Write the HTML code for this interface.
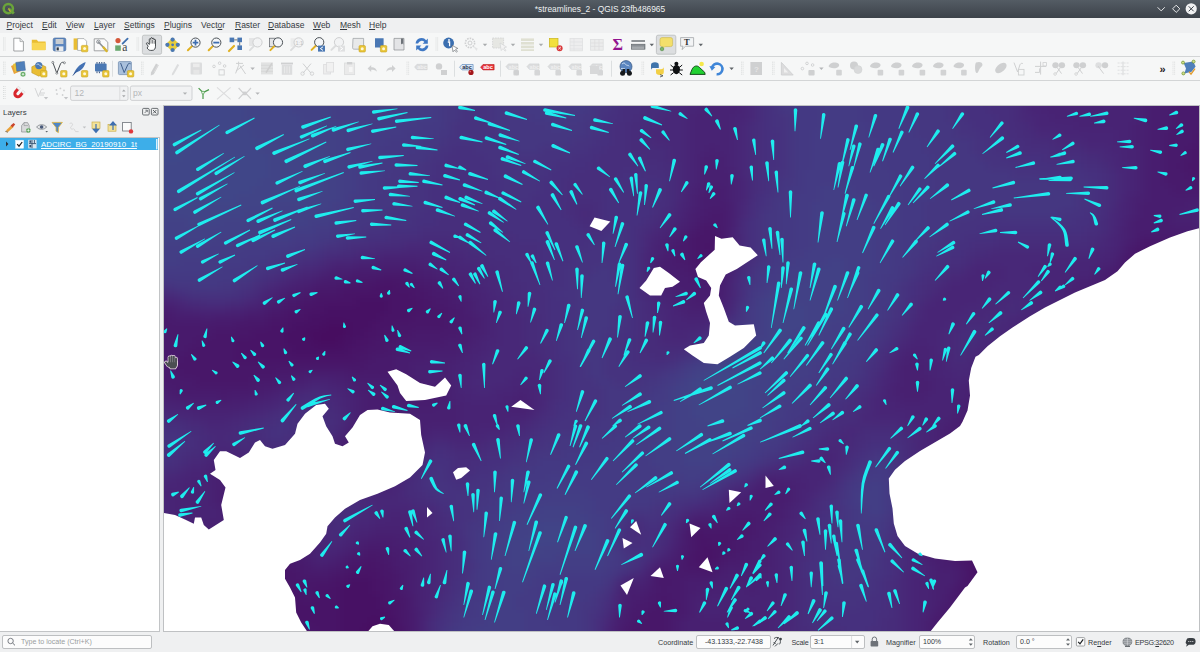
<!DOCTYPE html>
<html><head><meta charset="utf-8"><title>streamlines_2 - QGIS</title>
<style>
*{box-sizing:border-box;margin:0;padding:0}
html,body{width:1200px;height:652px;overflow:hidden;background:#eff0f1}
body{position:relative;font-family:"Liberation Sans","DejaVu Sans",sans-serif;font-size:8.6px;color:#353a3f}
.abs{position:absolute}
#title{left:0;top:0;width:1200px;height:18px;background:linear-gradient(#545c64,#3c4249)}
#title .t{left:0;width:1200px;top:4.4px;text-align:center;color:#eef0f1;font-size:8.4px}
#menubar{left:0;top:18px;width:1200px;height:15px;background:#eff0f1}
#menubar span{position:absolute;top:2.4px;font-size:8.5px;white-space:nowrap}
#menubar u{text-decoration-thickness:.6px;text-underline-offset:1px}
.tb{left:0;width:1200px;height:24px;background:#f6f7f7;border-bottom:1px solid #d3d5d6}
#layers{left:0;top:105px;width:161px;height:527px;background:#eff0f1}
#ltree{left:0;top:137px;width:160px;height:495px;background:#fff;border:1px solid #c2c4c6;border-left:none}
#lsel{left:0;top:138px;width:158px;height:12px;background:#3daee9}
#mapframe{left:163px;top:105px;width:1037px;height:527px;background:#fff;border:1px solid #bfc1c3}
#map{left:164px;top:106px;width:1035px;height:525px;overflow:hidden;background:#440154}
#status{left:0;top:632px;width:1200px;height:20px;background:#eff0f1}
.inp{background:#fcfcfc;border:1px solid #bdbfc1;border-radius:2px;height:14px;top:635px;font-size:7.1px;line-height:13px;padding-left:4px;white-space:nowrap;overflow:hidden}
.lbl{top:638.2px;font-size:7.2px;white-space:nowrap}
</style></head><body>
<div id="title" class="abs"><div class="t abs">*streamlines_2 - QGIS 23fb486965</div>
<svg class="abs" style="left:0;top:0" width="1200" height="18" viewBox="0 0 1200 18">
<circle cx="8.3" cy="8.6" r="4.6" fill="none" stroke="#6aa43a" stroke-width="2.6"/><path d="M8.5 8.5L13.8 13.6" stroke="#6aa43a" stroke-width="2.8"/><path d="M7.6 7.2l3.6 4.4-1.6-.2z" fill="#f0a13a"/>
<path d="M1157.6 7.3l3.6 3.6 3.6-3.6" fill="none" stroke="#e8eaeb" stroke-width="1"/>
<path d="M1176.2 5.2l3.6 3.6-3.6 3.6-3.6-3.6z" fill="none" stroke="#e8eaeb" stroke-width="1"/>
<circle cx="1191.2" cy="8.8" r="5.6" fill="#f1f2f3"/><path d="M1188.7 6.3l5 5m0-5l-5 5" stroke="#3c4249" stroke-width="1"/>
</svg></div>
<div id="menubar" class="abs">
<span style="left:6.5px"><u>P</u>roject</span><span style="left:42px"><u>E</u>dit</span><span style="left:66px"><u>V</u>iew</span><span style="left:94px"><u>L</u>ayer</span><span style="left:124px"><u>S</u>ettings</span><span style="left:164px"><u>P</u>lugins</span><span style="left:201px">Vect<u>o</u>r</span><span style="left:235px"><u>R</u>aster</span><span style="left:268px"><u>D</u>atabase</span><span style="left:313px"><u>W</u>eb</span><span style="left:340px"><u>M</u>esh</span><span style="left:369px"><u>H</u>elp</span>
</div>
<div class="tb abs" style="top:33px"></div>
<div class="tb abs" style="top:57px"></div>
<div class="tb abs" style="top:81px;border-bottom:none"></div>
<svg class="abs" style="left:0;top:0;pointer-events:none" width="1200" height="106" viewBox="0 0 1200 106"><path d="M3.5 37.5v14M5.1 37.5v14" stroke="#d0d2d3" stroke-width=".7" stroke-dasharray="1 1"/><path d="M13.8 38.2h6.2l3.4 3.4v9.4h-9.6z" fill="#fff" stroke="#8b8e91" stroke-width=".8"/><path d="M20 38.2v3.4h3.4" fill="#e6e7e8" stroke="#8b8e91" stroke-width=".6"/><path d="M31.8 39.8h5l1.4 1.6h7.4v8.6h-13.8z" fill="#e9bd33"/><path d="M31.8 42.8h14l-.6 7.4h-13z" fill="#f8d653"/><rect x="53.2" y="38" width="12.6" height="13" rx="1.6" fill="#5c86bf" stroke="#44699c" stroke-width=".6"/><rect x="55.6" y="39" width="7.8" height="5" fill="#c9cdd2"/><rect x="55.6" y="46.4" width="7.8" height="4.6" fill="#e9ebee"/><rect x="56.6" y="47.4" width="2.2" height="3" fill="#2f3a48"/><path d="M73.6 38.4h5v11.4h-5z" fill="#e9bd33"/><path d="M77.6 38.6h6.4l2.6 2.6v9.2h-9z" fill="#fff" stroke="#9a9da0" stroke-width=".7"/><rect x="81.4" y="45.4" width="6.4" height="6.4" rx="1" fill="#e9c63a" stroke="#c9a21c" stroke-width=".6"/><circle cx="84.6" cy="48.6" r="1.5" fill="#fff8d8"/><path d="M94.2 38.8h10l3.6 3.4v8.6h-13.6z" fill="#fafafa" stroke="#8b8e91" stroke-width=".8"/><path d="M98 41.5l7 7.5" stroke="#8b9096" stroke-width="1.6"/><path d="M103.6 47.4l3 3.6" stroke="#d9b62c" stroke-width="2.4" stroke-linecap="round"/><circle cx="98.4" cy="41.8" r="1.7" fill="none" stroke="#8b9096" stroke-width="1"/><circle cx="118" cy="40.6" r="2.6" fill="#d4573a"/><rect x="115.2" y="45.4" width="5.6" height="5.4" fill="#6aa870"/><path d="M122.6 43.6l5-5" stroke="#3e6fae" stroke-width="1.8" stroke-linecap="round"/><text x="122.2" y="51" font-family="Liberation Serif,serif" font-size="11.5" fill="#3a3e42">a</text><path d="M137.0 37.5v14M138.6 37.5v14" stroke="#d0d2d3" stroke-width=".7" stroke-dasharray="1 1"/><rect x="142.4" y="35.2" width="19.2" height="19" rx="1.6" fill="#dcdee0" stroke="#b9bbbd" stroke-width=".8"/><path d="M148.2 46.2l-1.6-2.2c-.6-.9.5-1.8 1.3-1l1.4 1.5v-5.1c0-1 1.5-1 1.5 0v-1c0-1 1.6-1 1.6 0v.6c0-1 1.6-1 1.6 0v1c0-.9 1.5-.9 1.5 0v6.200c0 2.6-1.2 4.2-3.4 4.200h-1.500c-1.5 0-2.5-1-3.5-2.400z" fill="#fff" stroke="#2b2f33" stroke-width=".85" stroke-linejoin="round"/><path d="M151 39.800v3.800M152.6 39.600v4M154.2 40.400v3.4" stroke="#2b2f33" stroke-width=".6"/><path d="M172.6 37.600l7.2 7.2-7.2 7.2-7.2-7.200z" fill="#e8cd3a"/><g fill="#4a78b4"><circle cx="172.6" cy="39.6" r="2.1"/><circle cx="172.6" cy="50" r="2.1"/><circle cx="167.4" cy="44.8" r="2.1"/><circle cx="177.8" cy="44.8" r="2.1"/><circle cx="172.6" cy="44.8" r="1.4"/></g><path d="M192.1 46.1l-4.2 4.2" stroke="#e0b020" stroke-width="2" stroke-linecap="round"/><circle cx="195.5" cy="42.6" r="4.6" fill="#f4f6f8" stroke="#4d5358" stroke-width="1"/><path d="M192.7 42.600h5.600M195.5 39.800v5.6" stroke="#3d6db0" stroke-width="1.7"/><path d="M212.9 46.1l-4.2 4.2" stroke="#e0b020" stroke-width="2" stroke-linecap="round"/><circle cx="216.3" cy="42.6" r="4.6" fill="#f4f6f8" stroke="#4d5358" stroke-width="1"/><path d="M213.3 42.600h6" stroke="#3d6db0" stroke-width="1.8"/><g fill="#4a78b4"><rect x="229.6" y="37.6" width="4.6" height="4.6"/><rect x="237.4" y="37.6" width="4.6" height="4.6"/><rect x="237.4" y="45.4" width="4.6" height="4.6"/></g><path d="M234 46l-5 5" stroke="#e0b020" stroke-width="2.2" stroke-linecap="round"/><path d="M234.2 39.900h3.200M239.7 42.200v3.2" stroke="#4d5358" stroke-width=".8"/><rect x="249" y="38" width="6" height="8" fill="#e4e5e6"/><path d="M254.1 45.9l-4.2 4.2" stroke="#dcddde" stroke-width="2" stroke-linecap="round"/><circle cx="257.5" cy="42.4" r="4.6" fill="#f2f3f4" stroke="#cfd0d1" stroke-width="1"/><rect x="269.6" y="38.2" width="6" height="8.6" fill="#e3e4e6" stroke="#5a5f64" stroke-width=".7"/><path d="M274.6 45.9l-4.2 4.2" stroke="#e0b020" stroke-width="2" stroke-linecap="round"/><circle cx="278.0" cy="42.4" r="4.6" fill="#f4f6f8" stroke="#4d5358" stroke-width="1"/><rect x="290.6" y="38.2" width="6" height="8.6" fill="#ebecec"/><path d="M295.2 45.9l-4.2 4.2" stroke="#dcddde" stroke-width="2" stroke-linecap="round"/><circle cx="298.6" cy="42.4" r="4.6" fill="#f2f3f4" stroke="#cfd0d1" stroke-width="1"/><text x="295.4" y="44.6" font-size="5.5" fill="#bfc0c1" font-family="Liberation Sans,sans-serif">1:1</text><path d="M315.8 45.7l-4.2 4.2" stroke="#e0b020" stroke-width="2" stroke-linecap="round"/><circle cx="319.2" cy="42.2" r="4.6" fill="#f4f6f8" stroke="#4d5358" stroke-width="1"/><rect x="318" y="45.6" width="7" height="6" fill="#4a78b4"/><path d="M323 46.800l-2.6 1.8 2.6 1.8" fill="none" stroke="#fff" stroke-width="1"/><path d="M335.6 45.7l-4.2 4.2" stroke="#dcddde" stroke-width="2" stroke-linecap="round"/><circle cx="339.0" cy="42.2" r="4.6" fill="#f2f3f4" stroke="#cfd0d1" stroke-width="1"/><rect x="338" y="45.6" width="7" height="6" fill="#dfe0e1"/><path d="M340.2 46.800l2.6 1.8-2.6 1.8" fill="none" stroke="#fff" stroke-width="1"/><path d="M353 38.400h10.600v10.800h-9.400c-1.2 0-1.6-.6-1.6-1.600z" fill="#e8e9ea" stroke="#9a9da0" stroke-width=".7"/><rect x="359.0" y="45.6" width="6.4" height="6.4" rx="1" fill="#e9c63a" stroke="#c9a21c" stroke-width=".6"/><circle cx="362.2" cy="48.8" r="1.5" fill="#fff8d8"/><path d="M375 38.200h8.600v11.600l-4-2.400h-4.600z" fill="#4a78b4"/><rect x="380.4" y="45.6" width="6.4" height="6.4" rx="1" fill="#e9c63a" stroke="#c9a21c" stroke-width=".6"/><circle cx="383.6" cy="48.8" r="1.5" fill="#fff8d8"/><path d="M394 38.400h10v11.600h-10z" fill="#e3e4e6" stroke="#8b8e91" stroke-width=".7"/><path d="M401 38.400v6l1.2-1 1.2 1v-6z" fill="#6d7278"/><path d="M415.6 43.600a6 6 0 0 1 10.6-3.400l1.6-1.600v5.200h-5.200l1.8-1.800a3.7 3.7 0 0 0-6.3 1.600z" fill="#3f78c4"/><path d="M428.4 45.600a6 6 0 0 1-10.6 3.400l-1.6 1.600v-5.200h5.200l-1.8 1.800a3.7 3.7 0 0 0 6.3-1.600z" fill="#3f78c4"/><path d="M436.0 37.5v14M437.6 37.5v14" stroke="#d0d2d3" stroke-width=".7" stroke-dasharray="1 1"/><circle cx="448.6" cy="43" r="5.4" fill="#3b6fb0"/><circle cx="449" cy="40" r=".9" fill="#fff"/><path d="M447.8 42h1.800v4.2" stroke="#fff" stroke-width="1.3" fill="none"/><path d="M452 45.400l1 6.4 1.6-1.8 1.8 2.2 1-.8-1.8-2.2 2.2-.8z" fill="#fff" stroke="#5a5f64" stroke-width=".6"/><circle cx="470" cy="43" r="4.6" fill="none" stroke="#cfd0d1" stroke-width="1.6" stroke-dasharray="1.6 1"/><circle cx="470" cy="43" r="2" fill="none" stroke="#cfd0d1" stroke-width="1"/><path d="M473 46l3.5 5 1.2-2.500z" fill="#e3e4e5"/><path d="M482.8 43.8h4.4l-2.2 2.4z" fill="#a9abad"/><rect x="492.6" y="38" width="11" height="10" fill="#e6e7e3" stroke="#cfd0d1" stroke-width=".8" stroke-dasharray="1.5 1"/><path d="M500 43l1.2 7.6 1.8-2 2 2.6 1-.8-2-2.6 2.6-.8z" fill="#f3f3f3" stroke="#cfd0d1" stroke-width=".6"/><path d="M510.8 43.8h4.4l-2.2 2.4z" fill="#a9abad"/><g fill="#dfe0d2"><rect x="521" y="38.4" width="13" height="2.6"/><rect x="521" y="42" width="13" height="2.6"/><rect x="521" y="45.6" width="13" height="2.6"/><rect x="521" y="49.2" width="13" height="1.8"/></g><path d="M538.8 43.8h4.4l-2.2 2.4z" fill="#a9abad"/><rect x="549.4" y="38.4" width="8.6" height="8.6" fill="#f2e03c" stroke="#c9b51e" stroke-width=".7"/><circle cx="559.6" cy="48.2" r="3" fill="#d9383a"/><path d="M558.2 49.400l2.8-2.600M558.4 47l2.4 2.4" stroke="#fff" stroke-width=".8"/><rect x="570" y="38.4" width="12.6" height="12.4" fill="#ededee" stroke="#e0e1e2" stroke-width=".8"/><path d="M574 38.400v12.400M570 42h12.600M570 45.500h12.600M570 49h12.6" stroke="#e0e1e2" stroke-width=".7"/><rect x="590.6" y="39.4" width="12.6" height="10.8" fill="#ebecec" stroke="#dedfe0" stroke-width=".8"/><path d="M590.6 43h12.600M590.6 46.400h12.600M594.8 39.400v10.800M599 39.400v10.8" stroke="#dcddde" stroke-width=".7"/><text x="612.4" y="50.4" font-size="16" font-weight="bold" fill="#93148f" font-family="Liberation Serif,serif">Σ</text><rect x="631.4" y="44.2" width="13.6" height="5" fill="#8b9095" stroke="#5f6468" stroke-width=".6"/><path d="M633 46.500v2.500M635 46.500v2.500M637 46.500v2.500M639 46.500v2.500M641 46.500v2.500M643 46.500v2.5" stroke="#e8e9ea" stroke-width=".6"/><path d="M631.4 41h13.6" stroke="#4a4f54" stroke-width="1.2"/><path d="M649.6 43.8h4.4l-2.2 2.4z" fill="#5f6468"/><rect x="656.4" y="35.2" width="19.4" height="19" rx="1.6" fill="#dcdee0" stroke="#b9bbbd" stroke-width=".8"/><rect x="660" y="37.6" width="12.6" height="9" rx="2" fill="#f3df6b" stroke="#c9b64a" stroke-width=".6"/><path d="M663.2 46.600l-1 2.8 3.4-2.800z" fill="#f3df6b"/><circle cx="662" cy="49" r="1.8" fill="#7cb56a" stroke="#4f8a45" stroke-width=".6"/><path d="M680.6 37.600h13v8.600h-8l-3.6 3.4 1-3.400h-2.400z" fill="#f3f4f5" stroke="#9a9da0" stroke-width=".7"/><text x="684" y="45.2" font-size="8.5" font-weight="bold" fill="#2b2f33" font-family="Liberation Serif,serif">T</text><path d="M698.6 43.8h4.4l-2.2 2.4z" fill="#5f6468"/><path d="M3.5 61.7v14M5.1 61.7v14" stroke="#d0d2d3" stroke-width=".7" stroke-dasharray="1 1"/><path d="M11 66l7-3 3 8-7 3z" fill="#e9a13a"/><path d="M13 64l8-2.6 2 8-8 2.600z" fill="#e9c63a"/><path d="M15.8 62.400l8.6-1 1 8.8-8.6 1z" fill="#4f7fba" stroke="#3c659a" stroke-width=".5"/><circle cx="23" cy="74.2" r="2.8" fill="#5aa55a" stroke="#fff" stroke-width=".6"/><path d="M21.6 74.200h2.800M23 72.800v2.8" stroke="#fff" stroke-width=".8"/><path d="M31.8 66.800l7-3.4 7 3.400v6l-7 3.4-7-3.400z" fill="#e9bd33" stroke="#b58f1c" stroke-width=".5"/><circle cx="38.8" cy="65.6" r="3.6" fill="#4a78b4"/><path d="M36.6 64.600c1-.8 2.4-.6 3 .6s1.8.6 2.4 1.8" stroke="#cfe0f2" stroke-width=".9" fill="none"/><rect x="40.6" y="70.6" width="6.4" height="6.4" rx="1" fill="#e9c63a" stroke="#c9a21c" stroke-width=".6"/><circle cx="43.8" cy="73.8" r="1.5" fill="#fff8d8"/><path d="M52.8 62.400l4 10.8 3.8-9.600c1-1.6 2.6-1.6 3.8-.8" fill="none" stroke="#4a4f54" stroke-width="1"/><circle cx="52.8" cy="62.4" r="1" fill="#fff" stroke="#4a4f54" stroke-width=".6"/><circle cx="56.8" cy="73.2" r="1" fill="#fff" stroke="#4a4f54" stroke-width=".6"/><circle cx="64.4" cy="62.8" r="1" fill="#fff" stroke="#4a4f54" stroke-width=".6"/><rect x="60.6" y="70.6" width="6.4" height="6.4" rx="1" fill="#e9c63a" stroke="#c9a21c" stroke-width=".6"/><circle cx="63.8" cy="73.8" r="1.5" fill="#fff8d8"/><path d="M73.2 75c2-5.6 6-10.8 12.4-13-0.6 4.6-4.6 9-9.4 10.600z" fill="#4472b4"/><path d="M72.8 75.600l5-6" stroke="#2f4f86" stroke-width=".8"/><rect x="81.4" y="70.6" width="6.4" height="6.4" rx="1" fill="#e9c63a" stroke="#c9a21c" stroke-width=".6"/><circle cx="84.6" cy="73.8" r="1.5" fill="#fff8d8"/><rect x="95" y="63.6" width="11.6" height="8" rx="1" fill="#4a78b4"/><path d="M97 62v1.600M99.4 62v1.600M101.8 62v1.600M104.2 62v1.600M97 71.600v1.600M99.4 71.600v1.6" stroke="#34507c" stroke-width="1"/><rect x="102.6" y="70.6" width="6.4" height="6.4" rx="1" fill="#e9c63a" stroke="#c9a21c" stroke-width=".6"/><circle cx="105.8" cy="73.8" r="1.5" fill="#fff8d8"/><path d="M112.5 60.7v16" stroke="#d6d8d9" stroke-width=".8"/><rect x="118.4" y="61.6" width="13" height="13" rx="1" fill="#a9c0dc" stroke="#6b86aa" stroke-width=".7"/><path d="M120.6 63l3.6 9.6 3.8-8.400c.8-1 1.8-1 2.6-.4" fill="none" stroke="#3f5f8c" stroke-width="1"/><rect x="127.4" y="70.6" width="6.4" height="6.4" rx="1" fill="#e9c63a" stroke="#c9a21c" stroke-width=".6"/><circle cx="130.6" cy="73.8" r="1.5" fill="#fff8d8"/><path d="M141.5 61.7v14M143.1 61.7v14" stroke="#d0d2d3" stroke-width=".7" stroke-dasharray="1 1"/><path d="M151 72.600l5-9 2.8 1.6-5 9-3 1.400z" fill="#cfd0d1"/><path d="M154 72.400l4-7.4" stroke="#e0e0e0" stroke-width=".8"/><path d="M172 73.600l5.4-9.6 1.8 1-5.4 9.6-2 1z" fill="#dcddde"/><rect x="190.6" y="62.6" width="11.4" height="11.8" rx="1" fill="#dcddde"/><rect x="193" y="63.6" width="6.6" height="3.6" fill="#ececec"/><rect x="193.4" y="69.8" width="6" height="4" fill="#e6e6e6"/><g fill="none" stroke="#cfd0d1" stroke-width=".9"><circle cx="214" cy="66.4" r="1.3"/><circle cx="219.6" cy="63.2" r="1.3"/><circle cx="224.6" cy="66" r="1.3"/><rect x="219" y="69.8" width="5.2" height="5.2"/></g><path d="M236 63.400h7M238.6 61.600v3.800l-3 8M240 65.600l5.6 8.400M236 71l8-6" stroke="#cfd0d1" stroke-width="1" fill="none"/><path d="M250.4 67.6h4.4l-2.2 2.4z" fill="#b3b5b7"/><rect x="261" y="62.4" width="12" height="12" fill="#e1e2e2"/><path d="M261 65.400h12M261 68.400h12M261 71.400h12" stroke="#d2d3d3" stroke-width=".6"/><path d="M266 72.600l6-9.4" stroke="#cfcfcf" stroke-width="1.6"/><rect x="281.8" y="64.8" width="10.4" height="10" fill="#dcddde"/><rect x="281" y="62.6" width="12" height="1.8" fill="#cfd0d1"/><path d="M284.6 66.400v7M287 66.400v7M289.4 66.400v7" stroke="#ececec" stroke-width=".8"/><path d="M303 63.600l8 9.600M311 63.600l-8 9.6" stroke="#cfd0d1" stroke-width="1"/><circle cx="312" cy="73.6" r="1.7" fill="none" stroke="#cfd0d1" stroke-width=".9"/><circle cx="302.6" cy="73.6" r="1.7" fill="none" stroke="#cfd0d1" stroke-width=".9"/><rect x="323.6" y="64.4" width="7" height="9.6" fill="#ededed" stroke="#dcddde" stroke-width=".8"/><rect x="326.6" y="62.4" width="7" height="9.6" fill="#f1f1f1" stroke="#dcddde" stroke-width=".8"/><rect x="344.6" y="63" width="10" height="11.6" fill="#eaeaea" stroke="#dcddde" stroke-width=".9"/><rect x="347" y="62" width="5.2" height="2.4" fill="#cfd0d1"/><rect x="349" y="67" width="3.6" height="5" fill="#f6f6f6"/><path d="M367.6 68.400l3.6-3.400v2.200c3.6 0 5.6 1.8 5.6 4.6-1-1.4-2.6-2-5.6-2v2.200z" fill="#cfd0d1"/><path d="M395.6 68.400l-3.6-3.400v2.200c-3.6 0-5.6 1.8-5.6 4.6 1-1.4 2.6-2 5.6-2v2.200z" fill="#cfd0d1"/><path d="M407.0 61.7v14M408.6 61.7v14" stroke="#d0d2d3" stroke-width=".7" stroke-dasharray="1 1"/><path d="M414.6 67.0l2.4-2.700h10.1v5.400h-10.1z" fill="#dcddde" stroke="#cfd0d1" stroke-width=".6"/><text x="417.2" y="69.0" font-size="5.6" font-weight="bold" fill="#f0f0f0" font-family="Liberation Sans,sans-serif">abc</text><circle cx="439" cy="66.4" r="3.2" fill="#cfd0d1"/><rect x="441" y="70" width="6" height="5" fill="#cfd0d1"/><path d="M454.5 60.7v16" stroke="#d6d8d9" stroke-width=".8"/><path d="M459.6 67.2l2.4-2.700h11.1v5.400h-11.1z" fill="#dce9f7" stroke="#4a78b4" stroke-width=".6"/><text x="462.2" y="69.2" font-size="5.6" font-weight="bold" fill="#1f2f4a" font-family="Liberation Sans,sans-serif">abc</text><circle cx="471" cy="72.4" r="2.6" fill="#a3161a"/><circle cx="470.3" cy="71.6" r=".8" fill="#e36a6a"/><path d="M480.6 67.2l2.4-2.700h11.1v5.400h-11.1z" fill="#e8353a" stroke="#b71c20" stroke-width=".6"/><text x="483.2" y="69.2" font-size="5.6" font-weight="bold" fill="#fff" font-family="Liberation Sans,sans-serif">abc</text><path d="M500.5 60.7v16" stroke="#d6d8d9" stroke-width=".8"/><path d="M506.0 66.6l2.4-2.700h9.6v5.400h-9.6z" fill="#dcddde" stroke="#cfd0d1" stroke-width=".6"/><text x="508.6" y="68.6" font-size="5.6" font-weight="bold" fill="#efefef" font-family="Liberation Sans,sans-serif">abc</text><rect x="513.4" y="70" width="5.6" height="5.6" rx="1" fill="#d5d6d7"/><path d="M527.0 66.6l2.4-2.700h9.6v5.400h-9.6z" fill="#dcddde" stroke="#cfd0d1" stroke-width=".6"/><text x="529.6" y="68.6" font-size="5.6" font-weight="bold" fill="#efefef" font-family="Liberation Sans,sans-serif">abc</text><rect x="534.4" y="70" width="5.6" height="5.6" rx="1" fill="#d5d6d7"/><path d="M548.0 66.6l2.4-2.700h9.6v5.400h-9.6z" fill="#dcddde" stroke="#cfd0d1" stroke-width=".6"/><text x="550.6" y="68.6" font-size="5.6" font-weight="bold" fill="#efefef" font-family="Liberation Sans,sans-serif">abc</text><rect x="555.4" y="70" width="5.6" height="5.6" rx="1" fill="#d5d6d7"/><path d="M569.0 66.6l2.4-2.700h9.6v5.400h-9.6z" fill="#dcddde" stroke="#cfd0d1" stroke-width=".6"/><text x="571.6" y="68.6" font-size="5.6" font-weight="bold" fill="#efefef" font-family="Liberation Sans,sans-serif">abc</text><rect x="576.4" y="70" width="5.6" height="5.6" rx="1" fill="#d5d6d7"/><path d="M590.0 66.6l2.4-2.700h9.6v5.400h-9.6z" fill="#dcddde" stroke="#cfd0d1" stroke-width=".6"/><text x="592.6" y="68.6" font-size="5.6" font-weight="bold" fill="#efefef" font-family="Liberation Sans,sans-serif">abc</text><rect x="597.4" y="70" width="5.6" height="5.6" rx="1" fill="#d5d6d7"/><circle cx="516.4" cy="72.6" r="2.6" fill="#d0d1d2"/><rect x="590" y="66" width="9" height="8" fill="#d7d8d9"/><path d="M611.5 60.7v16" stroke="#d6d8d9" stroke-width=".8"/><circle cx="626" cy="66.6" r="6" fill="#5b86c0" stroke="#33517c" stroke-width=".7"/><path d="M622 64c1.6-1.6 3-1 3.6.4s2.6.4 3.6 1.800M621 68.600c1.6-.6 2.6.4 4 .2" stroke="#cfe0f2" stroke-width=".9" fill="none"/><circle cx="622.6" cy="73.2" r="2.5" fill="#15181b"/><circle cx="629.4" cy="73.2" r="2.5" fill="#15181b"/><rect x="622.6" y="69" width="2.6" height="4" fill="#15181b"/><rect x="626.8" y="69" width="2.6" height="4" fill="#15181b"/><path d="M642.0 61.7v14M643.6 61.7v14" stroke="#d0d2d3" stroke-width=".7" stroke-dasharray="1 1"/><path d="M651 68.800v-3.600c0-2.2 1.4-3 4-3s3.8.8 3.8 3v2.800h-5c-1.6 0-2.8.6-2.8 2.600z" fill="#3f74ab"/><path d="M663.8 68.400v3.600c0 2.2-1.4 3-4 3s-3.8-.8-3.8-3v-2.800h5c1.6 0 2.8-.6 2.8-2.600z" fill="#f2cf45"/><path d="M660 74.600l3 1.2-3 1.2" fill="none" stroke="#2b2f33" stroke-width=".7"/><ellipse cx="676.4" cy="69.6" rx="3.6" ry="4.6" fill="#0d0f11"/><circle cx="676.4" cy="63.8" r="2" fill="#0d0f11"/><path d="M670.6 65l3 2.600M682.2 65l-3 2.600M670 70h3M682.8 70h-3M670.6 75l3-2.400M682.2 75l-3-2.4" stroke="#0d0f11" stroke-width="1"/><circle cx="701.6" cy="64" r="2.3" fill="#f6e84a"/><path d="M690 74.400l2-5c1.6-3.6 5-4.4 7.2-2.200l5.4 5 .6 2.200z" fill="#22d132" stroke="#0d3b12" stroke-width=".9" stroke-linejoin="round"/><path d="M716.6 74.200a5.3 5.3 0 1 0-4.6-6.6" fill="none" stroke="#3f86d8" stroke-width="2.6"/><path d="M709.4 66l2.4 4.8 3.6-3.800z" fill="#3f86d8"/><path d="M729.4 67.6h4.4l-2.2 2.4z" fill="#5f6468"/><path d="M741.5 61.7v14M743.1 61.7v14" stroke="#d0d2d3" stroke-width=".7" stroke-dasharray="1 1"/><rect x="750.4" y="62" width="11.6" height="13" fill="#cfd0d1"/><text x="754" y="71.6" font-size="8" font-weight="bold" fill="#e4e4e4" font-family="Liberation Sans,sans-serif">?</text><path d="M772.5 61.7v14M774.1 61.7v14" stroke="#d0d2d3" stroke-width=".7" stroke-dasharray="1 1"/><path d="M781.4 75v-12.600l11.8 12.600z" fill="#dcdcdd" stroke="#cfd0d1" stroke-width=".9"/><path d="M784 72.400v-4.400l4.2 4.400z" fill="#f0f0f0"/><g fill="none" stroke="#cfd0d1" stroke-width=".9"><circle cx="802.4" cy="68.6" r="1.3"/><circle cx="807" cy="63.4" r="1.3"/><circle cx="812.6" cy="65" r="1.3"/></g><rect x="808.4" y="70" width="6.2" height="5.4" rx="1" fill="#cfd0d1"/><path d="M819.2 67.6h4.4l-2.2 2.4z" fill="#b3b5b7"/><path d="M829.6 64.4c2-2 4.6-2.2 7-1.600s3.6 2.4 1.6 4.2-6 1.4-8 .6-2-2-.6-3.200z" fill="#cfd0d1"/><rect x="836.2" y="69.8" width="5.6" height="5.6" rx="1" fill="#d2d3d4"/><circle cx="854" cy="65.6" r="4" fill="#cfd0d1"/><circle cx="858" cy="69.6" r="4" fill="#d9dadb" stroke="#cfd0d1" stroke-width=".5"/><path d="M871.0 64.4c2-2 4.6-2.2 7-1.600s3.6 2.4 1.6 4.2-6 1.4-8 .6-2-2-.6-3.200z" fill="#cfd0d1"/><rect x="877.6" y="69.8" width="5.6" height="5.6" rx="1" fill="#d2d3d4"/><path d="M892.0 64.4c2-2 4.6-2.2 7-1.600s3.6 2.4 1.6 4.2-6 1.4-8 .6-2-2-.6-3.200z" fill="#cfd0d1"/><rect x="898.6" y="69.8" width="5.6" height="5.6" rx="1" fill="#d2d3d4"/><path d="M913.0 64.4c2-2 4.6-2.2 7-1.600s3.6 2.4 1.6 4.2-6 1.4-8 .6-2-2-.6-3.200z" fill="#cfd0d1"/><rect x="919.6" y="69.8" width="5.6" height="5.6" rx="1" fill="#d2d3d4"/><path d="M934.0 64.4c2-2 4.6-2.2 7-1.600s3.6 2.4 1.6 4.2-6 1.4-8 .6-2-2-.6-3.200z" fill="#cfd0d1"/><rect x="940.6" y="69.8" width="5.6" height="5.6" rx="1" fill="#d2d3d4"/><path d="M954.5 64.4c2-2 4.6-2.2 7-1.600s3.6 2.4 1.6 4.2-6 1.4-8 .6-2-2-.6-3.200z" fill="#cfd0d1"/><rect x="961.1" y="69.8" width="5.6" height="5.6" rx="1" fill="#d2d3d4"/><path d="M976 62.600c3-1 6-.6 6.4 1.600s-2 3-3 5-1.4 4.4-3 3.8-1.8-8.6-.4-10.400z" fill="#cfd0d1"/><path d="M996 72.400c-1.6-1.6-1-4 1.6-6.600s6.6-4 8.2-2.4.6 4.6-2 7-6.2 3.6-7.8 2z" fill="#cfd0d1"/><path d="M1014 62.600l3.6 9.4 2.4-7.400c.8-1.2 1.8-1.6 2.8-1" fill="none" stroke="#cfd0d1" stroke-width="1"/><rect x="1018.4" y="69.4" width="5.6" height="5.6" fill="none" stroke="#cfd0d1" stroke-width=".9"/><path d="M1040.6 61.600v13M1035 66.400h11M1035 72.400h4.600v-4" fill="none" stroke="#cfd0d1" stroke-width="1"/><rect x="1043" y="62.6" width="3.4" height="3.4" fill="none" stroke="#cfd0d1" stroke-width=".8"/><ellipse cx="1055.5" cy="65.2" rx="3.2" ry="3" fill="#cfd0d1"/><ellipse cx="1061.9" cy="65.2" rx="3.2" ry="3" fill="#cfd0d1"/><path d="M1060.1 68l-4 5.600M1057.5 68l4 5.6" stroke="#cfd0d1" stroke-width="1"/><circle cx="1055.1" cy="74" r="1.3" fill="none" stroke="#cfd0d1" stroke-width=".8"/><ellipse cx="1076.5" cy="65.2" rx="3.2" ry="3" fill="#cfd0d1"/><ellipse cx="1082.9" cy="65.2" rx="3.2" ry="3" fill="#cfd0d1"/><path d="M1081.1 68l-4 5.600M1078.5 68l4 5.6" stroke="#cfd0d1" stroke-width="1"/><circle cx="1076.1" cy="74" r="1.3" fill="none" stroke="#cfd0d1" stroke-width=".8"/><ellipse cx="1098.6" cy="65.2" rx="3.2" ry="3" fill="#dedfe0"/><ellipse cx="1105" cy="65.2" rx="3.2" ry="3" fill="#cfd0d1"/><path d="M1098 66l5.6 7.6" stroke="#cfd0d1" stroke-width="1"/><path d="M1117.6 63h11M1117.6 66.600h11M1117.6 70.200h11M1117.6 73.800h11" stroke="#dfe0e1" stroke-width="1" stroke-dasharray="2 1"/><path d="M1123 61.600v13.6" stroke="#d4d5d6" stroke-width=".9"/><text x="1159.5" y="72.8" font-size="11" font-weight="bold" fill="#1d2023" font-family="Liberation Sans,sans-serif">»</text><path d="M1173.0 61.7v14M1174.6 61.7v14" stroke="#d0d2d3" stroke-width=".7" stroke-dasharray="1 1"/><path d="M1183.6 63l9.6-1.4 2.4 5-4 5.2-7.2 1.6 1.6-5z" fill="#4f7fba"/><g fill="#cfe08a" stroke="#6d8f2a" stroke-width=".7"><circle cx="1183" cy="62.6" r="1.5"/><circle cx="1193.6" cy="61.6" r="1.5"/><circle cx="1183.4" cy="73.4" r="1.5"/></g><path d="M1189 71.600l2 2.6 4-5.6" fill="none" stroke="#e09a2a" stroke-width="1.3"/><path d="M3.5 86.0v14M5.1 86.0v14" stroke="#d0d2d3" stroke-width=".7" stroke-dasharray="1 1"/><g transform="rotate(40 18.5 93)"><path d="M14 90v4a4.5 4.5 0 0 0 9 0v-4h-3v4a1.5 1.5 0 0 1-3 0v-4z" fill="#d8262c"/><rect x="14" y="88" width="3" height="2.4" fill="#f2f2f2" stroke="#c9c9c9" stroke-width=".3"/><rect x="20" y="88" width="3" height="2.4" fill="#f2f2f2" stroke="#c9c9c9" stroke-width=".3"/></g><path d="M35 88l3.4 8.6 2.6-6.400c.6-1 1.6-1.4 2.6-.8M40 93h5M40 95h4" fill="none" stroke="#cfd0d1" stroke-width=".9"/><path d="M43.8 97.0h4.4l-2.2 2.4z" fill="#c3c5c7"/><g fill="#cfd0d1"><circle cx="56.4" cy="90" r=".9"/><circle cx="60.4" cy="88.4" r=".9"/><circle cx="64" cy="90.4" r=".9"/><circle cx="57" cy="94" r=".9"/><circle cx="62.6" cy="95" r=".9"/></g><path d="M63.8 97.0h4.4l-2.2 2.4z" fill="#c3c5c7"/><rect x="70.6" y="86" width="57.4" height="14.4" rx="1.6" fill="#f1f2f3" stroke="#c6c8ca" stroke-width=".8"/><text x="74.4" y="96.4" font-size="8.6" fill="#b4b6b8" font-family="Liberation Sans,sans-serif">12</text><path d="M119.8 86.400v13.6" stroke="#d2d4d6" stroke-width=".7"/><path d="M122 91.400l1.8-2 1.8 2zM122 95.200l1.8 2 1.8-2z" fill="#a6a8aa"/><rect x="130.4" y="86" width="61.6" height="14.4" rx="1.6" fill="#f1f2f3" stroke="#c6c8ca" stroke-width=".8"/><text x="133" y="96.4" font-size="8.6" fill="#b4b6b8" font-family="Liberation Sans,sans-serif">px</text><path d="M182.8 92.4h4.4l-2.2 2.4z" fill="#b0b2b4"/><path d="M203 99v-6.400l-4.4-4.400M203 92.600l6-3" fill="none" stroke="#4a9a4a" stroke-width="1.2"/><circle cx="203" cy="92.6" r="1.4" fill="#dff0df" stroke="#4a9a4a" stroke-width=".6"/><path d="M217 87.400l13.6 12M230.6 87.400l-13.6 12" stroke="#dcddde" stroke-width="1.2"/><path d="M238.6 88l5 5.4-5 5.400M251 88l-5 5.4 5 5.4" fill="none" stroke="#cfd0d1" stroke-width="1.2"/><rect x="243" y="91.6" width="3.6" height="3.6" fill="#cfd0d1"/><path d="M255.4 92.4h4.4l-2.2 2.4z" fill="#b3b5b7"/></svg>
<div id="layers" class="abs"></div>
<div class="abs" style="left:3px;top:107.6px;font-size:7.9px">Layers</div>
<div id="ltree" class="abs"></div>
<div id="lsel" class="abs"></div>
<div class="abs" style="left:41px;top:139.6px;font-size:7.85px;color:#fff;text-decoration:underline;text-decoration-thickness:.6px;white-space:nowrap">ADCIRC_BG_20190910_1t</div>
<svg class="abs" style="left:0;top:0;pointer-events:none" width="180" height="380" viewBox="0 0 180 380"><rect x="142.6" y="108.4" width="6.6" height="6.6" rx="1" fill="none" stroke="#4a4f54" stroke-width=".8"/><path d="M144.6 113l2.6-2.600M145.4 110.200h1.900v1.9" fill="none" stroke="#4a4f54" stroke-width=".7"/><rect x="151.4" y="108.4" width="6.6" height="6.6" rx="1" fill="none" stroke="#4a4f54" stroke-width=".8"/><path d="M153 110l3.4 3.400M156.4 110l-3.4 3.4" stroke="#4a4f54" stroke-width=".9"/><path d="M6 130.600l5.6-5.6 2 2-5.6 5z" fill="#e9a13a"/><path d="M10.6 125.400l3-2.4 1.6 1.6-2.6 2.800z" fill="#c9452c"/><path d="M5.4 131.400l2.6.8" stroke="#7a5a2a" stroke-width=".9"/><path d="M21.6 132v-6.400l2.4-3h3.600l1.6 3v6.400z" fill="#d9dadb" stroke="#8b8e91" stroke-width=".7"/><path d="M24 122.600v3h4" fill="none" stroke="#8b8e91" stroke-width=".6"/><rect x="26.4" y="128.4" width="4" height="4" rx=".8" fill="#5aa55a"/><path d="M27.2 130.400h2.400M28.4 129.200v2.4" stroke="#fff" stroke-width=".7"/><path d="M36.6 127c2-3 8-3 10 0-2 3-8 3-10 0z" fill="#e4e6e8" stroke="#6d7278" stroke-width=".7"/><circle cx="41.6" cy="127" r="1.8" fill="#4a5a7a"/><path d="M45.4 131l1.3 1.4 1.3-1.400z" fill="#5f6468"/><path d="M52 122.400h10.400l-4 5v5.200l-2.4-1.400v-3.800z" fill="#4f86c6" stroke="#e2b53a" stroke-width=".8"/><path d="M69.6 123.600c1.6-1 3-.4 3 1s-2 1.6-2 3 1.6 2 3 1M74 129l1.6 2.600h3" fill="none" stroke="#d2d3d4" stroke-width=".9"/><path d="M82.6 126.600h3.600l-1.8 2z" fill="#c0c2c4"/><rect x="92" y="122" width="8" height="6.6" fill="#f3e29a" stroke="#c7a83a" stroke-width=".6"/><path d="M96 124v8M93.4 129.400l2.6 3 2.6-3z" fill="#3f6fb0" stroke="#3f6fb0" stroke-width="1.2"/><rect x="108" y="124.6" width="8" height="6.6" fill="#f3e29a" stroke="#c7a83a" stroke-width=".6"/><path d="M113 130v-7M110.4 125l2.6-3 2.6 3z" fill="#3f6fb0" stroke="#3f6fb0" stroke-width="1.2"/><rect x="122.6" y="122.4" width="8.6" height="8.6" fill="#fbfbfb" stroke="#6d7278" stroke-width=".8"/><circle cx="131" cy="131.4" r="2.2" fill="#e0383c"/><path d="M6 141.600l2.4 2.4-2.4 2.400z" fill="#2b3035"/><rect x="15.6" y="140.2" width="8" height="8" fill="#fff" stroke="#e6f3fb" stroke-width=".5"/><path d="M17.2 144.200l1.8 2 3.2-4.2" fill="none" stroke="#1d2023" stroke-width="1.2"/><rect x="28.2" y="139.8" width="8.4" height="8.6" fill="#d8e6f0"/><path d="M29 143.600h7M32 140v8.200M34.4 140v3.4" stroke="#36506e" stroke-width=".9"/><rect x="29.4" y="140.4" width="1.8" height="2.4" fill="#36506e"/><rect x="29.4" y="145" width="1.8" height="2.4" fill="#36506e"/><rect x="156.2" y="139" width="1.2" height="10.4" fill="#fff"/></svg>
<div id="mapframe" class="abs"></div>
<div id="map" class="abs"><svg width="1035" height="525" viewBox="164 106 1035 525" style="display:block"><defs><filter id="bl" x="-5%" y="-5%" width="110%" height="110%" color-interpolation-filters="sRGB"><feGaussianBlur stdDeviation="5"/></filter></defs><rect x="144" y="86" width="1075" height="565" fill="#440154"/><g filter="url(#bl)"><path fill="#470d60" d="M324 322h24v8h-24zM308 330h40v8h-40zM316 338h24v8h-24zM372 618h8v8h-8zM364 626h16v8h-16z"/><path fill="#471164" d="M356 298h32v8h-32zM324 306h64v8h-64zM308 314h72v8h-72zM292 322h32v8h-32zM348 322h24v8h-24zM284 330h24v8h-24zM348 330h16v8h-16zM284 338h32v8h-32zM340 338h16v8h-16zM292 346h56v8h-56zM972 562h8v8h-8zM972 570h8v8h-8zM348 578h24v8h-24zM340 586h32v8h-32zM340 594h40v8h-40zM340 602h40v8h-40zM340 610h48v8h-48zM340 618h32v8h-32zM380 618h16v8h-16zM340 626h24v8h-24zM380 626h16v8h-16zM340 634h48v8h-48zM348 642h40v8h-40z"/><path fill="#481467" d="M708 242h8v8h-8zM372 282h24v8h-24zM340 290h72v8h-72zM316 298h40v8h-40zM388 298h32v8h-32zM300 306h24v8h-24zM388 306h32v8h-32zM284 314h24v8h-24zM380 314h32v8h-32zM268 322h24v8h-24zM372 322h24v8h-24zM252 330h32v8h-32zM364 330h16v8h-16zM236 338h48v8h-48zM356 338h16v8h-16zM236 346h56v8h-56zM348 346h16v8h-16zM236 354h120v8h-120zM692 530h8v8h-8zM700 538h8v8h-8zM700 546h16v8h-16zM692 554h24v8h-24zM964 554h16v8h-16zM364 562h8v8h-8zM700 562h8v8h-8zM980 562h8v8h-8zM348 570h32v8h-32zM980 570h8v8h-8zM332 578h16v8h-16zM372 578h16v8h-16zM972 578h8v8h-8zM316 586h24v8h-24zM372 586h16v8h-16zM292 594h8v8h-8zM316 594h24v8h-24zM380 594h8v8h-8zM292 602h48v8h-48zM380 602h16v8h-16zM292 610h48v8h-48zM388 610h8v8h-8zM292 618h48v8h-48zM316 626h24v8h-24zM396 626h8v8h-8zM316 634h24v8h-24zM388 634h16v8h-16zM324 642h24v8h-24zM388 642h16v8h-16z"/><path fill="#481769" d="M1212 114h8v8h-8zM1204 122h16v8h-16zM1196 130h24v8h-24zM1196 138h24v8h-24zM1188 146h32v8h-32zM1188 154h32v8h-32zM1180 162h40v8h-40zM1188 170h32v8h-32zM1204 178h16v8h-16zM700 226h16v8h-16zM692 234h32v8h-32zM692 242h16v8h-16zM716 242h8v8h-8zM1140 242h24v8h-24zM692 250h24v8h-24zM1132 250h24v8h-24zM692 258h16v8h-16zM1124 258h16v8h-16zM380 274h24v8h-24zM340 282h32v8h-32zM396 282h24v8h-24zM316 290h24v8h-24zM412 290h16v8h-16zM300 298h16v8h-16zM420 298h16v8h-16zM284 306h16v8h-16zM420 306h24v8h-24zM268 314h16v8h-16zM412 314h32v8h-32zM148 322h8v8h-8zM236 322h32v8h-32zM396 322h48v8h-48zM212 330h40v8h-40zM380 330h32v8h-32zM196 338h40v8h-40zM372 338h24v8h-24zM188 346h48v8h-48zM364 346h24v8h-24zM180 354h56v8h-56zM356 354h16v8h-16zM172 362h192v8h-192zM180 370h96v8h-96zM196 378h56v8h-56zM692 522h8v8h-8zM700 530h40v8h-40zM692 538h8v8h-8zM708 538h24v8h-24zM692 546h8v8h-8zM716 546h16v8h-16zM364 554h16v8h-16zM684 554h8v8h-8zM716 554h8v8h-8zM956 554h8v8h-8zM980 554h8v8h-8zM276 562h16v8h-16zM348 562h16v8h-16zM372 562h16v8h-16zM684 562h16v8h-16zM708 562h8v8h-8zM964 562h8v8h-8zM268 570h32v8h-32zM332 570h16v8h-16zM380 570h16v8h-16zM964 570h8v8h-8zM268 578h64v8h-64zM388 578h8v8h-8zM660 578h8v8h-8zM964 578h8v8h-8zM252 586h64v8h-64zM388 586h8v8h-8zM956 586h16v8h-16zM252 594h40v8h-40zM300 594h16v8h-16zM388 594h16v8h-16zM660 594h8v8h-8zM956 594h8v8h-8zM244 602h48v8h-48zM396 602h8v8h-8zM652 602h24v8h-24zM244 610h48v8h-48zM396 610h8v8h-8zM644 610h24v8h-24zM252 618h40v8h-40zM396 618h8v8h-8zM636 618h32v8h-32zM252 626h64v8h-64zM628 626h40v8h-40zM260 634h56v8h-56zM404 634h8v8h-8zM628 634h32v8h-32zM268 642h56v8h-56zM404 642h8v8h-8zM628 642h40v8h-40z"/><path fill="#481a6c" d="M1172 90h48v8h-48zM1172 98h48v8h-48zM1172 106h48v8h-48zM1172 114h40v8h-40zM1172 122h32v8h-32zM1164 130h32v8h-32zM1164 138h32v8h-32zM1164 146h24v8h-24zM1164 154h24v8h-24zM1164 162h16v8h-16zM1164 170h24v8h-24zM1164 178h40v8h-40zM1172 186h48v8h-48zM708 210h16v8h-16zM700 218h24v8h-24zM692 226h8v8h-8zM716 226h8v8h-8zM684 234h8v8h-8zM1140 234h40v8h-40zM676 242h16v8h-16zM1132 242h8v8h-8zM1164 242h8v8h-8zM676 250h16v8h-16zM716 250h8v8h-8zM1124 250h8v8h-8zM1156 250h8v8h-8zM676 258h16v8h-16zM708 258h8v8h-8zM1140 258h16v8h-16zM684 266h24v8h-24zM1116 266h24v8h-24zM1148 266h8v8h-8zM348 274h32v8h-32zM404 274h16v8h-16zM692 274h16v8h-16zM1108 274h16v8h-16zM1148 274h8v8h-8zM316 282h24v8h-24zM420 282h16v8h-16zM300 290h16v8h-16zM428 290h16v8h-16zM284 298h16v8h-16zM436 298h16v8h-16zM148 306h8v8h-8zM268 306h16v8h-16zM444 306h16v8h-16zM148 314h24v8h-24zM244 314h24v8h-24zM444 314h16v8h-16zM156 322h80v8h-80zM444 322h16v8h-16zM148 330h64v8h-64zM412 330h48v8h-48zM148 338h48v8h-48zM396 338h48v8h-48zM148 346h40v8h-40zM388 346h16v8h-16zM148 354h32v8h-32zM372 354h24v8h-24zM148 362h24v8h-24zM364 362h32v8h-32zM148 370h32v8h-32zM276 370h24v8h-24zM348 370h48v8h-48zM148 378h48v8h-48zM252 378h24v8h-24zM172 386h88v8h-88zM220 394h8v8h-8zM732 514h24v8h-24zM700 522h56v8h-56zM684 530h8v8h-8zM740 530h16v8h-16zM684 538h8v8h-8zM732 538h16v8h-16zM364 546h24v8h-24zM684 546h8v8h-8zM732 546h16v8h-16zM964 546h16v8h-16zM260 554h40v8h-40zM348 554h16v8h-16zM380 554h16v8h-16zM724 554h16v8h-16zM948 554h8v8h-8zM244 562h32v8h-32zM292 562h16v8h-16zM340 562h8v8h-8zM388 562h8v8h-8zM676 562h8v8h-8zM716 562h8v8h-8zM956 562h8v8h-8zM244 570h24v8h-24zM300 570h32v8h-32zM396 570h8v8h-8zM652 570h64v8h-64zM236 578h32v8h-32zM396 578h8v8h-8zM652 578h8v8h-8zM668 578h16v8h-16zM956 578h8v8h-8zM980 578h8v8h-8zM228 586h24v8h-24zM396 586h8v8h-8zM652 586h32v8h-32zM972 586h8v8h-8zM228 594h24v8h-24zM404 594h8v8h-8zM644 594h16v8h-16zM668 594h16v8h-16zM948 594h8v8h-8zM964 594h8v8h-8zM228 602h16v8h-16zM404 602h8v8h-8zM636 602h16v8h-16zM676 602h8v8h-8zM948 602h16v8h-16zM228 610h16v8h-16zM404 610h8v8h-8zM628 610h16v8h-16zM668 610h16v8h-16zM940 610h16v8h-16zM220 618h32v8h-32zM404 618h8v8h-8zM628 618h8v8h-8zM668 618h8v8h-8zM932 618h16v8h-16zM220 626h32v8h-32zM404 626h8v8h-8zM620 626h8v8h-8zM668 626h8v8h-8zM932 626h8v8h-8zM220 634h40v8h-40zM620 634h8v8h-8zM660 634h16v8h-16zM220 642h48v8h-48zM620 642h8v8h-8zM668 642h8v8h-8z"/><path fill="#481d6f" d="M1156 90h16v8h-16zM1156 98h16v8h-16zM1148 106h24v8h-24zM1148 114h24v8h-24zM1148 122h24v8h-24zM1148 130h16v8h-16zM1148 138h16v8h-16zM1148 146h16v8h-16zM1148 154h16v8h-16zM1148 162h16v8h-16zM1148 170h16v8h-16zM1148 178h16v8h-16zM708 186h16v8h-16zM1148 186h24v8h-24zM700 194h24v8h-24zM1148 194h72v8h-72zM700 202h32v8h-32zM1140 202h48v8h-48zM692 210h16v8h-16zM724 210h8v8h-8zM1140 210h32v8h-32zM692 218h8v8h-8zM724 218h8v8h-8zM1132 218h40v8h-40zM684 226h8v8h-8zM724 226h8v8h-8zM1132 226h64v8h-64zM676 234h8v8h-8zM724 234h8v8h-8zM1132 234h8v8h-8zM1180 234h8v8h-8zM668 242h8v8h-8zM1124 242h8v8h-8zM1172 242h8v8h-8zM668 250h8v8h-8zM1164 250h16v8h-16zM660 258h16v8h-16zM716 258h8v8h-8zM1116 258h8v8h-8zM1156 258h24v8h-24zM356 266h64v8h-64zM660 266h24v8h-24zM708 266h16v8h-16zM1108 266h8v8h-8zM1140 266h8v8h-8zM1156 266h24v8h-24zM324 274h24v8h-24zM420 274h16v8h-16zM668 274h24v8h-24zM708 274h16v8h-16zM1100 274h8v8h-8zM1124 274h24v8h-24zM1156 274h24v8h-24zM308 282h8v8h-8zM436 282h16v8h-16zM676 282h48v8h-48zM1092 282h88v8h-88zM284 290h16v8h-16zM444 290h16v8h-16zM684 290h40v8h-40zM1124 290h56v8h-56zM276 298h8v8h-8zM452 298h16v8h-16zM692 298h16v8h-16zM1124 298h40v8h-40zM156 306h16v8h-16zM260 306h8v8h-8zM460 306h8v8h-8zM1116 306h32v8h-32zM172 314h32v8h-32zM212 314h32v8h-32zM460 314h16v8h-16zM1124 314h16v8h-16zM460 322h16v8h-16zM460 330h8v8h-8zM444 338h24v8h-24zM404 346h56v8h-56zM396 354h32v8h-32zM396 362h16v8h-16zM300 370h48v8h-48zM396 370h16v8h-16zM276 378h16v8h-16zM348 378h72v8h-72zM148 386h24v8h-24zM260 386h16v8h-16zM356 386h48v8h-48zM428 386h16v8h-16zM172 394h48v8h-48zM228 394h24v8h-24zM364 394h24v8h-24zM396 394h48v8h-48zM364 402h24v8h-24zM404 402h32v8h-32zM964 402h8v8h-8zM364 410h40v8h-40zM964 410h8v8h-8zM956 418h16v8h-16zM948 426h24v8h-24zM340 442h8v8h-8zM764 482h16v8h-16zM220 490h8v8h-8zM756 490h32v8h-32zM220 498h8v8h-8zM748 498h40v8h-40zM732 506h48v8h-48zM716 514h16v8h-16zM756 514h24v8h-24zM956 514h16v8h-16zM684 522h8v8h-8zM756 522h16v8h-16zM948 522h32v8h-32zM756 530h8v8h-8zM948 530h40v8h-40zM364 538h32v8h-32zM748 538h16v8h-16zM956 538h32v8h-32zM252 546h32v8h-32zM356 546h8v8h-8zM388 546h16v8h-16zM676 546h8v8h-8zM748 546h16v8h-16zM940 546h24v8h-24zM980 546h8v8h-8zM244 554h16v8h-16zM300 554h8v8h-8zM340 554h8v8h-8zM396 554h8v8h-8zM676 554h8v8h-8zM740 554h16v8h-16zM932 554h16v8h-16zM988 554h8v8h-8zM308 562h8v8h-8zM324 562h16v8h-16zM396 562h16v8h-16zM660 562h16v8h-16zM724 562h24v8h-24zM940 562h16v8h-16zM988 562h8v8h-8zM236 570h8v8h-8zM404 570h8v8h-8zM716 570h8v8h-8zM956 570h8v8h-8zM988 570h8v8h-8zM228 578h8v8h-8zM404 578h8v8h-8zM684 578h32v8h-32zM988 578h8v8h-8zM404 586h8v8h-8zM628 586h8v8h-8zM644 586h8v8h-8zM684 586h16v8h-16zM948 586h8v8h-8zM980 586h8v8h-8zM220 594h8v8h-8zM628 594h16v8h-16zM684 594h8v8h-8zM972 594h16v8h-16zM212 602h16v8h-16zM628 602h8v8h-8zM684 602h8v8h-8zM940 602h8v8h-8zM964 602h16v8h-16zM212 610h16v8h-16zM412 610h8v8h-8zM620 610h8v8h-8zM684 610h8v8h-8zM932 610h8v8h-8zM956 610h8v8h-8zM204 618h16v8h-16zM412 618h8v8h-8zM620 618h8v8h-8zM676 618h8v8h-8zM948 618h8v8h-8zM196 626h24v8h-24zM412 626h8v8h-8zM676 626h8v8h-8zM940 626h8v8h-8zM188 634h32v8h-32zM412 634h8v8h-8zM612 634h8v8h-8zM676 634h8v8h-8zM180 642h40v8h-40zM412 642h8v8h-8zM612 642h8v8h-8zM676 642h8v8h-8z"/><path fill="#482071" d="M716 90h8v8h-8zM1140 90h16v8h-16zM1140 98h16v8h-16zM1140 106h8v8h-8zM1140 114h8v8h-8zM1132 122h16v8h-16zM1132 130h16v8h-16zM1132 138h16v8h-16zM708 146h8v8h-8zM1140 146h8v8h-8zM700 154h24v8h-24zM1140 154h8v8h-8zM700 162h24v8h-24zM1140 162h8v8h-8zM700 170h32v8h-32zM1140 170h8v8h-8zM700 178h32v8h-32zM1140 178h8v8h-8zM692 186h16v8h-16zM724 186h8v8h-8zM1140 186h8v8h-8zM692 194h8v8h-8zM724 194h8v8h-8zM1132 194h16v8h-16zM692 202h8v8h-8zM1132 202h8v8h-8zM1188 202h32v8h-32zM684 210h8v8h-8zM1132 210h8v8h-8zM1172 210h24v8h-24zM684 218h8v8h-8zM1124 218h8v8h-8zM1172 218h24v8h-24zM676 226h8v8h-8zM1124 226h8v8h-8zM1196 226h8v8h-8zM668 234h8v8h-8zM1124 234h8v8h-8zM1188 234h8v8h-8zM660 242h8v8h-8zM724 242h8v8h-8zM1180 242h8v8h-8zM660 250h8v8h-8zM1116 250h8v8h-8zM1180 250h8v8h-8zM380 258h40v8h-40zM652 258h8v8h-8zM1180 258h8v8h-8zM332 266h24v8h-24zM420 266h16v8h-16zM652 266h8v8h-8zM724 266h8v8h-8zM1100 266h8v8h-8zM1180 266h16v8h-16zM316 274h8v8h-8zM436 274h16v8h-16zM660 274h8v8h-8zM724 274h8v8h-8zM1092 274h8v8h-8zM1180 274h16v8h-16zM292 282h16v8h-16zM452 282h8v8h-8zM660 282h16v8h-16zM1076 282h16v8h-16zM1180 282h16v8h-16zM276 290h8v8h-8zM460 290h8v8h-8zM676 290h8v8h-8zM1068 290h56v8h-56zM1180 290h16v8h-16zM148 298h16v8h-16zM268 298h8v8h-8zM468 298h8v8h-8zM676 298h16v8h-16zM708 298h16v8h-16zM1084 298h40v8h-40zM1164 298h24v8h-24zM172 306h8v8h-8zM244 306h16v8h-16zM468 306h8v8h-8zM684 306h24v8h-24zM1092 306h24v8h-24zM1148 306h24v8h-24zM204 314h8v8h-8zM476 314h8v8h-8zM1084 314h40v8h-40zM1140 314h16v8h-16zM476 322h8v8h-8zM1092 322h56v8h-56zM468 330h16v8h-16zM1092 330h40v8h-40zM468 338h8v8h-8zM1092 338h24v8h-24zM460 346h8v8h-8zM428 354h32v8h-32zM908 354h8v8h-8zM412 362h40v8h-40zM900 362h24v8h-24zM412 370h40v8h-40zM900 370h24v8h-24zM292 378h16v8h-16zM332 378h16v8h-16zM420 378h32v8h-32zM900 378h32v8h-32zM276 386h8v8h-8zM348 386h8v8h-8zM404 386h24v8h-24zM444 386h8v8h-8zM892 386h40v8h-40zM964 386h8v8h-8zM148 394h24v8h-24zM252 394h16v8h-16zM356 394h8v8h-8zM388 394h8v8h-8zM444 394h8v8h-8zM516 394h8v8h-8zM900 394h24v8h-24zM964 394h16v8h-16zM188 402h56v8h-56zM356 402h8v8h-8zM388 402h16v8h-16zM436 402h24v8h-24zM508 402h24v8h-24zM956 402h8v8h-8zM972 402h8v8h-8zM356 410h8v8h-8zM404 410h56v8h-56zM956 410h8v8h-8zM972 410h32v8h-32zM356 418h104v8h-104zM948 418h8v8h-8zM972 418h48v8h-48zM348 426h16v8h-16zM412 426h16v8h-16zM940 426h8v8h-8zM972 426h48v8h-48zM340 434h16v8h-16zM940 434h80v8h-80zM332 442h8v8h-8zM348 442h8v8h-8zM972 442h40v8h-40zM972 450h32v8h-32zM212 466h8v8h-8zM212 474h16v8h-16zM764 474h8v8h-8zM212 482h24v8h-24zM756 482h8v8h-8zM780 482h16v8h-16zM212 490h8v8h-8zM228 490h8v8h-8zM748 490h8v8h-8zM788 490h8v8h-8zM212 498h8v8h-8zM228 498h8v8h-8zM732 498h16v8h-16zM788 498h8v8h-8zM220 506h8v8h-8zM724 506h8v8h-8zM780 506h8v8h-8zM948 506h32v8h-32zM220 514h8v8h-8zM692 514h24v8h-24zM780 514h8v8h-8zM940 514h16v8h-16zM972 514h16v8h-16zM204 522h16v8h-16zM772 522h8v8h-8zM940 522h8v8h-8zM980 522h8v8h-8zM372 530h32v8h-32zM676 530h8v8h-8zM764 530h16v8h-16zM940 530h8v8h-8zM988 530h8v8h-8zM260 538h24v8h-24zM356 538h8v8h-8zM396 538h16v8h-16zM676 538h8v8h-8zM764 538h8v8h-8zM932 538h24v8h-24zM988 538h8v8h-8zM284 546h32v8h-32zM348 546h8v8h-8zM404 546h8v8h-8zM764 546h8v8h-8zM924 546h16v8h-16zM988 546h16v8h-16zM308 554h8v8h-8zM332 554h8v8h-8zM404 554h16v8h-16zM668 554h8v8h-8zM756 554h16v8h-16zM924 554h8v8h-8zM996 554h8v8h-8zM236 562h8v8h-8zM316 562h8v8h-8zM412 562h8v8h-8zM652 562h8v8h-8zM748 562h24v8h-24zM932 562h8v8h-8zM996 562h8v8h-8zM228 570h8v8h-8zM412 570h8v8h-8zM724 570h40v8h-40zM932 570h24v8h-24zM996 570h8v8h-8zM412 578h8v8h-8zM628 578h8v8h-8zM644 578h8v8h-8zM716 578h48v8h-48zM932 578h24v8h-24zM996 578h8v8h-8zM1204 578h16v8h-16zM220 586h8v8h-8zM412 586h8v8h-8zM620 586h8v8h-8zM636 586h8v8h-8zM700 586h24v8h-24zM748 586h8v8h-8zM932 586h16v8h-16zM988 586h16v8h-16zM1196 586h24v8h-24zM212 594h8v8h-8zM412 594h8v8h-8zM620 594h8v8h-8zM692 594h16v8h-16zM932 594h16v8h-16zM988 594h16v8h-16zM1188 594h32v8h-32zM196 602h16v8h-16zM412 602h8v8h-8zM620 602h8v8h-8zM692 602h8v8h-8zM932 602h8v8h-8zM980 602h24v8h-24zM1188 602h32v8h-32zM180 610h32v8h-32zM692 610h8v8h-8zM724 610h32v8h-32zM964 610h40v8h-40zM1180 610h40v8h-40zM172 618h32v8h-32zM612 618h8v8h-8zM684 618h72v8h-72zM924 618h8v8h-8zM956 618h40v8h-40zM1180 618h40v8h-40zM164 626h32v8h-32zM612 626h8v8h-8zM684 626h72v8h-72zM924 626h8v8h-8zM948 626h40v8h-40zM1172 626h48v8h-48zM156 634h32v8h-32zM684 634h72v8h-72zM932 634h48v8h-48zM1172 634h48v8h-48zM148 642h32v8h-32zM684 642h72v8h-72zM948 642h24v8h-24zM1172 642h48v8h-48z"/><path fill="#482374" d="M700 90h16v8h-16zM724 90h16v8h-16zM1036 90h64v8h-64zM1124 90h16v8h-16zM700 98h40v8h-40zM1036 98h64v8h-64zM1116 98h24v8h-24zM700 106h40v8h-40zM1044 106h96v8h-96zM692 114h40v8h-40zM1052 114h88v8h-88zM692 122h40v8h-40zM1076 122h56v8h-56zM692 130h40v8h-40zM1116 130h16v8h-16zM692 138h40v8h-40zM1116 138h16v8h-16zM692 146h16v8h-16zM716 146h16v8h-16zM1124 146h16v8h-16zM692 154h8v8h-8zM724 154h8v8h-8zM1124 154h16v8h-16zM692 162h8v8h-8zM724 162h8v8h-8zM1132 162h8v8h-8zM692 170h8v8h-8zM732 170h8v8h-8zM1132 170h8v8h-8zM692 178h8v8h-8zM732 178h8v8h-8zM1132 178h8v8h-8zM732 186h8v8h-8zM1132 186h8v8h-8zM684 194h8v8h-8zM732 194h8v8h-8zM1124 194h8v8h-8zM684 202h8v8h-8zM732 202h8v8h-8zM1124 202h8v8h-8zM732 210h8v8h-8zM1124 210h8v8h-8zM1196 210h24v8h-24zM676 218h8v8h-8zM732 218h8v8h-8zM1196 218h8v8h-8zM668 226h8v8h-8zM1116 226h8v8h-8zM660 234h8v8h-8zM732 234h8v8h-8zM1116 234h8v8h-8zM1196 234h8v8h-8zM652 242h8v8h-8zM1116 242h8v8h-8zM1188 242h8v8h-8zM652 250h8v8h-8zM724 250h8v8h-8zM1108 250h8v8h-8zM1188 250h8v8h-8zM356 258h24v8h-24zM420 258h16v8h-16zM724 258h8v8h-8zM1100 258h16v8h-16zM1188 258h16v8h-16zM324 266h8v8h-8zM436 266h16v8h-16zM1092 266h8v8h-8zM1196 266h8v8h-8zM300 274h16v8h-16zM452 274h16v8h-16zM652 274h8v8h-8zM1076 274h16v8h-16zM1196 274h8v8h-8zM284 282h8v8h-8zM460 282h16v8h-16zM724 282h8v8h-8zM1060 282h16v8h-16zM1196 282h16v8h-16zM268 290h8v8h-8zM468 290h16v8h-16zM660 290h16v8h-16zM724 290h8v8h-8zM1052 290h16v8h-16zM1196 290h24v8h-24zM164 298h8v8h-8zM260 298h8v8h-8zM476 298h8v8h-8zM668 298h8v8h-8zM724 298h8v8h-8zM1052 298h32v8h-32zM1188 298h32v8h-32zM180 306h16v8h-16zM228 306h16v8h-16zM476 306h16v8h-16zM676 306h8v8h-8zM708 306h16v8h-16zM1052 306h40v8h-40zM1172 306h48v8h-48zM484 314h8v8h-8zM684 314h24v8h-24zM1068 314h16v8h-16zM1156 314h64v8h-64zM484 322h8v8h-8zM1068 322h24v8h-24zM1148 322h16v8h-16zM1188 322h32v8h-32zM484 330h8v8h-8zM1068 330h24v8h-24zM1132 330h16v8h-16zM1188 330h32v8h-32zM476 338h8v8h-8zM916 338h8v8h-8zM1068 338h24v8h-24zM1116 338h24v8h-24zM1188 338h32v8h-32zM468 346h16v8h-16zM908 346h24v8h-24zM1076 346h48v8h-48zM1188 346h32v8h-32zM460 354h16v8h-16zM900 354h8v8h-8zM916 354h16v8h-16zM1084 354h16v8h-16zM1188 354h32v8h-32zM452 362h16v8h-16zM892 362h8v8h-8zM924 362h16v8h-16zM1188 362h32v8h-32zM452 370h8v8h-8zM892 370h8v8h-8zM924 370h16v8h-16zM1188 370h32v8h-32zM308 378h24v8h-24zM452 378h8v8h-8zM892 378h8v8h-8zM932 378h16v8h-16zM964 378h8v8h-8zM1188 378h32v8h-32zM284 386h8v8h-8zM340 386h8v8h-8zM452 386h8v8h-8zM516 386h16v8h-16zM884 386h8v8h-8zM932 386h32v8h-32zM972 386h8v8h-8zM1188 386h32v8h-32zM268 394h8v8h-8zM348 394h8v8h-8zM452 394h16v8h-16zM500 394h16v8h-16zM524 394h8v8h-8zM884 394h16v8h-16zM924 394h40v8h-40zM980 394h8v8h-8zM1188 394h32v8h-32zM148 402h40v8h-40zM244 402h16v8h-16zM348 402h8v8h-8zM460 402h48v8h-48zM892 402h64v8h-64zM980 402h40v8h-40zM1188 402h32v8h-32zM196 410h40v8h-40zM348 410h8v8h-8zM460 410h72v8h-72zM908 410h48v8h-48zM1004 410h24v8h-24zM1188 410h32v8h-32zM348 418h8v8h-8zM460 418h48v8h-48zM924 418h24v8h-24zM1020 418h8v8h-8zM1196 418h24v8h-24zM364 426h48v8h-48zM428 426h48v8h-48zM932 426h8v8h-8zM1020 426h8v8h-8zM1196 426h24v8h-24zM356 434h32v8h-32zM412 434h16v8h-16zM932 434h8v8h-8zM1020 434h8v8h-8zM1196 434h24v8h-24zM356 442h8v8h-8zM924 442h48v8h-48zM1012 442h8v8h-8zM1196 442h24v8h-24zM340 450h8v8h-8zM948 450h24v8h-24zM1004 450h16v8h-16zM1196 450h24v8h-24zM212 458h8v8h-8zM956 458h56v8h-56zM1196 458h24v8h-24zM204 466h8v8h-8zM220 466h8v8h-8zM964 466h40v8h-40zM1196 466h24v8h-24zM188 474h24v8h-24zM228 474h8v8h-8zM772 474h32v8h-32zM972 474h16v8h-16zM1196 474h24v8h-24zM180 482h32v8h-32zM236 482h8v8h-8zM796 482h16v8h-16zM1196 482h24v8h-24zM164 490h48v8h-48zM236 490h16v8h-16zM732 490h16v8h-16zM796 490h8v8h-8zM1196 490h24v8h-24zM172 498h40v8h-40zM236 498h24v8h-24zM724 498h8v8h-8zM796 498h8v8h-8zM956 498h16v8h-16zM1196 498h24v8h-24zM172 506h48v8h-48zM228 506h16v8h-16zM716 506h8v8h-8zM788 506h8v8h-8zM940 506h8v8h-8zM980 506h8v8h-8zM1188 506h32v8h-32zM172 514h48v8h-48zM228 514h8v8h-8zM388 514h16v8h-16zM684 514h8v8h-8zM788 514h8v8h-8zM932 514h8v8h-8zM1180 514h40v8h-40zM188 522h16v8h-16zM220 522h8v8h-8zM372 522h40v8h-40zM676 522h8v8h-8zM780 522h8v8h-8zM932 522h8v8h-8zM988 522h8v8h-8zM1164 522h56v8h-56zM204 530h8v8h-8zM260 530h16v8h-16zM356 530h16v8h-16zM404 530h16v8h-16zM780 530h8v8h-8zM932 530h8v8h-8zM996 530h8v8h-8zM1148 530h72v8h-72zM252 538h8v8h-8zM284 538h16v8h-16zM308 538h8v8h-8zM348 538h8v8h-8zM412 538h8v8h-8zM772 538h16v8h-16zM924 538h8v8h-8zM996 538h8v8h-8zM1140 538h80v8h-80zM244 546h8v8h-8zM316 546h8v8h-8zM340 546h8v8h-8zM412 546h16v8h-16zM668 546h8v8h-8zM772 546h8v8h-8zM916 546h8v8h-8zM1132 546h88v8h-88zM236 554h8v8h-8zM316 554h16v8h-16zM420 554h8v8h-8zM660 554h8v8h-8zM772 554h8v8h-8zM916 554h8v8h-8zM1004 554h8v8h-8zM1124 554h96v8h-96zM420 562h8v8h-8zM772 562h8v8h-8zM924 562h8v8h-8zM1004 562h8v8h-8zM1116 562h104v8h-104zM420 570h8v8h-8zM644 570h8v8h-8zM764 570h16v8h-16zM924 570h8v8h-8zM1004 570h8v8h-8zM1116 570h104v8h-104zM220 578h8v8h-8zM420 578h8v8h-8zM636 578h8v8h-8zM764 578h16v8h-16zM916 578h16v8h-16zM1004 578h8v8h-8zM1108 578h96v8h-96zM212 586h8v8h-8zM420 586h8v8h-8zM724 586h24v8h-24zM756 586h24v8h-24zM916 586h16v8h-16zM1004 586h8v8h-8zM1108 586h88v8h-88zM188 594h24v8h-24zM420 594h8v8h-8zM708 594h72v8h-72zM916 594h16v8h-16zM1004 594h8v8h-8zM1100 594h88v8h-88zM148 602h48v8h-48zM420 602h8v8h-8zM700 602h80v8h-80zM916 602h16v8h-16zM1004 602h8v8h-8zM1100 602h88v8h-88zM148 610h32v8h-32zM420 610h8v8h-8zM612 610h8v8h-8zM700 610h24v8h-24zM756 610h16v8h-16zM916 610h16v8h-16zM1004 610h8v8h-8zM1092 610h88v8h-88zM148 618h24v8h-24zM756 618h16v8h-16zM916 618h8v8h-8zM996 618h8v8h-8zM1092 618h88v8h-88zM148 626h16v8h-16zM756 626h16v8h-16zM916 626h8v8h-8zM988 626h16v8h-16zM1092 626h80v8h-80zM148 634h8v8h-8zM604 634h8v8h-8zM756 634h16v8h-16zM924 634h8v8h-8zM980 634h16v8h-16zM1084 634h88v8h-88zM604 642h8v8h-8zM756 642h16v8h-16zM924 642h24v8h-24zM972 642h16v8h-16zM1084 642h88v8h-88z"/><path fill="#482576" d="M684 90h16v8h-16zM740 90h8v8h-8zM1028 90h8v8h-8zM1100 90h24v8h-24zM684 98h16v8h-16zM740 98h8v8h-8zM1028 98h8v8h-8zM1100 98h16v8h-16zM684 106h16v8h-16zM740 106h8v8h-8zM1028 106h16v8h-16zM684 114h8v8h-8zM732 114h16v8h-16zM1036 114h16v8h-16zM684 122h8v8h-8zM732 122h8v8h-8zM1036 122h40v8h-40zM684 130h8v8h-8zM732 130h8v8h-8zM1060 130h56v8h-56zM684 138h8v8h-8zM732 138h8v8h-8zM1084 138h32v8h-32zM684 146h8v8h-8zM732 146h8v8h-8zM1108 146h16v8h-16zM684 154h8v8h-8zM732 154h8v8h-8zM1116 154h8v8h-8zM684 162h8v8h-8zM732 162h8v8h-8zM1116 162h16v8h-16zM684 170h8v8h-8zM1124 170h8v8h-8zM684 178h8v8h-8zM740 178h8v8h-8zM1124 178h8v8h-8zM684 186h8v8h-8zM740 186h8v8h-8zM1124 186h8v8h-8zM740 194h8v8h-8zM676 202h8v8h-8zM1116 202h8v8h-8zM676 210h8v8h-8zM1116 210h8v8h-8zM668 218h8v8h-8zM1116 218h8v8h-8zM1204 218h16v8h-16zM660 226h8v8h-8zM732 226h8v8h-8zM1204 226h8v8h-8zM652 234h8v8h-8zM1108 234h8v8h-8zM1204 234h8v8h-8zM732 242h8v8h-8zM1108 242h8v8h-8zM1196 242h8v8h-8zM380 250h64v8h-64zM644 250h8v8h-8zM1092 250h16v8h-16zM1196 250h16v8h-16zM332 258h24v8h-24zM436 258h24v8h-24zM644 258h8v8h-8zM732 258h8v8h-8zM1044 258h16v8h-16zM1068 258h32v8h-32zM1204 258h8v8h-8zM316 266h8v8h-8zM452 266h24v8h-24zM644 266h8v8h-8zM732 266h8v8h-8zM972 266h32v8h-32zM1028 266h64v8h-64zM1204 266h8v8h-8zM292 274h8v8h-8zM468 274h16v8h-16zM644 274h8v8h-8zM964 274h40v8h-40zM1036 274h40v8h-40zM1204 274h16v8h-16zM276 282h8v8h-8zM476 282h8v8h-8zM644 282h16v8h-16zM948 282h48v8h-48zM1036 282h24v8h-24zM1212 282h8v8h-8zM148 290h8v8h-8zM260 290h8v8h-8zM484 290h8v8h-8zM652 290h8v8h-8zM940 290h48v8h-48zM1044 290h8v8h-8zM172 298h8v8h-8zM252 298h8v8h-8zM484 298h16v8h-16zM660 298h8v8h-8zM932 298h48v8h-48zM1036 298h16v8h-16zM196 306h32v8h-32zM492 306h8v8h-8zM668 306h8v8h-8zM724 306h8v8h-8zM924 306h40v8h-40zM1036 306h16v8h-16zM492 314h8v8h-8zM668 314h16v8h-16zM708 314h8v8h-8zM924 314h32v8h-32zM1020 314h48v8h-48zM492 322h8v8h-8zM668 322h40v8h-40zM916 322h32v8h-32zM1012 322h16v8h-16zM1052 322h16v8h-16zM1164 322h24v8h-24zM492 330h8v8h-8zM676 330h8v8h-8zM916 330h24v8h-24zM1004 330h8v8h-8zM1052 330h16v8h-16zM1148 330h40v8h-40zM484 338h16v8h-16zM908 338h8v8h-8zM924 338h16v8h-16zM1052 338h16v8h-16zM1140 338h48v8h-48zM484 346h8v8h-8zM900 346h8v8h-8zM932 346h8v8h-8zM1060 346h16v8h-16zM1124 346h64v8h-64zM476 354h8v8h-8zM892 354h8v8h-8zM932 354h16v8h-16zM972 354h8v8h-8zM1060 354h24v8h-24zM1100 354h88v8h-88zM468 362h8v8h-8zM940 362h8v8h-8zM972 362h8v8h-8zM1060 362h128v8h-128zM460 370h16v8h-16zM516 370h16v8h-16zM884 370h8v8h-8zM940 370h16v8h-16zM964 370h16v8h-16zM1068 370h120v8h-120zM460 378h8v8h-8zM508 378h32v8h-32zM884 378h8v8h-8zM948 378h16v8h-16zM972 378h8v8h-8zM1116 378h72v8h-72zM292 386h16v8h-16zM324 386h16v8h-16zM460 386h16v8h-16zM492 386h24v8h-24zM532 386h8v8h-8zM980 386h8v8h-8zM1116 386h72v8h-72zM276 394h16v8h-16zM340 394h8v8h-8zM468 394h32v8h-32zM532 394h8v8h-8zM876 394h8v8h-8zM988 394h40v8h-40zM1116 394h72v8h-72zM260 402h16v8h-16zM340 402h8v8h-8zM532 402h8v8h-8zM876 402h16v8h-16zM1020 402h24v8h-24zM1116 402h72v8h-72zM172 410h24v8h-24zM236 410h16v8h-16zM876 410h32v8h-32zM1028 410h16v8h-16zM1108 410h80v8h-80zM204 418h24v8h-24zM508 418h16v8h-16zM900 418h24v8h-24zM1028 418h16v8h-16zM1108 418h88v8h-88zM340 426h8v8h-8zM476 426h32v8h-32zM916 426h16v8h-16zM1028 426h16v8h-16zM1108 426h88v8h-88zM332 434h8v8h-8zM388 434h24v8h-24zM428 434h8v8h-8zM444 434h40v8h-40zM924 434h8v8h-8zM1028 434h8v8h-8zM1100 434h96v8h-96zM364 442h24v8h-24zM420 442h8v8h-8zM916 442h8v8h-8zM1020 442h16v8h-16zM1100 442h96v8h-96zM212 450h32v8h-32zM348 450h8v8h-8zM820 450h16v8h-16zM924 450h24v8h-24zM1020 450h8v8h-8zM1092 450h104v8h-104zM204 458h8v8h-8zM220 458h24v8h-24zM812 458h24v8h-24zM940 458h16v8h-16zM1012 458h8v8h-8zM1092 458h104v8h-104zM188 466h16v8h-16zM228 466h16v8h-16zM796 466h32v8h-32zM948 466h16v8h-16zM1004 466h8v8h-8zM1092 466h104v8h-104zM172 474h16v8h-16zM236 474h16v8h-16zM756 474h8v8h-8zM804 474h24v8h-24zM956 474h16v8h-16zM988 474h16v8h-16zM1092 474h104v8h-104zM148 482h32v8h-32zM244 482h16v8h-16zM380 482h24v8h-24zM748 482h8v8h-8zM812 482h8v8h-8zM964 482h24v8h-24zM1084 482h112v8h-112zM148 490h16v8h-16zM252 490h16v8h-16zM372 490h24v8h-24zM724 490h8v8h-8zM804 490h8v8h-8zM956 490h24v8h-24zM1084 490h112v8h-112zM148 498h24v8h-24zM260 498h8v8h-8zM804 498h8v8h-8zM948 498h8v8h-8zM972 498h16v8h-16zM1084 498h112v8h-112zM148 506h24v8h-24zM244 506h24v8h-24zM380 506h32v8h-32zM700 506h16v8h-16zM796 506h8v8h-8zM1084 506h104v8h-104zM148 514h24v8h-24zM236 514h32v8h-32zM372 514h16v8h-16zM404 514h24v8h-24zM796 514h8v8h-8zM988 514h8v8h-8zM1076 514h104v8h-104zM148 522h40v8h-40zM228 522h48v8h-48zM356 522h16v8h-16zM412 522h16v8h-16zM788 522h8v8h-8zM924 522h8v8h-8zM996 522h8v8h-8zM1076 522h88v8h-88zM196 530h8v8h-8zM212 530h16v8h-16zM244 530h16v8h-16zM276 530h16v8h-16zM348 530h8v8h-8zM420 530h8v8h-8zM788 530h8v8h-8zM924 530h8v8h-8zM1076 530h72v8h-72zM244 538h8v8h-8zM300 538h8v8h-8zM316 538h8v8h-8zM340 538h8v8h-8zM420 538h16v8h-16zM668 538h8v8h-8zM916 538h8v8h-8zM1004 538h8v8h-8zM1068 538h72v8h-72zM324 546h16v8h-16zM428 546h8v8h-8zM780 546h8v8h-8zM908 546h8v8h-8zM1004 546h8v8h-8zM1068 546h64v8h-64zM428 554h8v8h-8zM780 554h8v8h-8zM908 554h8v8h-8zM1012 554h8v8h-8zM1060 554h64v8h-64zM228 562h8v8h-8zM428 562h8v8h-8zM780 562h8v8h-8zM916 562h8v8h-8zM1012 562h8v8h-8zM1060 562h56v8h-56zM220 570h8v8h-8zM428 570h8v8h-8zM780 570h8v8h-8zM908 570h16v8h-16zM1012 570h8v8h-8zM1060 570h56v8h-56zM212 578h8v8h-8zM428 578h8v8h-8zM620 578h8v8h-8zM780 578h8v8h-8zM908 578h8v8h-8zM1012 578h8v8h-8zM1052 578h56v8h-56zM148 586h16v8h-16zM196 586h16v8h-16zM428 586h8v8h-8zM780 586h8v8h-8zM908 586h8v8h-8zM1012 586h8v8h-8zM1052 586h56v8h-56zM148 594h40v8h-40zM428 594h8v8h-8zM780 594h8v8h-8zM908 594h8v8h-8zM1012 594h8v8h-8zM1044 594h56v8h-56zM612 602h8v8h-8zM780 602h8v8h-8zM908 602h8v8h-8zM1012 602h8v8h-8zM1044 602h56v8h-56zM772 610h16v8h-16zM908 610h8v8h-8zM1012 610h8v8h-8zM1036 610h56v8h-56zM420 618h8v8h-8zM772 618h16v8h-16zM908 618h8v8h-8zM1004 618h16v8h-16zM1036 618h56v8h-56zM420 626h8v8h-8zM604 626h8v8h-8zM772 626h8v8h-8zM908 626h8v8h-8zM1004 626h8v8h-8zM1036 626h56v8h-56zM420 634h8v8h-8zM772 634h8v8h-8zM908 634h16v8h-16zM996 634h16v8h-16zM1028 634h56v8h-56zM420 642h8v8h-8zM772 642h8v8h-8zM908 642h16v8h-16zM988 642h16v8h-16zM1028 642h56v8h-56z"/><path fill="#482878" d="M676 90h8v8h-8zM748 90h8v8h-8zM1020 90h8v8h-8zM676 98h8v8h-8zM748 98h8v8h-8zM1020 98h8v8h-8zM668 106h16v8h-16zM748 106h8v8h-8zM1020 106h8v8h-8zM660 114h24v8h-24zM748 114h8v8h-8zM1020 114h16v8h-16zM652 122h32v8h-32zM740 122h8v8h-8zM1028 122h8v8h-8zM644 130h40v8h-40zM740 130h8v8h-8zM1036 130h24v8h-24zM652 138h32v8h-32zM740 138h8v8h-8zM1052 138h32v8h-32zM668 146h16v8h-16zM740 146h8v8h-8zM1084 146h24v8h-24zM668 154h16v8h-16zM740 154h8v8h-8zM1100 154h16v8h-16zM676 162h8v8h-8zM740 162h8v8h-8zM1108 162h8v8h-8zM676 170h8v8h-8zM740 170h8v8h-8zM1116 170h8v8h-8zM676 178h8v8h-8zM1116 178h8v8h-8zM676 186h8v8h-8zM1116 186h8v8h-8zM676 194h8v8h-8zM1116 194h8v8h-8zM740 202h8v8h-8zM580 210h8v8h-8zM668 210h8v8h-8zM740 210h8v8h-8zM1108 210h8v8h-8zM660 218h8v8h-8zM1108 218h8v8h-8zM652 226h8v8h-8zM1108 226h8v8h-8zM1212 226h8v8h-8zM644 234h8v8h-8zM1100 234h8v8h-8zM1212 234h8v8h-8zM404 242h48v8h-48zM644 242h8v8h-8zM1092 242h16v8h-16zM1204 242h16v8h-16zM356 250h24v8h-24zM444 250h24v8h-24zM732 250h8v8h-8zM988 250h104v8h-104zM1212 250h8v8h-8zM324 258h8v8h-8zM460 258h24v8h-24zM972 258h72v8h-72zM1060 258h8v8h-8zM1212 258h8v8h-8zM300 266h16v8h-16zM476 266h16v8h-16zM964 266h8v8h-8zM1004 266h24v8h-24zM1212 266h8v8h-8zM284 274h8v8h-8zM484 274h16v8h-16zM732 274h8v8h-8zM948 274h16v8h-16zM1004 274h32v8h-32zM268 282h8v8h-8zM484 282h16v8h-16zM940 282h8v8h-8zM996 282h40v8h-40zM156 290h8v8h-8zM492 290h16v8h-16zM644 290h8v8h-8zM732 290h8v8h-8zM932 290h8v8h-8zM988 290h56v8h-56zM180 298h8v8h-8zM244 298h8v8h-8zM500 298h16v8h-16zM652 298h8v8h-8zM924 298h8v8h-8zM980 298h32v8h-32zM1020 298h16v8h-16zM500 306h16v8h-16zM652 306h16v8h-16zM916 306h8v8h-8zM964 306h40v8h-40zM1020 306h16v8h-16zM500 314h24v8h-24zM660 314h8v8h-8zM716 314h8v8h-8zM916 314h8v8h-8zM956 314h32v8h-32zM1004 314h16v8h-16zM500 322h24v8h-24zM660 322h8v8h-8zM708 322h8v8h-8zM908 322h8v8h-8zM948 322h16v8h-16zM996 322h16v8h-16zM1028 322h24v8h-24zM500 330h24v8h-24zM660 330h16v8h-16zM684 330h16v8h-16zM908 330h8v8h-8zM940 330h16v8h-16zM988 330h16v8h-16zM1012 330h40v8h-40zM500 338h24v8h-24zM660 338h32v8h-32zM900 338h8v8h-8zM940 338h16v8h-16zM980 338h32v8h-32zM1028 338h24v8h-24zM492 346h40v8h-40zM892 346h8v8h-8zM940 346h16v8h-16zM972 346h24v8h-24zM1028 346h32v8h-32zM484 354h56v8h-56zM948 354h8v8h-8zM964 354h8v8h-8zM980 354h8v8h-8zM1028 354h32v8h-32zM476 362h72v8h-72zM884 362h8v8h-8zM948 362h24v8h-24zM1028 362h32v8h-32zM476 370h40v8h-40zM532 370h16v8h-16zM956 370h8v8h-8zM1028 370h40v8h-40zM468 378h40v8h-40zM540 378h8v8h-8zM876 378h8v8h-8zM980 378h8v8h-8zM1028 378h88v8h-88zM308 386h16v8h-16zM476 386h16v8h-16zM540 386h8v8h-8zM876 386h8v8h-8zM988 386h128v8h-128zM292 394h8v8h-8zM324 394h16v8h-16zM540 394h8v8h-8zM868 394h8v8h-8zM1028 394h88v8h-88zM276 402h8v8h-8zM332 402h8v8h-8zM540 402h8v8h-8zM868 402h8v8h-8zM1044 402h72v8h-72zM148 410h24v8h-24zM252 410h16v8h-16zM340 410h8v8h-8zM532 410h8v8h-8zM860 410h16v8h-16zM1044 410h64v8h-64zM188 418h16v8h-16zM228 418h16v8h-16zM340 418h8v8h-8zM524 418h8v8h-8zM860 418h40v8h-40zM1044 418h64v8h-64zM204 426h32v8h-32zM508 426h16v8h-16zM844 426h16v8h-16zM900 426h16v8h-16zM1044 426h64v8h-64zM212 434h16v8h-16zM436 434h8v8h-8zM484 434h24v8h-24zM828 434h24v8h-24zM908 434h16v8h-16zM1036 434h64v8h-64zM204 442h32v8h-32zM252 442h8v8h-8zM388 442h32v8h-32zM452 442h32v8h-32zM820 442h32v8h-32zM1036 442h64v8h-64zM204 450h8v8h-8zM244 450h8v8h-8zM332 450h8v8h-8zM356 450h32v8h-32zM420 450h8v8h-8zM812 450h8v8h-8zM836 450h8v8h-8zM908 450h16v8h-16zM1028 450h64v8h-64zM188 458h16v8h-16zM244 458h8v8h-8zM804 458h8v8h-8zM836 458h8v8h-8zM932 458h8v8h-8zM1020 458h72v8h-72zM180 466h8v8h-8zM244 466h8v8h-8zM772 466h24v8h-24zM828 466h8v8h-8zM940 466h8v8h-8zM1012 466h80v8h-80zM148 474h24v8h-24zM252 474h8v8h-8zM388 474h24v8h-24zM828 474h8v8h-8zM948 474h8v8h-8zM1004 474h88v8h-88zM260 482h8v8h-8zM372 482h8v8h-8zM740 482h8v8h-8zM820 482h8v8h-8zM948 482h16v8h-16zM988 482h96v8h-96zM364 490h8v8h-8zM396 490h8v8h-8zM812 490h8v8h-8zM948 490h8v8h-8zM980 490h24v8h-24zM1020 490h64v8h-64zM268 498h8v8h-8zM356 498h56v8h-56zM716 498h8v8h-8zM940 498h8v8h-8zM988 498h8v8h-8zM1020 498h64v8h-64zM268 506h8v8h-8zM364 506h16v8h-16zM412 506h24v8h-24zM692 506h8v8h-8zM804 506h8v8h-8zM932 506h8v8h-8zM988 506h16v8h-16zM1028 506h56v8h-56zM268 514h8v8h-8zM356 514h16v8h-16zM428 514h8v8h-8zM676 514h8v8h-8zM924 514h8v8h-8zM996 514h16v8h-16zM1020 514h56v8h-56zM276 522h16v8h-16zM324 522h8v8h-8zM348 522h8v8h-8zM428 522h8v8h-8zM668 522h8v8h-8zM796 522h8v8h-8zM916 522h8v8h-8zM1004 522h72v8h-72zM148 530h48v8h-48zM228 530h16v8h-16zM292 530h40v8h-40zM340 530h8v8h-8zM428 530h16v8h-16zM668 530h8v8h-8zM796 530h8v8h-8zM916 530h8v8h-8zM1004 530h72v8h-72zM148 538h96v8h-96zM324 538h16v8h-16zM436 538h8v8h-8zM788 538h8v8h-8zM900 538h16v8h-16zM1012 538h56v8h-56zM148 546h24v8h-24zM228 546h16v8h-16zM436 546h8v8h-8zM660 546h8v8h-8zM788 546h8v8h-8zM1012 546h56v8h-56zM148 554h8v8h-8zM228 554h8v8h-8zM436 554h8v8h-8zM652 554h8v8h-8zM788 554h8v8h-8zM1020 554h40v8h-40zM220 562h8v8h-8zM436 562h8v8h-8zM644 562h8v8h-8zM788 562h8v8h-8zM908 562h8v8h-8zM1020 562h40v8h-40zM148 570h8v8h-8zM212 570h8v8h-8zM436 570h8v8h-8zM636 570h8v8h-8zM788 570h8v8h-8zM900 570h8v8h-8zM1020 570h40v8h-40zM148 578h64v8h-64zM436 578h8v8h-8zM788 578h8v8h-8zM900 578h8v8h-8zM1020 578h32v8h-32zM164 586h32v8h-32zM436 586h8v8h-8zM788 586h8v8h-8zM900 586h8v8h-8zM1020 586h32v8h-32zM612 594h8v8h-8zM788 594h8v8h-8zM900 594h8v8h-8zM1020 594h24v8h-24zM428 602h8v8h-8zM788 602h8v8h-8zM900 602h8v8h-8zM1020 602h24v8h-24zM428 610h8v8h-8zM788 610h8v8h-8zM900 610h8v8h-8zM1020 610h16v8h-16zM604 618h8v8h-8zM788 618h8v8h-8zM900 618h8v8h-8zM1020 618h16v8h-16zM780 626h16v8h-16zM900 626h8v8h-8zM1012 626h24v8h-24zM780 634h16v8h-16zM892 634h16v8h-16zM1012 634h16v8h-16zM780 642h16v8h-16zM892 642h16v8h-16zM1004 642h24v8h-24z"/><path fill="#472c7a" d="M660 90h16v8h-16zM1004 90h16v8h-16zM652 98h24v8h-24zM1004 98h16v8h-16zM644 106h24v8h-24zM1012 106h8v8h-8zM636 114h24v8h-24zM1012 114h8v8h-8zM628 122h24v8h-24zM748 122h8v8h-8zM1012 122h16v8h-16zM628 130h16v8h-16zM748 130h8v8h-8zM1020 130h16v8h-16zM628 138h24v8h-24zM748 138h8v8h-8zM1028 138h24v8h-24zM628 146h40v8h-40zM748 146h8v8h-8zM1052 146h32v8h-32zM644 154h24v8h-24zM748 154h8v8h-8zM1084 154h16v8h-16zM660 162h16v8h-16zM748 162h8v8h-8zM1100 162h8v8h-8zM668 170h8v8h-8zM748 170h8v8h-8zM1108 170h8v8h-8zM668 178h8v8h-8zM748 178h8v8h-8zM1108 178h8v8h-8zM668 186h8v8h-8zM748 186h8v8h-8zM1108 186h8v8h-8zM668 194h8v8h-8zM748 194h8v8h-8zM1108 194h8v8h-8zM572 202h24v8h-24zM668 202h8v8h-8zM1108 202h8v8h-8zM572 210h8v8h-8zM588 210h8v8h-8zM660 210h8v8h-8zM580 218h16v8h-16zM652 218h8v8h-8zM740 218h8v8h-8zM1100 218h8v8h-8zM644 226h8v8h-8zM740 226h8v8h-8zM1100 226h8v8h-8zM420 234h48v8h-48zM740 234h8v8h-8zM1084 234h16v8h-16zM372 242h32v8h-32zM452 242h32v8h-32zM740 242h8v8h-8zM996 242h96v8h-96zM340 250h16v8h-16zM468 250h24v8h-24zM636 250h8v8h-8zM740 250h8v8h-8zM972 250h16v8h-16zM316 258h8v8h-8zM484 258h24v8h-24zM636 258h8v8h-8zM740 258h8v8h-8zM964 258h8v8h-8zM292 266h8v8h-8zM492 266h24v8h-24zM636 266h8v8h-8zM740 266h8v8h-8zM948 266h16v8h-16zM276 274h8v8h-8zM500 274h16v8h-16zM636 274h8v8h-8zM940 274h8v8h-8zM260 282h8v8h-8zM500 282h24v8h-24zM636 282h8v8h-8zM732 282h8v8h-8zM924 282h16v8h-16zM164 290h8v8h-8zM252 290h8v8h-8zM508 290h16v8h-16zM636 290h8v8h-8zM924 290h8v8h-8zM188 298h16v8h-16zM228 298h16v8h-16zM516 298h16v8h-16zM644 298h8v8h-8zM732 298h8v8h-8zM916 298h8v8h-8zM1012 298h8v8h-8zM516 306h16v8h-16zM644 306h8v8h-8zM1004 306h16v8h-16zM524 314h16v8h-16zM644 314h16v8h-16zM724 314h8v8h-8zM908 314h8v8h-8zM988 314h16v8h-16zM524 322h16v8h-16zM644 322h16v8h-16zM964 322h32v8h-32zM524 330h16v8h-16zM644 330h16v8h-16zM700 330h8v8h-8zM900 330h8v8h-8zM956 330h32v8h-32zM524 338h16v8h-16zM644 338h16v8h-16zM692 338h8v8h-8zM892 338h8v8h-8zM956 338h24v8h-24zM1012 338h16v8h-16zM532 346h16v8h-16zM644 346h48v8h-48zM956 346h16v8h-16zM996 346h32v8h-32zM540 354h8v8h-8zM652 354h16v8h-16zM884 354h8v8h-8zM956 354h8v8h-8zM988 354h40v8h-40zM548 362h8v8h-8zM980 362h8v8h-8zM1004 362h24v8h-24zM548 370h8v8h-8zM876 370h8v8h-8zM980 370h48v8h-48zM548 378h8v8h-8zM988 378h40v8h-40zM548 386h8v8h-8zM868 386h8v8h-8zM300 394h24v8h-24zM548 394h8v8h-8zM860 394h8v8h-8zM284 402h16v8h-16zM308 402h24v8h-24zM860 402h8v8h-8zM268 410h8v8h-8zM324 410h16v8h-16zM540 410h8v8h-8zM852 410h8v8h-8zM148 418h40v8h-40zM244 418h16v8h-16zM332 418h8v8h-8zM532 418h8v8h-8zM836 418h24v8h-24zM188 426h16v8h-16zM236 426h16v8h-16zM324 426h16v8h-16zM524 426h8v8h-8zM828 426h16v8h-16zM860 426h40v8h-40zM196 434h16v8h-16zM228 434h32v8h-32zM324 434h8v8h-8zM508 434h16v8h-16zM820 434h8v8h-8zM852 434h16v8h-16zM900 434h8v8h-8zM196 442h8v8h-8zM236 442h16v8h-16zM260 442h24v8h-24zM324 442h8v8h-8zM428 442h24v8h-24zM484 442h24v8h-24zM812 442h8v8h-8zM852 442h8v8h-8zM908 442h8v8h-8zM188 450h16v8h-16zM252 450h8v8h-8zM268 450h8v8h-8zM388 450h16v8h-16zM412 450h8v8h-8zM452 450h32v8h-32zM804 450h8v8h-8zM844 450h8v8h-8zM180 458h8v8h-8zM372 458h8v8h-8zM412 458h16v8h-16zM460 458h8v8h-8zM788 458h16v8h-16zM844 458h8v8h-8zM908 458h24v8h-24zM164 466h16v8h-16zM252 466h8v8h-8zM404 466h16v8h-16zM452 466h16v8h-16zM764 466h8v8h-8zM836 466h8v8h-8zM932 466h8v8h-8zM260 474h8v8h-8zM380 474h8v8h-8zM412 474h8v8h-8zM748 474h8v8h-8zM940 474h8v8h-8zM268 482h8v8h-8zM364 482h8v8h-8zM404 482h8v8h-8zM732 482h8v8h-8zM828 482h8v8h-8zM940 482h8v8h-8zM268 490h8v8h-8zM356 490h8v8h-8zM404 490h16v8h-16zM820 490h8v8h-8zM940 490h8v8h-8zM1004 490h16v8h-16zM348 498h8v8h-8zM412 498h16v8h-16zM708 498h8v8h-8zM812 498h8v8h-8zM996 498h24v8h-24zM276 506h8v8h-8zM332 506h32v8h-32zM684 506h8v8h-8zM812 506h8v8h-8zM924 506h8v8h-8zM1004 506h24v8h-24zM276 514h16v8h-16zM324 514h32v8h-32zM436 514h8v8h-8zM804 514h8v8h-8zM1012 514h8v8h-8zM292 522h32v8h-32zM332 522h16v8h-16zM436 522h8v8h-8zM636 522h8v8h-8zM804 522h8v8h-8zM332 530h8v8h-8zM444 530h8v8h-8zM636 530h8v8h-8zM660 530h8v8h-8zM900 530h16v8h-16zM444 538h8v8h-8zM660 538h8v8h-8zM796 538h8v8h-8zM172 546h56v8h-56zM444 546h8v8h-8zM796 546h8v8h-8zM900 546h8v8h-8zM156 554h72v8h-72zM444 554h8v8h-8zM796 554h8v8h-8zM900 554h8v8h-8zM148 562h72v8h-72zM444 562h8v8h-8zM796 562h8v8h-8zM900 562h8v8h-8zM156 570h56v8h-56zM444 570h8v8h-8zM628 570h8v8h-8zM796 570h8v8h-8zM444 578h8v8h-8zM796 578h8v8h-8zM892 578h8v8h-8zM612 586h8v8h-8zM796 586h8v8h-8zM892 586h8v8h-8zM436 594h8v8h-8zM796 594h8v8h-8zM892 594h8v8h-8zM436 602h8v8h-8zM796 602h8v8h-8zM892 602h8v8h-8zM604 610h8v8h-8zM796 610h8v8h-8zM892 610h8v8h-8zM428 618h8v8h-8zM796 618h8v8h-8zM884 618h16v8h-16zM428 626h8v8h-8zM796 626h16v8h-16zM884 626h16v8h-16zM596 634h8v8h-8zM796 634h16v8h-16zM884 634h8v8h-8zM596 642h8v8h-8zM796 642h16v8h-16zM884 642h8v8h-8z"/><path fill="#472e7c" d="M636 90h24v8h-24zM756 90h8v8h-8zM980 90h24v8h-24zM628 98h24v8h-24zM756 98h8v8h-8zM980 98h24v8h-24zM620 106h24v8h-24zM756 106h8v8h-8zM988 106h24v8h-24zM620 114h16v8h-16zM756 114h8v8h-8zM996 114h16v8h-16zM612 122h16v8h-16zM756 122h8v8h-8zM996 122h16v8h-16zM612 130h16v8h-16zM756 130h8v8h-8zM1004 130h16v8h-16zM612 138h16v8h-16zM756 138h8v8h-8zM1012 138h16v8h-16zM604 146h24v8h-24zM756 146h8v8h-8zM1020 146h32v8h-32zM596 154h48v8h-48zM756 154h8v8h-8zM1044 154h40v8h-40zM588 162h72v8h-72zM756 162h8v8h-8zM1084 162h16v8h-16zM572 170h48v8h-48zM644 170h24v8h-24zM756 170h8v8h-8zM1100 170h8v8h-8zM564 178h48v8h-48zM660 178h8v8h-8zM756 178h8v8h-8zM1100 178h8v8h-8zM564 186h40v8h-40zM660 186h8v8h-8zM756 186h8v8h-8zM1100 186h8v8h-8zM564 194h40v8h-40zM660 194h8v8h-8zM1100 194h8v8h-8zM452 202h16v8h-16zM564 202h8v8h-8zM596 202h8v8h-8zM652 202h16v8h-16zM748 202h8v8h-8zM1100 202h8v8h-8zM444 210h32v8h-32zM564 210h8v8h-8zM596 210h8v8h-8zM652 210h8v8h-8zM748 210h8v8h-8zM1100 210h8v8h-8zM436 218h48v8h-48zM572 218h8v8h-8zM596 218h16v8h-16zM644 218h8v8h-8zM1092 218h8v8h-8zM420 226h80v8h-80zM580 226h24v8h-24zM636 226h8v8h-8zM1084 226h16v8h-16zM388 234h32v8h-32zM468 234h48v8h-48zM636 234h8v8h-8zM996 234h88v8h-88zM348 242h24v8h-24zM484 242h56v8h-56zM636 242h8v8h-8zM972 242h24v8h-24zM324 250h16v8h-16zM492 250h48v8h-48zM748 250h8v8h-8zM964 250h8v8h-8zM300 258h16v8h-16zM508 258h32v8h-32zM748 258h8v8h-8zM948 258h16v8h-16zM284 266h8v8h-8zM516 266h24v8h-24zM940 266h8v8h-8zM268 274h8v8h-8zM516 274h24v8h-24zM924 274h16v8h-16zM252 282h8v8h-8zM524 282h16v8h-16zM916 282h8v8h-8zM172 290h8v8h-8zM244 290h8v8h-8zM524 290h24v8h-24zM916 290h8v8h-8zM204 298h24v8h-24zM532 298h16v8h-16zM636 298h8v8h-8zM908 298h8v8h-8zM532 306h16v8h-16zM636 306h8v8h-8zM732 306h8v8h-8zM908 306h8v8h-8zM540 314h8v8h-8zM636 314h8v8h-8zM540 322h8v8h-8zM636 322h8v8h-8zM900 322h8v8h-8zM540 330h8v8h-8zM636 330h8v8h-8zM892 330h8v8h-8zM540 338h16v8h-16zM636 338h8v8h-8zM548 346h8v8h-8zM636 346h8v8h-8zM884 346h8v8h-8zM548 354h8v8h-8zM636 354h16v8h-16zM668 354h8v8h-8zM876 354h8v8h-8zM556 362h8v8h-8zM876 362h8v8h-8zM988 362h16v8h-16zM556 370h8v8h-8zM868 370h8v8h-8zM556 378h8v8h-8zM868 378h8v8h-8zM556 386h8v8h-8zM860 386h8v8h-8zM556 394h8v8h-8zM852 394h8v8h-8zM300 402h8v8h-8zM548 402h8v8h-8zM844 402h16v8h-16zM276 410h48v8h-48zM548 410h8v8h-8zM836 410h16v8h-16zM260 418h16v8h-16zM292 418h16v8h-16zM324 418h8v8h-8zM540 418h8v8h-8zM828 418h8v8h-8zM180 426h8v8h-8zM252 426h16v8h-16zM532 426h8v8h-8zM820 426h8v8h-8zM188 434h8v8h-8zM260 434h8v8h-8zM284 434h16v8h-16zM524 434h8v8h-8zM812 434h8v8h-8zM868 434h32v8h-32zM188 442h8v8h-8zM284 442h8v8h-8zM508 442h8v8h-8zM804 442h8v8h-8zM860 442h8v8h-8zM900 442h8v8h-8zM180 450h8v8h-8zM260 450h8v8h-8zM276 450h8v8h-8zM324 450h8v8h-8zM404 450h8v8h-8zM428 450h8v8h-8zM444 450h8v8h-8zM484 450h24v8h-24zM796 450h8v8h-8zM852 450h8v8h-8zM900 450h8v8h-8zM172 458h8v8h-8zM252 458h8v8h-8zM340 458h32v8h-32zM380 458h32v8h-32zM452 458h8v8h-8zM468 458h16v8h-16zM780 458h8v8h-8zM900 458h8v8h-8zM148 466h16v8h-16zM260 466h8v8h-8zM364 466h40v8h-40zM420 466h8v8h-8zM468 466h8v8h-8zM756 466h8v8h-8zM844 466h8v8h-8zM924 466h8v8h-8zM268 474h8v8h-8zM364 474h16v8h-16zM452 474h16v8h-16zM836 474h8v8h-8zM932 474h8v8h-8zM412 482h8v8h-8zM724 482h8v8h-8zM276 490h8v8h-8zM348 490h8v8h-8zM420 490h8v8h-8zM716 490h8v8h-8zM828 490h8v8h-8zM276 498h8v8h-8zM340 498h8v8h-8zM428 498h8v8h-8zM700 498h8v8h-8zM820 498h8v8h-8zM932 498h8v8h-8zM284 506h8v8h-8zM324 506h8v8h-8zM436 506h8v8h-8zM676 506h8v8h-8zM820 506h8v8h-8zM292 514h32v8h-32zM444 514h8v8h-8zM668 514h8v8h-8zM812 514h8v8h-8zM916 514h8v8h-8zM444 522h8v8h-8zM628 522h8v8h-8zM660 522h8v8h-8zM812 522h8v8h-8zM908 522h8v8h-8zM452 530h8v8h-8zM628 530h8v8h-8zM644 530h16v8h-16zM804 530h16v8h-16zM892 530h8v8h-8zM452 538h8v8h-8zM628 538h16v8h-16zM652 538h8v8h-8zM804 538h8v8h-8zM892 538h8v8h-8zM452 546h8v8h-8zM652 546h8v8h-8zM804 546h8v8h-8zM892 546h8v8h-8zM452 554h8v8h-8zM644 554h8v8h-8zM804 554h8v8h-8zM892 554h8v8h-8zM452 562h8v8h-8zM892 562h8v8h-8zM452 570h8v8h-8zM892 570h8v8h-8zM612 578h8v8h-8zM804 578h8v8h-8zM884 578h8v8h-8zM444 586h8v8h-8zM804 586h8v8h-8zM884 586h8v8h-8zM444 594h8v8h-8zM804 594h8v8h-8zM884 594h8v8h-8zM604 602h8v8h-8zM804 602h16v8h-16zM884 602h8v8h-8zM436 610h8v8h-8zM804 610h16v8h-16zM876 610h16v8h-16zM596 618h8v8h-8zM804 618h24v8h-24zM876 618h8v8h-8zM596 626h8v8h-8zM812 626h32v8h-32zM868 626h16v8h-16zM428 634h8v8h-8zM812 634h72v8h-72zM428 642h8v8h-8zM812 642h72v8h-72z"/><path fill="#46307e" d="M620 90h16v8h-16zM764 90h8v8h-8zM956 90h24v8h-24zM612 98h16v8h-16zM764 98h8v8h-8zM956 98h24v8h-24zM612 106h8v8h-8zM764 106h8v8h-8zM964 106h24v8h-24zM604 114h16v8h-16zM764 114h8v8h-8zM964 114h32v8h-32zM604 122h8v8h-8zM764 122h8v8h-8zM972 122h24v8h-24zM604 130h8v8h-8zM764 130h16v8h-16zM980 130h24v8h-24zM596 138h16v8h-16zM764 138h16v8h-16zM988 138h24v8h-24zM452 146h24v8h-24zM588 146h16v8h-16zM764 146h16v8h-16zM996 146h24v8h-24zM444 154h40v8h-40zM572 154h24v8h-24zM764 154h16v8h-16zM1004 154h40v8h-40zM436 162h56v8h-56zM556 162h32v8h-32zM764 162h16v8h-16zM1036 162h48v8h-48zM436 170h56v8h-56zM548 170h24v8h-24zM620 170h24v8h-24zM764 170h8v8h-8zM1084 170h16v8h-16zM428 178h72v8h-72zM540 178h24v8h-24zM612 178h48v8h-48zM764 178h8v8h-8zM1092 178h8v8h-8zM428 186h72v8h-72zM540 186h24v8h-24zM604 186h56v8h-56zM764 186h8v8h-8zM1092 186h8v8h-8zM428 194h80v8h-80zM532 194h32v8h-32zM604 194h56v8h-56zM756 194h8v8h-8zM1092 194h8v8h-8zM428 202h24v8h-24zM468 202h96v8h-96zM604 202h48v8h-48zM756 202h8v8h-8zM1092 202h8v8h-8zM420 210h24v8h-24zM476 210h88v8h-88zM604 210h48v8h-48zM1084 210h16v8h-16zM412 218h24v8h-24zM484 218h88v8h-88zM612 218h32v8h-32zM748 218h8v8h-8zM1076 218h16v8h-16zM388 226h32v8h-32zM500 226h80v8h-80zM604 226h16v8h-16zM628 226h8v8h-8zM748 226h8v8h-8zM980 226h104v8h-104zM364 234h24v8h-24zM516 234h88v8h-88zM628 234h8v8h-8zM748 234h8v8h-8zM964 234h32v8h-32zM340 242h8v8h-8zM540 242h48v8h-48zM628 242h8v8h-8zM748 242h8v8h-8zM956 242h16v8h-16zM316 250h8v8h-8zM540 250h32v8h-32zM628 250h8v8h-8zM948 250h16v8h-16zM292 258h8v8h-8zM540 258h32v8h-32zM628 258h8v8h-8zM932 258h16v8h-16zM276 266h8v8h-8zM540 266h24v8h-24zM628 266h8v8h-8zM924 266h16v8h-16zM260 274h8v8h-8zM540 274h24v8h-24zM628 274h8v8h-8zM740 274h8v8h-8zM916 274h8v8h-8zM148 282h8v8h-8zM540 282h24v8h-24zM628 282h8v8h-8zM740 282h8v8h-8zM908 282h8v8h-8zM180 290h8v8h-8zM236 290h8v8h-8zM548 290h8v8h-8zM628 290h8v8h-8zM740 290h8v8h-8zM908 290h8v8h-8zM548 298h16v8h-16zM628 298h8v8h-8zM548 306h16v8h-16zM628 306h8v8h-8zM900 306h8v8h-8zM548 314h16v8h-16zM628 314h8v8h-8zM732 314h8v8h-8zM900 314h8v8h-8zM548 322h16v8h-16zM628 322h8v8h-8zM716 322h8v8h-8zM892 322h8v8h-8zM548 330h16v8h-16zM620 330h16v8h-16zM708 330h8v8h-8zM556 338h8v8h-8zM620 338h16v8h-16zM700 338h8v8h-8zM884 338h8v8h-8zM556 346h8v8h-8zM620 346h16v8h-16zM692 346h8v8h-8zM876 346h8v8h-8zM556 354h16v8h-16zM620 354h16v8h-16zM676 354h8v8h-8zM564 362h8v8h-8zM628 362h40v8h-40zM868 362h8v8h-8zM564 370h8v8h-8zM564 378h8v8h-8zM860 378h8v8h-8zM564 386h8v8h-8zM852 386h8v8h-8zM564 394h8v8h-8zM844 394h8v8h-8zM556 402h16v8h-16zM836 402h8v8h-8zM556 410h8v8h-8zM820 410h16v8h-16zM276 418h16v8h-16zM308 418h16v8h-16zM548 418h8v8h-8zM812 418h16v8h-16zM148 426h32v8h-32zM268 426h8v8h-8zM284 426h24v8h-24zM316 426h8v8h-8zM540 426h8v8h-8zM812 426h8v8h-8zM180 434h8v8h-8zM268 434h16v8h-16zM532 434h8v8h-8zM804 434h8v8h-8zM180 442h8v8h-8zM292 442h8v8h-8zM516 442h16v8h-16zM796 442h8v8h-8zM868 442h32v8h-32zM172 450h8v8h-8zM284 450h8v8h-8zM436 450h8v8h-8zM508 450h8v8h-8zM788 450h8v8h-8zM860 450h8v8h-8zM148 458h24v8h-24zM260 458h16v8h-16zM324 458h16v8h-16zM428 458h24v8h-24zM484 458h24v8h-24zM772 458h8v8h-8zM852 458h8v8h-8zM268 466h8v8h-8zM348 466h16v8h-16zM428 466h8v8h-8zM444 466h8v8h-8zM476 466h16v8h-16zM916 466h8v8h-8zM276 474h8v8h-8zM356 474h8v8h-8zM420 474h8v8h-8zM444 474h8v8h-8zM468 474h8v8h-8zM740 474h8v8h-8zM924 474h8v8h-8zM276 482h8v8h-8zM356 482h8v8h-8zM420 482h8v8h-8zM452 482h16v8h-16zM836 482h8v8h-8zM932 482h8v8h-8zM284 490h8v8h-8zM340 490h8v8h-8zM428 490h8v8h-8zM708 490h8v8h-8zM932 490h8v8h-8zM284 498h16v8h-16zM332 498h8v8h-8zM436 498h16v8h-16zM684 498h16v8h-16zM828 498h8v8h-8zM924 498h8v8h-8zM292 506h32v8h-32zM444 506h16v8h-16zM668 506h8v8h-8zM828 506h8v8h-8zM916 506h8v8h-8zM452 514h8v8h-8zM628 514h16v8h-16zM660 514h8v8h-8zM820 514h8v8h-8zM908 514h8v8h-8zM452 522h8v8h-8zM644 522h16v8h-16zM820 522h8v8h-8zM892 522h16v8h-16zM620 530h8v8h-8zM820 530h8v8h-8zM460 538h8v8h-8zM620 538h8v8h-8zM644 538h8v8h-8zM812 538h8v8h-8zM460 546h8v8h-8zM628 546h24v8h-24zM812 546h8v8h-8zM460 554h8v8h-8zM812 554h8v8h-8zM884 554h8v8h-8zM460 562h8v8h-8zM636 562h8v8h-8zM804 562h16v8h-16zM884 562h8v8h-8zM460 570h8v8h-8zM620 570h8v8h-8zM804 570h16v8h-16zM884 570h8v8h-8zM452 578h8v8h-8zM812 578h8v8h-8zM876 578h8v8h-8zM452 586h8v8h-8zM812 586h8v8h-8zM876 586h8v8h-8zM604 594h8v8h-8zM812 594h16v8h-16zM868 594h16v8h-16zM444 602h8v8h-8zM820 602h24v8h-24zM860 602h24v8h-24zM596 610h8v8h-8zM820 610h56v8h-56zM436 618h8v8h-8zM828 618h48v8h-48zM436 626h8v8h-8zM844 626h24v8h-24zM588 642h8v8h-8z"/><path fill="#46337f" d="M460 90h40v8h-40zM604 90h16v8h-16zM772 90h8v8h-8zM940 90h16v8h-16zM460 98h40v8h-40zM604 98h8v8h-8zM772 98h8v8h-8zM940 98h16v8h-16zM460 106h32v8h-32zM596 106h16v8h-16zM772 106h8v8h-8zM948 106h16v8h-16zM460 114h32v8h-32zM596 114h8v8h-8zM772 114h16v8h-16zM948 114h16v8h-16zM452 122h40v8h-40zM588 122h16v8h-16zM772 122h16v8h-16zM956 122h16v8h-16zM452 130h48v8h-48zM588 130h16v8h-16zM780 130h8v8h-8zM956 130h24v8h-24zM444 138h56v8h-56zM572 138h24v8h-24zM780 138h8v8h-8zM972 138h16v8h-16zM436 146h16v8h-16zM476 146h40v8h-40zM540 146h48v8h-48zM780 146h8v8h-8zM972 146h24v8h-24zM428 154h16v8h-16zM484 154h88v8h-88zM780 154h8v8h-8zM980 154h24v8h-24zM420 162h16v8h-16zM492 162h64v8h-64zM780 162h8v8h-8zM988 162h48v8h-48zM412 170h24v8h-24zM492 170h56v8h-56zM772 170h16v8h-16zM1012 170h72v8h-72zM412 178h16v8h-16zM500 178h40v8h-40zM772 178h8v8h-8zM1052 178h40v8h-40zM404 186h24v8h-24zM500 186h40v8h-40zM772 186h8v8h-8zM1076 186h16v8h-16zM404 194h24v8h-24zM508 194h24v8h-24zM764 194h8v8h-8zM1076 194h16v8h-16zM396 202h32v8h-32zM764 202h8v8h-8zM1076 202h16v8h-16zM388 210h32v8h-32zM756 210h8v8h-8zM972 210h32v8h-32zM1060 210h24v8h-24zM380 218h32v8h-32zM756 218h8v8h-8zM956 218h120v8h-120zM364 226h24v8h-24zM620 226h8v8h-8zM756 226h8v8h-8zM948 226h32v8h-32zM340 234h24v8h-24zM604 234h24v8h-24zM756 234h8v8h-8zM940 234h24v8h-24zM324 242h16v8h-16zM588 242h40v8h-40zM756 242h8v8h-8zM932 242h24v8h-24zM300 250h16v8h-16zM572 250h56v8h-56zM756 250h8v8h-8zM924 250h24v8h-24zM276 258h16v8h-16zM572 258h56v8h-56zM756 258h8v8h-8zM916 258h16v8h-16zM260 266h16v8h-16zM564 266h32v8h-32zM612 266h16v8h-16zM748 266h8v8h-8zM916 266h8v8h-8zM252 274h8v8h-8zM564 274h24v8h-24zM612 274h16v8h-16zM748 274h8v8h-8zM908 274h8v8h-8zM156 282h16v8h-16zM236 282h16v8h-16zM564 282h16v8h-16zM620 282h8v8h-8zM900 282h8v8h-8zM188 290h48v8h-48zM556 290h24v8h-24zM620 290h8v8h-8zM900 290h8v8h-8zM564 298h16v8h-16zM620 298h8v8h-8zM740 298h8v8h-8zM900 298h8v8h-8zM564 306h16v8h-16zM612 306h16v8h-16zM892 306h8v8h-8zM564 314h16v8h-16zM612 314h16v8h-16zM892 314h8v8h-8zM564 322h16v8h-16zM612 322h16v8h-16zM724 322h8v8h-8zM884 322h8v8h-8zM564 330h16v8h-16zM604 330h16v8h-16zM884 330h8v8h-8zM564 338h16v8h-16zM604 338h16v8h-16zM876 338h8v8h-8zM564 346h16v8h-16zM604 346h16v8h-16zM572 354h8v8h-8zM604 354h16v8h-16zM684 354h8v8h-8zM868 354h8v8h-8zM572 362h16v8h-16zM604 362h24v8h-24zM668 362h8v8h-8zM860 362h8v8h-8zM572 370h16v8h-16zM604 370h56v8h-56zM860 370h8v8h-8zM572 378h24v8h-24zM612 378h32v8h-32zM852 378h8v8h-8zM572 386h32v8h-32zM844 386h8v8h-8zM572 394h32v8h-32zM828 394h16v8h-16zM572 402h32v8h-32zM820 402h16v8h-16zM564 410h40v8h-40zM812 410h8v8h-8zM556 418h40v8h-40zM804 418h8v8h-8zM276 426h8v8h-8zM308 426h8v8h-8zM548 426h32v8h-32zM796 426h16v8h-16zM148 434h32v8h-32zM300 434h8v8h-8zM316 434h8v8h-8zM540 434h16v8h-16zM796 434h8v8h-8zM148 442h32v8h-32zM316 442h8v8h-8zM532 442h16v8h-16zM788 442h8v8h-8zM148 450h24v8h-24zM292 450h8v8h-8zM316 450h8v8h-8zM516 450h16v8h-16zM780 450h8v8h-8zM868 450h8v8h-8zM884 450h16v8h-16zM276 458h16v8h-16zM316 458h8v8h-8zM508 458h16v8h-16zM764 458h8v8h-8zM860 458h8v8h-8zM892 458h8v8h-8zM276 466h16v8h-16zM324 466h24v8h-24zM436 466h8v8h-8zM492 466h16v8h-16zM748 466h8v8h-8zM852 466h8v8h-8zM892 466h24v8h-24zM284 474h8v8h-8zM340 474h16v8h-16zM428 474h16v8h-16zM476 474h24v8h-24zM732 474h8v8h-8zM844 474h8v8h-8zM916 474h8v8h-8zM284 482h16v8h-16zM340 482h16v8h-16zM428 482h24v8h-24zM468 482h24v8h-24zM716 482h8v8h-8zM924 482h8v8h-8zM292 490h24v8h-24zM324 490h16v8h-16zM436 490h48v8h-48zM700 490h8v8h-8zM836 490h8v8h-8zM924 490h8v8h-8zM300 498h32v8h-32zM452 498h24v8h-24zM668 498h16v8h-16zM836 498h8v8h-8zM460 506h16v8h-16zM652 506h16v8h-16zM836 506h8v8h-8zM460 514h16v8h-16zM644 514h16v8h-16zM828 514h16v8h-16zM892 514h16v8h-16zM460 522h8v8h-8zM620 522h8v8h-8zM828 522h16v8h-16zM460 530h8v8h-8zM828 530h8v8h-8zM884 530h8v8h-8zM820 538h16v8h-16zM884 538h8v8h-8zM620 546h8v8h-8zM820 546h16v8h-16zM884 546h8v8h-8zM628 554h16v8h-16zM820 554h8v8h-8zM876 554h8v8h-8zM468 562h8v8h-8zM628 562h8v8h-8zM820 562h8v8h-8zM876 562h8v8h-8zM820 570h8v8h-8zM868 570h16v8h-16zM460 578h8v8h-8zM820 578h16v8h-16zM860 578h16v8h-16zM460 586h8v8h-8zM604 586h8v8h-8zM820 586h56v8h-56zM452 594h8v8h-8zM596 594h8v8h-8zM828 594h40v8h-40zM452 602h8v8h-8zM596 602h8v8h-8zM844 602h16v8h-16zM444 610h8v8h-8zM588 610h8v8h-8zM444 618h8v8h-8zM588 618h8v8h-8zM588 626h8v8h-8zM436 634h8v8h-8zM588 634h8v8h-8z"/><path fill="#453781" d="M444 90h16v8h-16zM500 90h16v8h-16zM588 90h16v8h-16zM780 90h16v8h-16zM916 90h24v8h-24zM452 98h8v8h-8zM500 98h24v8h-24zM588 98h16v8h-16zM780 98h16v8h-16zM916 98h24v8h-24zM444 106h16v8h-16zM492 106h32v8h-32zM588 106h8v8h-8zM780 106h16v8h-16zM916 106h32v8h-32zM444 114h16v8h-16zM492 114h40v8h-40zM580 114h16v8h-16zM788 114h8v8h-8zM916 114h32v8h-32zM444 122h8v8h-8zM492 122h56v8h-56zM564 122h24v8h-24zM788 122h8v8h-8zM916 122h40v8h-40zM436 130h16v8h-16zM500 130h88v8h-88zM788 130h8v8h-8zM916 130h40v8h-40zM420 138h24v8h-24zM500 138h72v8h-72zM788 138h8v8h-8zM924 138h48v8h-48zM412 146h24v8h-24zM516 146h24v8h-24zM788 146h8v8h-8zM924 146h48v8h-48zM404 154h24v8h-24zM788 154h8v8h-8zM932 154h48v8h-48zM396 162h24v8h-24zM788 162h8v8h-8zM932 162h56v8h-56zM388 170h24v8h-24zM788 170h8v8h-8zM932 170h80v8h-80zM380 178h32v8h-32zM780 178h16v8h-16zM932 178h120v8h-120zM380 186h24v8h-24zM780 186h8v8h-8zM932 186h144v8h-144zM372 194h32v8h-32zM772 194h16v8h-16zM932 194h88v8h-88zM1028 194h48v8h-48zM372 202h24v8h-24zM772 202h8v8h-8zM924 202h152v8h-152zM364 210h24v8h-24zM764 210h16v8h-16zM924 210h48v8h-48zM1004 210h56v8h-56zM356 218h24v8h-24zM764 218h16v8h-16zM924 218h32v8h-32zM348 226h16v8h-16zM764 226h16v8h-16zM916 226h32v8h-32zM332 234h8v8h-8zM764 234h16v8h-16zM916 234h24v8h-24zM316 242h8v8h-8zM764 242h8v8h-8zM916 242h16v8h-16zM284 250h16v8h-16zM764 250h8v8h-8zM908 250h16v8h-16zM268 258h8v8h-8zM764 258h8v8h-8zM908 258h8v8h-8zM252 266h8v8h-8zM596 266h16v8h-16zM756 266h8v8h-8zM900 266h16v8h-16zM148 274h8v8h-8zM236 274h16v8h-16zM588 274h24v8h-24zM900 274h8v8h-8zM172 282h24v8h-24zM220 282h16v8h-16zM580 282h40v8h-40zM748 282h8v8h-8zM892 282h8v8h-8zM580 290h40v8h-40zM892 290h8v8h-8zM580 298h40v8h-40zM892 298h8v8h-8zM580 306h32v8h-32zM740 306h8v8h-8zM884 306h8v8h-8zM580 314h32v8h-32zM740 314h8v8h-8zM884 314h8v8h-8zM580 322h32v8h-32zM732 322h8v8h-8zM876 322h8v8h-8zM580 330h24v8h-24zM876 330h8v8h-8zM580 338h24v8h-24zM868 338h8v8h-8zM580 346h24v8h-24zM868 346h8v8h-8zM580 354h24v8h-24zM692 354h8v8h-8zM860 354h8v8h-8zM588 362h16v8h-16zM676 362h8v8h-8zM852 362h8v8h-8zM588 370h16v8h-16zM660 370h8v8h-8zM844 370h16v8h-16zM596 378h16v8h-16zM644 378h16v8h-16zM836 378h16v8h-16zM604 386h48v8h-48zM828 386h16v8h-16zM604 394h40v8h-40zM820 394h8v8h-8zM604 402h32v8h-32zM812 402h8v8h-8zM604 410h24v8h-24zM804 410h8v8h-8zM596 418h32v8h-32zM796 418h8v8h-8zM580 426h40v8h-40zM788 426h8v8h-8zM308 434h8v8h-8zM556 434h56v8h-56zM788 434h8v8h-8zM300 442h16v8h-16zM548 442h48v8h-48zM780 442h8v8h-8zM300 450h16v8h-16zM532 450h32v8h-32zM764 450h16v8h-16zM876 450h8v8h-8zM292 458h24v8h-24zM524 458h16v8h-16zM756 458h8v8h-8zM868 458h8v8h-8zM884 458h8v8h-8zM292 466h32v8h-32zM508 466h24v8h-24zM740 466h8v8h-8zM292 474h48v8h-48zM500 474h16v8h-16zM724 474h8v8h-8zM852 474h8v8h-8zM908 474h8v8h-8zM300 482h40v8h-40zM492 482h16v8h-16zM708 482h8v8h-8zM844 482h8v8h-8zM916 482h8v8h-8zM316 490h8v8h-8zM484 490h16v8h-16zM676 490h24v8h-24zM844 490h8v8h-8zM476 498h16v8h-16zM652 498h16v8h-16zM916 498h8v8h-8zM476 506h8v8h-8zM628 506h24v8h-24zM844 506h8v8h-8zM892 506h8v8h-8zM908 506h8v8h-8zM476 514h8v8h-8zM620 514h8v8h-8zM844 514h8v8h-8zM884 514h8v8h-8zM468 522h16v8h-16zM844 522h8v8h-8zM884 522h8v8h-8zM468 530h8v8h-8zM612 530h8v8h-8zM836 530h24v8h-24zM468 538h8v8h-8zM612 538h8v8h-8zM836 538h48v8h-48zM468 546h8v8h-8zM836 546h48v8h-48zM468 554h8v8h-8zM620 554h8v8h-8zM828 554h48v8h-48zM620 562h8v8h-8zM828 562h48v8h-48zM468 570h8v8h-8zM612 570h8v8h-8zM828 570h40v8h-40zM468 578h8v8h-8zM604 578h8v8h-8zM836 578h24v8h-24zM468 586h8v8h-8zM596 586h8v8h-8zM460 594h8v8h-8zM588 594h8v8h-8zM460 602h8v8h-8zM580 602h16v8h-16zM452 610h8v8h-8zM580 610h8v8h-8zM452 618h8v8h-8zM580 618h8v8h-8zM444 626h8v8h-8zM580 626h8v8h-8zM444 634h8v8h-8zM580 634h8v8h-8zM436 642h8v8h-8zM580 642h8v8h-8z"/><path fill="#443983" d="M436 90h8v8h-8zM516 90h32v8h-32zM564 90h24v8h-24zM796 90h32v8h-32zM860 90h56v8h-56zM436 98h16v8h-16zM524 98h64v8h-64zM796 98h32v8h-32zM860 98h56v8h-56zM436 106h8v8h-8zM524 106h64v8h-64zM796 106h24v8h-24zM860 106h56v8h-56zM436 114h8v8h-8zM532 114h48v8h-48zM796 114h24v8h-24zM860 114h56v8h-56zM420 122h24v8h-24zM548 122h16v8h-16zM796 122h24v8h-24zM868 122h48v8h-48zM404 130h32v8h-32zM796 130h16v8h-16zM868 130h48v8h-48zM388 138h32v8h-32zM796 138h16v8h-16zM876 138h48v8h-48zM380 146h32v8h-32zM796 146h16v8h-16zM876 146h48v8h-48zM380 154h24v8h-24zM796 154h16v8h-16zM884 154h48v8h-48zM372 162h24v8h-24zM796 162h16v8h-16zM884 162h48v8h-48zM372 170h16v8h-16zM796 170h8v8h-8zM892 170h40v8h-40zM364 178h16v8h-16zM796 178h8v8h-8zM892 178h40v8h-40zM364 186h16v8h-16zM788 186h16v8h-16zM900 186h32v8h-32zM364 194h8v8h-8zM788 194h8v8h-8zM900 194h32v8h-32zM1020 194h8v8h-8zM356 202h16v8h-16zM780 202h16v8h-16zM900 202h24v8h-24zM348 210h16v8h-16zM780 210h16v8h-16zM900 210h24v8h-24zM340 218h16v8h-16zM780 218h16v8h-16zM900 218h24v8h-24zM332 226h16v8h-16zM780 226h16v8h-16zM900 226h16v8h-16zM316 234h16v8h-16zM780 234h16v8h-16zM900 234h16v8h-16zM292 242h24v8h-24zM772 242h24v8h-24zM900 242h16v8h-16zM268 250h16v8h-16zM772 250h16v8h-16zM892 250h16v8h-16zM244 258h24v8h-24zM772 258h8v8h-8zM892 258h16v8h-16zM220 266h32v8h-32zM764 266h8v8h-8zM892 266h8v8h-8zM156 274h80v8h-80zM756 274h8v8h-8zM884 274h16v8h-16zM196 282h24v8h-24zM756 282h8v8h-8zM884 282h8v8h-8zM748 290h8v8h-8zM884 290h8v8h-8zM748 298h8v8h-8zM876 298h16v8h-16zM876 306h8v8h-8zM876 314h8v8h-8zM740 322h8v8h-8zM868 322h8v8h-8zM716 330h8v8h-8zM868 330h8v8h-8zM708 338h8v8h-8zM860 338h8v8h-8zM700 346h8v8h-8zM852 346h16v8h-16zM844 354h16v8h-16zM836 362h16v8h-16zM668 370h8v8h-8zM828 370h16v8h-16zM660 378h8v8h-8zM820 378h16v8h-16zM652 386h8v8h-8zM812 386h16v8h-16zM644 394h8v8h-8zM804 394h16v8h-16zM636 402h16v8h-16zM796 402h16v8h-16zM628 410h24v8h-24zM788 410h16v8h-16zM628 418h16v8h-16zM788 418h8v8h-8zM620 426h24v8h-24zM780 426h8v8h-8zM612 434h24v8h-24zM780 434h8v8h-8zM596 442h32v8h-32zM772 442h8v8h-8zM564 450h48v8h-48zM756 450h8v8h-8zM540 458h64v8h-64zM748 458h8v8h-8zM876 458h8v8h-8zM532 466h48v8h-48zM732 466h8v8h-8zM860 466h16v8h-16zM884 466h8v8h-8zM516 474h32v8h-32zM716 474h8v8h-8zM884 474h24v8h-24zM508 482h24v8h-24zM692 482h16v8h-16zM852 482h8v8h-8zM884 482h16v8h-16zM908 482h8v8h-8zM500 490h16v8h-16zM636 490h40v8h-40zM884 490h16v8h-16zM916 490h8v8h-8zM492 498h16v8h-16zM620 498h32v8h-32zM844 498h8v8h-8zM884 498h16v8h-16zM908 498h8v8h-8zM484 506h16v8h-16zM612 506h16v8h-16zM852 506h8v8h-8zM884 506h8v8h-8zM900 506h8v8h-8zM484 514h8v8h-8zM612 514h8v8h-8zM852 514h8v8h-8zM484 522h8v8h-8zM612 522h8v8h-8zM852 522h32v8h-32zM476 530h8v8h-8zM860 530h24v8h-24zM476 538h8v8h-8zM476 546h8v8h-8zM612 546h8v8h-8zM476 554h8v8h-8zM476 562h8v8h-8zM612 562h8v8h-8zM476 570h8v8h-8zM604 570h8v8h-8zM476 578h8v8h-8zM548 578h56v8h-56zM476 586h8v8h-8zM540 586h56v8h-56zM468 594h16v8h-16zM540 594h48v8h-48zM468 602h8v8h-8zM540 602h40v8h-40zM460 610h16v8h-16zM540 610h40v8h-40zM460 618h8v8h-8zM548 618h32v8h-32zM452 626h8v8h-8zM556 626h24v8h-24zM452 634h8v8h-8zM564 634h16v8h-16zM444 642h8v8h-8zM572 642h8v8h-8z"/><path fill="#443b84" d="M428 90h8v8h-8zM548 90h16v8h-16zM828 90h32v8h-32zM428 98h8v8h-8zM828 98h32v8h-32zM420 106h16v8h-16zM820 106h40v8h-40zM372 114h64v8h-64zM820 114h40v8h-40zM364 122h56v8h-56zM820 122h48v8h-48zM364 130h40v8h-40zM812 130h56v8h-56zM364 138h24v8h-24zM812 138h64v8h-64zM356 146h24v8h-24zM812 146h64v8h-64zM356 154h24v8h-24zM812 154h72v8h-72zM356 162h16v8h-16zM812 162h72v8h-72zM356 170h16v8h-16zM804 170h88v8h-88zM356 178h8v8h-8zM804 178h88v8h-88zM356 186h8v8h-8zM804 186h16v8h-16zM852 186h48v8h-48zM348 194h16v8h-16zM796 194h24v8h-24zM868 194h32v8h-32zM348 202h8v8h-8zM796 202h16v8h-16zM876 202h24v8h-24zM340 210h8v8h-8zM796 210h16v8h-16zM876 210h24v8h-24zM332 218h8v8h-8zM796 218h16v8h-16zM876 218h24v8h-24zM316 226h16v8h-16zM796 226h16v8h-16zM876 226h24v8h-24zM292 234h24v8h-24zM796 234h16v8h-16zM876 234h24v8h-24zM244 242h48v8h-48zM796 242h16v8h-16zM876 242h24v8h-24zM204 250h64v8h-64zM788 250h16v8h-16zM876 250h16v8h-16zM180 258h64v8h-64zM780 258h16v8h-16zM876 258h16v8h-16zM148 266h72v8h-72zM772 266h16v8h-16zM876 266h16v8h-16zM764 274h16v8h-16zM868 274h16v8h-16zM764 282h8v8h-8zM868 282h16v8h-16zM756 290h8v8h-8zM868 290h16v8h-16zM868 298h8v8h-8zM748 306h8v8h-8zM860 306h16v8h-16zM748 314h8v8h-8zM860 314h16v8h-16zM748 322h8v8h-8zM852 322h16v8h-16zM724 330h24v8h-24zM852 330h16v8h-16zM844 338h16v8h-16zM828 346h24v8h-24zM700 354h8v8h-8zM820 354h24v8h-24zM684 362h8v8h-8zM812 362h24v8h-24zM676 370h8v8h-8zM812 370h16v8h-16zM668 378h8v8h-8zM804 378h16v8h-16zM660 386h8v8h-8zM796 386h16v8h-16zM652 394h16v8h-16zM788 394h16v8h-16zM652 402h8v8h-8zM780 402h16v8h-16zM652 410h8v8h-8zM780 410h8v8h-8zM644 418h16v8h-16zM772 418h16v8h-16zM644 426h16v8h-16zM772 426h8v8h-8zM636 434h24v8h-24zM764 434h16v8h-16zM628 442h24v8h-24zM756 442h16v8h-16zM612 450h40v8h-40zM748 450h8v8h-8zM604 458h48v8h-48zM732 458h16v8h-16zM580 466h80v8h-80zM724 466h8v8h-8zM876 466h8v8h-8zM548 474h136v8h-136zM700 474h16v8h-16zM860 474h24v8h-24zM532 482h160v8h-160zM860 482h8v8h-8zM900 482h8v8h-8zM516 490h32v8h-32zM588 490h48v8h-48zM852 490h8v8h-8zM900 490h16v8h-16zM508 498h24v8h-24zM596 498h24v8h-24zM852 498h8v8h-8zM900 498h8v8h-8zM500 506h16v8h-16zM596 506h16v8h-16zM860 506h8v8h-8zM492 514h16v8h-16zM604 514h8v8h-8zM860 514h24v8h-24zM492 522h8v8h-8zM604 522h8v8h-8zM484 530h16v8h-16zM604 530h8v8h-8zM484 538h8v8h-8zM604 538h8v8h-8zM484 546h8v8h-8zM604 546h8v8h-8zM484 554h8v8h-8zM604 554h16v8h-16zM484 562h16v8h-16zM604 562h8v8h-8zM484 570h16v8h-16zM540 570h64v8h-64zM484 578h16v8h-16zM532 578h16v8h-16zM484 586h16v8h-16zM524 586h16v8h-16zM484 594h16v8h-16zM516 594h24v8h-24zM476 602h16v8h-16zM516 602h24v8h-24zM476 610h16v8h-16zM524 610h16v8h-16zM468 618h16v8h-16zM524 618h24v8h-24zM460 626h16v8h-16zM524 626h32v8h-32zM460 634h8v8h-8zM532 634h32v8h-32zM452 642h16v8h-16zM532 642h40v8h-40z"/><path fill="#433e85" d="M324 90h104v8h-104zM332 98h96v8h-96zM332 106h88v8h-88zM332 114h40v8h-40zM340 122h24v8h-24zM340 130h24v8h-24zM340 138h24v8h-24zM340 146h16v8h-16zM340 154h16v8h-16zM340 162h16v8h-16zM340 170h16v8h-16zM340 178h16v8h-16zM340 186h16v8h-16zM820 186h32v8h-32zM340 194h8v8h-8zM820 194h48v8h-48zM332 202h16v8h-16zM812 202h64v8h-64zM324 210h16v8h-16zM812 210h64v8h-64zM308 218h24v8h-24zM812 218h64v8h-64zM244 226h72v8h-72zM812 226h64v8h-64zM148 234h8v8h-8zM212 234h80v8h-80zM812 234h64v8h-64zM148 242h96v8h-96zM812 242h64v8h-64zM148 250h56v8h-56zM804 250h72v8h-72zM148 258h32v8h-32zM796 258h32v8h-32zM844 258h32v8h-32zM788 266h24v8h-24zM844 266h32v8h-32zM780 274h24v8h-24zM852 274h16v8h-16zM772 282h16v8h-16zM852 282h16v8h-16zM764 290h8v8h-8zM844 290h24v8h-24zM756 298h8v8h-8zM844 298h24v8h-24zM756 306h8v8h-8zM844 306h16v8h-16zM756 314h8v8h-8zM836 314h24v8h-24zM756 322h8v8h-8zM828 322h24v8h-24zM748 330h16v8h-16zM820 330h32v8h-32zM716 338h40v8h-40zM812 338h32v8h-32zM708 346h8v8h-8zM740 346h8v8h-8zM804 346h24v8h-24zM708 354h8v8h-8zM796 354h24v8h-24zM692 362h16v8h-16zM788 362h24v8h-24zM684 370h8v8h-8zM780 370h32v8h-32zM676 378h8v8h-8zM772 378h32v8h-32zM668 386h8v8h-8zM772 386h24v8h-24zM668 394h8v8h-8zM764 394h24v8h-24zM660 402h16v8h-16zM764 402h16v8h-16zM660 410h16v8h-16zM756 410h24v8h-24zM660 418h16v8h-16zM756 418h16v8h-16zM660 426h16v8h-16zM756 426h16v8h-16zM660 434h16v8h-16zM748 434h16v8h-16zM652 442h24v8h-24zM740 442h16v8h-16zM652 450h32v8h-32zM732 450h16v8h-16zM652 458h32v8h-32zM716 458h16v8h-16zM660 466h64v8h-64zM684 474h16v8h-16zM868 482h16v8h-16zM548 490h40v8h-40zM860 490h24v8h-24zM532 498h64v8h-64zM860 498h24v8h-24zM516 506h24v8h-24zM580 506h16v8h-16zM868 506h16v8h-16zM508 514h16v8h-16zM588 514h16v8h-16zM500 522h16v8h-16zM588 522h16v8h-16zM500 530h8v8h-8zM596 530h8v8h-8zM492 538h16v8h-16zM596 538h8v8h-8zM492 546h16v8h-16zM596 546h8v8h-8zM492 554h16v8h-16zM556 554h48v8h-48zM500 562h8v8h-8zM532 562h72v8h-72zM500 570h40v8h-40zM500 578h32v8h-32zM500 586h24v8h-24zM500 594h16v8h-16zM492 602h24v8h-24zM492 610h32v8h-32zM484 618h40v8h-40zM476 626h48v8h-48zM468 634h64v8h-64zM468 642h64v8h-64z"/><path fill="#424186" d="M276 90h48v8h-48zM284 98h48v8h-48zM292 106h40v8h-40zM300 114h32v8h-32zM308 122h32v8h-32zM316 130h24v8h-24zM316 138h24v8h-24zM324 146h16v8h-16zM324 154h16v8h-16zM324 162h16v8h-16zM324 170h16v8h-16zM324 178h16v8h-16zM324 186h16v8h-16zM316 194h24v8h-24zM268 202h64v8h-64zM148 210h8v8h-8zM244 210h80v8h-80zM148 218h40v8h-40zM220 218h88v8h-88zM148 226h96v8h-96zM156 234h56v8h-56zM828 258h16v8h-16zM812 266h32v8h-32zM804 274h48v8h-48zM788 282h64v8h-64zM772 290h72v8h-72zM764 298h80v8h-80zM764 306h16v8h-16zM804 306h40v8h-40zM764 314h8v8h-8zM804 314h32v8h-32zM764 322h8v8h-8zM804 322h24v8h-24zM764 330h8v8h-8zM796 330h24v8h-24zM756 338h56v8h-56zM716 346h24v8h-24zM748 346h56v8h-56zM716 354h80v8h-80zM708 362h8v8h-8zM748 362h40v8h-40zM692 370h8v8h-8zM748 370h32v8h-32zM684 378h8v8h-8zM756 378h16v8h-16zM676 386h16v8h-16zM748 386h24v8h-24zM676 394h8v8h-8zM748 394h16v8h-16zM676 402h16v8h-16zM748 402h16v8h-16zM676 410h16v8h-16zM740 410h16v8h-16zM676 418h24v8h-24zM724 418h32v8h-32zM676 426h80v8h-80zM676 434h72v8h-72zM676 442h64v8h-64zM684 450h48v8h-48zM684 458h32v8h-32zM540 506h40v8h-40zM524 514h64v8h-64zM516 522h24v8h-24zM564 522h24v8h-24zM508 530h24v8h-24zM572 530h24v8h-24zM508 538h16v8h-16zM564 538h32v8h-32zM508 546h16v8h-16zM540 546h56v8h-56zM508 554h48v8h-48zM508 562h24v8h-24z"/><path fill="#414487" d="M236 90h40v8h-40zM236 98h48v8h-48zM244 106h48v8h-48zM244 114h56v8h-56zM244 122h64v8h-64zM252 130h64v8h-64zM260 138h56v8h-56zM260 146h64v8h-64zM268 154h56v8h-56zM268 162h56v8h-56zM268 170h56v8h-56zM260 178h64v8h-64zM252 186h72v8h-72zM148 194h32v8h-32zM236 194h80v8h-80zM148 202h120v8h-120zM156 210h88v8h-88zM188 218h32v8h-32zM780 306h24v8h-24zM772 314h32v8h-32zM772 322h32v8h-32zM772 330h24v8h-24zM716 362h32v8h-32zM700 370h16v8h-16zM732 370h16v8h-16zM692 378h16v8h-16zM732 378h24v8h-24zM692 386h16v8h-16zM732 386h16v8h-16zM684 394h64v8h-64zM692 402h56v8h-56zM692 410h48v8h-48zM700 418h24v8h-24zM540 522h24v8h-24zM532 530h40v8h-40zM524 538h40v8h-40zM524 546h16v8h-16z"/><path fill="#404688" d="M148 90h88v8h-88zM148 98h88v8h-88zM148 106h96v8h-96zM148 114h96v8h-96zM148 122h96v8h-96zM148 130h104v8h-104zM148 138h24v8h-24zM188 138h72v8h-72zM188 146h72v8h-72zM180 154h88v8h-88zM156 162h112v8h-112zM148 170h120v8h-120zM148 178h112v8h-112zM148 186h104v8h-104zM180 194h56v8h-56zM716 370h16v8h-16zM708 378h24v8h-24zM708 386h24v8h-24z"/><path fill="#3f4889" d="M172 138h16v8h-16zM148 146h40v8h-40zM148 154h32v8h-32zM148 162h8v8h-8z"/></g><g fill="#fff"><polygon points="594.5,217.4 610.3,221.5 601.4,230.9 589.6,226.2"/><polygon points="639.5,288.0 646.2,280.5 653.8,268.0 660.0,266.8 668.8,273.0 680.0,281.8 672.5,286.8 665.0,288.0 661.2,295.5 650.0,295.5"/><polygon points="387.5,371.8 396.2,369.2 406.2,374.2 420.0,383.0 435.0,386.8 445.0,377.5 451.2,385.5 446.2,395.5 425.0,400.0 406.2,401.0 400.0,393.0 397.5,385.5"/><polygon points="511.2,406.8 520.5,400.0 534.5,410.0"/><polygon points="453.0,472.2 458.0,468.0 466.2,467.2 470.0,470.5 461.2,478.0 456.2,479.8"/><polygon points="630.0,527.2 636.2,521.0 641.2,534.8"/><polygon points="622.5,538.0 632.5,543.0 623.8,548.5"/><polygon points="689.5,523.5 700.5,528.0 691.2,537.2"/><polygon points="728.8,489.8 741.2,492.2 729.5,503.0"/><polygon points="698.8,567.2 707.5,557.2 712.5,572.2"/><polygon points="650.5,576.0 660.0,567.2 663.8,578.0"/><polygon points="620.5,585.5 633.8,578.0 627.0,595.0"/><polygon points="765.5,475.5 773.8,486.0 765.5,488.0"/><polygon points="427.0,507.0 432.5,513.0 427.0,517.5"/><polygon points="715.0,236.0 721.5,238.7 732.7,237.3 739.6,245.6 750.6,247.5 757.8,255.2 736.8,269.0 725.7,274.6 720.0,285.5 718.8,295.5 723.8,308.0 728.8,321.8 735.0,325.5 753.8,324.2 756.2,335.5 743.8,348.0 730.0,356.8 717.5,364.2 703.8,363.0 692.5,355.5 683.8,349.2 690.0,345.5 703.8,343.0 708.8,335.5 710.0,323.0 706.2,311.8 703.8,303.0 710.0,295.5 711.2,288.0 706.2,280.5 698.0,277.0 695.4,269.0 700.9,262.2 714.7,249.7"/><polygon points="164.0,513.0 175.0,515.0 185.0,519.5 193.8,523.8 195.0,517.5 201.2,517.5 203.8,525.0 208.8,529.5 223.8,520.0 221.2,505.0 225.5,487.5 220.0,480.0 210.0,473.8 215.5,470.0 213.8,460.0 220.0,451.2 226.2,451.2 240.0,458.0 248.8,452.5 255.0,442.5 260.0,440.0 265.0,446.2 272.5,448.8 285.0,445.0 295.0,433.8 297.5,423.8 305.0,413.8 316.2,405.0 325.0,403.8 328.8,408.8 322.5,416.2 326.2,426.2 332.5,436.2 335.0,443.8 342.5,446.2 348.8,442.5 345.0,436.2 352.5,427.5 360.0,415.0 367.5,410.0 377.5,409.5 390.0,412.5 410.0,413.8 420.0,420.0 421.2,435.0 425.0,452.5 422.5,465.0 410.0,477.5 395.0,486.2 377.5,493.8 360.0,500.0 345.0,508.8 335.0,517.5 327.5,526.2 326.2,533.8 320.0,542.5 310.0,553.8 300.0,560.0 290.0,563.8 285.0,570.0 285.0,578.8 290.0,587.5 295.0,597.5 296.2,612.5 301.2,622.5 307.5,632.0 164.0,632.0"/><polygon points="367.5,632.0 372.5,626.2 380.0,623.8 388.8,625.0 395.0,632.0"/><polygon points="1200.0,228.0 1187.5,231.2 1170.0,237.5 1150.0,246.2 1135.0,253.8 1125.0,262.5 1117.5,271.2 1105.0,280.0 1090.0,286.2 1075.0,292.5 1060.0,300.0 1045.0,307.5 1030.0,316.2 1012.5,327.5 1000.0,336.2 987.5,346.2 978.8,355.0 975.5,356.8 971.2,368.0 968.8,380.5 970.0,395.5 967.5,410.5 962.5,421.8 960.0,426.0 950.0,433.5 935.0,442.2 920.0,451.0 905.0,461.0 895.0,469.8 888.8,478.5 889.5,493.5 892.5,508.5 893.8,523.5 897.5,536.0 905.0,546.0 917.5,553.5 935.0,558.5 955.0,561.0 972.0,560.5 977.5,572.2 967.5,586.0 965.0,587.5 950.0,607.5 937.5,622.5 930.0,632.0 1200.0,632.0"/></g><path fill="#1fecee" d="M173.6 142.9A1.80 1.80 0 0 0 175.4 146.1L201.4 130.4L201.1 129.6zM176.0 151.0A1.80 1.80 0 0 0 178.0 154.0L219.7 125.3L219.3 124.7zM226.2 130.9A1.80 1.80 0 0 0 227.8 134.1L254.7 118.4L254.3 117.6zM196.6 168.0A1.80 1.80 0 0 0 198.4 171.0L224.0 153.6L223.5 152.9zM177.8 189.7A1.80 1.80 0 0 0 179.7 192.8L235.2 157.3L234.8 156.7zM215.3 171.7A1.80 1.80 0 0 0 217.2 174.8L244.7 156.6L244.3 155.9zM196.6 192.2A1.80 1.80 0 0 0 198.4 195.3L234.7 172.8L234.3 172.2zM199.6 197.2A1.80 1.80 0 0 0 201.4 200.3L227.7 184.1L227.3 183.4zM174.2 207.9A1.80 1.80 0 0 0 175.8 211.1L197.7 197.9L197.3 197.1zM194.1 210.4A1.80 1.80 0 0 0 195.9 213.6L221.4 197.3L221.1 196.7zM175.4 236.7A1.80 1.80 0 0 0 177.1 239.8L200.2 225.3L199.8 224.7zM198.0 222.9A1.80 1.80 0 0 0 199.5 226.1L241.4 205.4L241.1 204.6zM180.4 250.4A1.80 1.80 0 0 0 182.1 253.6L205.2 239.1L204.8 238.4zM196.6 244.7A1.80 1.80 0 0 0 198.4 247.8L221.5 232.3L221.0 231.7zM224.7 241.4A1.80 1.80 0 0 0 226.3 244.6L250.2 230.4L249.8 229.6zM236.7 243.9A1.80 1.80 0 0 0 238.3 247.1L260.2 235.4L259.8 234.6zM201.7 260.4A1.80 1.80 0 0 0 203.3 263.6L218.9 254.1L218.6 253.4zM219.2 260.4A1.80 1.80 0 0 0 220.8 263.6L235.2 255.4L234.8 254.6zM256.2 146.6A1.80 1.80 0 0 0 257.8 149.9L283.9 134.9L283.6 134.1zM273.1 151.6A1.80 1.80 0 0 0 274.4 154.9L309.7 139.1L309.3 138.4zM285.5 159.6A1.80 1.80 0 0 0 287.0 162.9L326.4 142.4L326.1 141.6zM302.4 125.3A1.80 1.80 0 0 0 303.6 128.7L330.9 117.4L330.6 116.6zM300.5 135.4A1.80 1.80 0 0 0 302.0 138.6L327.2 126.1L326.8 125.4zM311.8 134.1A1.80 1.80 0 0 0 313.2 137.4L336.4 126.6L336.1 125.9zM332.7 128.3A1.80 1.80 0 0 0 333.8 131.7L358.9 122.1L358.6 121.4zM347.5 128.8A1.80 1.80 0 0 0 348.5 132.2L372.6 124.1L372.4 123.4zM372.2 129.5A1.80 1.80 0 0 0 372.8 133.0L396.3 127.4L396.2 126.6zM373.5 110.2A1.80 1.80 0 0 0 374.0 113.8L397.6 109.1L397.4 108.4zM378.4 117.0A1.80 1.80 0 0 0 379.1 120.5L407.6 112.9L407.4 112.1zM396.1 119.5A1.80 1.80 0 0 0 396.4 123.0L431.3 117.9L431.2 117.1zM304.3 164.6A1.80 1.80 0 0 0 305.7 167.9L330.1 156.6L329.9 155.9zM324.4 159.5A1.80 1.80 0 0 0 325.6 163.0L350.6 152.9L350.4 152.1zM347.1 147.8A1.80 1.80 0 0 0 347.9 151.2L371.3 144.1L371.2 143.4zM276.2 181.4A1.80 1.80 0 0 0 277.8 184.6L302.7 171.6L302.3 170.9zM299.4 180.8A1.80 1.80 0 0 0 300.6 184.2L325.1 173.6L324.9 172.9zM261.8 200.8A1.80 1.80 0 0 0 263.2 204.2L300.2 186.6L299.8 185.9zM295.6 188.8A1.80 1.80 0 0 0 296.9 192.2L343.9 172.9L343.6 172.1zM298.2 197.8A1.80 1.80 0 0 0 299.3 201.2L322.6 191.6L322.4 190.9zM247.2 218.9A1.80 1.80 0 0 0 248.8 222.1L272.7 208.4L272.3 207.6zM257.3 219.6A1.80 1.80 0 0 0 258.7 222.9L282.7 211.1L282.3 210.4zM274.3 218.3A1.80 1.80 0 0 0 275.7 221.7L307.6 207.4L307.4 206.6zM298.2 209.5A1.80 1.80 0 0 0 299.3 213.0L321.4 204.1L321.1 203.4zM259.3 230.8A1.80 1.80 0 0 0 260.7 234.2L291.4 219.9L291.1 219.1zM252.2 238.9A1.80 1.80 0 0 0 253.8 242.1L275.2 230.4L274.8 229.6zM272.3 234.6A1.80 1.80 0 0 0 273.7 237.9L295.2 227.4L294.8 226.6zM286.9 254.6A1.80 1.80 0 0 0 288.1 257.9L305.1 249.9L304.9 249.1zM315.8 214.5A1.80 1.80 0 0 0 316.7 218.0L353.8 207.9L353.7 207.1zM336.0 221.2A1.80 1.80 0 0 0 336.5 224.8L356.3 220.9L356.2 220.1zM337.2 234.5A1.80 1.80 0 0 0 337.8 238.0L355.1 234.1L354.9 233.4zM347.4 236.2A1.80 1.80 0 0 0 347.6 239.8L366.3 237.4L366.2 236.6zM348.3 165.3A1.80 1.80 0 0 0 349.2 168.7L372.6 161.6L372.4 160.9zM359.7 165.2A1.80 1.80 0 0 0 360.3 168.8L382.6 163.4L382.4 162.6zM361.1 171.2A1.80 1.80 0 0 0 361.4 174.8L385.0 171.1L385.0 170.4zM379.8 155.7A1.80 1.80 0 0 0 380.2 159.3L403.8 155.9L403.7 155.1zM396.3 163.2A1.80 1.80 0 0 0 396.2 166.8L417.5 165.9L417.5 165.1zM410.2 172.0A1.80 1.80 0 0 0 409.8 175.5L430.0 176.1L430.0 175.4zM403.9 143.2A1.80 1.80 0 0 0 403.6 146.8L421.2 146.6L421.3 145.9zM417.7 145.7A1.80 1.80 0 0 0 417.3 149.3L437.5 150.4L437.5 149.6zM412.6 135.7A1.80 1.80 0 0 0 412.4 139.3L433.7 139.1L433.8 138.4zM384.4 186.2A1.80 1.80 0 0 0 384.6 189.8L403.8 187.4L403.7 186.6zM399.6 179.5A1.80 1.80 0 0 0 399.4 183.0L418.7 182.9L418.8 182.1zM398.8 184.4A1.80 1.80 0 0 0 398.8 188.1L417.5 186.7L417.5 185.8zM424.1 179.5A1.80 1.80 0 0 0 423.4 183.0L442.4 185.4L442.6 184.6zM390.7 192.7A1.80 1.80 0 0 0 390.3 196.3L410.0 196.6L410.0 195.9zM394.0 202.0A1.80 1.80 0 0 0 393.5 205.5L412.4 206.6L412.6 205.9zM354.8 199.5A1.80 1.80 0 0 0 355.2 203.0L375.0 199.9L375.0 199.1zM362.4 209.0A1.80 1.80 0 0 0 362.6 212.5L382.5 210.4L382.5 209.6zM371.3 222.5A1.80 1.80 0 0 0 371.2 226.0L391.2 225.4L391.3 224.6zM386.5 215.7A1.80 1.80 0 0 0 386.0 219.3L406.2 220.9L406.3 220.1zM425.5 200.8A1.80 1.80 0 0 0 424.5 204.2L442.4 207.9L442.6 207.1zM438.1 208.3A1.80 1.80 0 0 0 436.9 211.7L454.9 216.6L455.1 215.9zM432.1 240.9A1.80 1.80 0 0 0 430.4 244.1L449.8 252.9L450.2 252.1zM434.6 252.1A1.80 1.80 0 0 0 432.9 255.4L446.1 260.4L446.4 259.6zM446.7 163.7A1.80 1.80 0 0 0 445.8 167.3L459.9 169.1L460.1 168.4zM445.5 174.0A1.80 1.80 0 0 0 444.5 177.5L459.9 180.4L460.1 179.6zM446.9 195.8A1.80 1.80 0 0 0 445.6 199.2L459.9 202.9L460.1 202.1zM362.7 255.7A1.80 1.80 0 0 0 362.3 259.3L375.0 259.1L375.0 258.4zM455.4 234.6A1.65 1.65 0 0 0 454.6 237.9L459.9 237.9L460.1 237.1zM460.4 105.7A1.80 1.80 0 0 0 459.6 109.3L474.9 110.9L475.1 110.1zM476.0 116.3A1.80 1.80 0 0 0 475.0 119.7L491.1 123.4L491.4 122.6zM506.8 111.3A1.80 1.80 0 0 0 505.7 114.7L526.9 119.9L527.1 119.1zM490.1 122.0A1.80 1.80 0 0 0 488.9 125.5L509.9 130.9L510.1 130.1zM461.6 135.7A1.80 1.80 0 0 0 460.9 139.3L482.4 142.4L482.6 141.6zM486.8 136.3A1.80 1.80 0 0 0 485.7 139.7L506.1 144.9L506.4 144.1zM500.5 133.3A1.80 1.80 0 0 0 499.5 136.7L519.4 141.6L519.6 140.9zM500.6 145.8A1.80 1.80 0 0 0 499.4 149.2L518.6 154.9L518.9 154.1zM545.3 108.2A1.80 1.80 0 0 0 544.7 111.8L574.9 115.9L575.1 115.1zM546.7 111.3A1.80 1.80 0 0 0 545.8 114.7L566.2 118.4L566.3 117.6zM553.0 122.8A1.80 1.80 0 0 0 552.0 126.2L571.9 130.9L572.1 130.1zM553.7 144.1A1.80 1.80 0 0 0 552.3 147.4L569.8 153.4L570.2 152.6zM595.4 118.2A1.80 1.80 0 0 0 594.6 121.8L612.9 124.1L613.1 123.4zM591.7 125.8A1.80 1.80 0 0 0 590.8 129.2L608.6 132.9L608.9 132.1zM502.6 157.1A1.80 1.80 0 0 0 501.4 160.4L521.1 165.9L521.4 165.1zM508.1 155.3A1.80 1.80 0 0 0 506.9 158.7L525.4 164.1L525.6 163.4zM535.3 159.7A1.80 1.80 0 0 0 533.7 162.8L551.1 170.4L551.4 169.6zM524.6 170.4A1.80 1.80 0 0 0 522.9 173.6L539.8 181.6L540.2 180.9zM506.3 174.6A1.80 1.80 0 0 0 504.7 177.9L522.3 184.9L522.7 184.1zM470.5 172.0A1.80 1.80 0 0 0 469.5 175.5L487.9 179.9L488.1 179.1zM460.7 165.8A1.80 1.80 0 0 0 459.3 169.2L466.1 170.4L466.4 169.6zM465.1 183.3A1.80 1.80 0 0 0 463.9 186.7L482.4 191.6L482.6 190.9zM486.9 190.8A1.80 1.80 0 0 0 485.6 194.2L501.1 199.1L501.4 198.4zM503.8 191.4A1.80 1.80 0 0 0 502.2 194.6L521.1 202.4L521.4 201.6zM501.0 197.2A1.80 1.80 0 0 0 499.0 200.3L516.0 209.8L516.5 209.2zM466.9 195.8A1.80 1.80 0 0 0 465.6 199.2L482.4 204.1L482.6 203.4zM460.7 197.1A1.80 1.80 0 0 0 459.3 200.4L474.8 205.4L475.2 204.6zM463.1 203.3A1.80 1.80 0 0 0 461.9 206.7L478.6 211.6L478.9 210.9zM490.5 211.5A1.80 1.80 0 0 0 488.5 214.5L503.5 222.8L504.0 222.2zM494.8 209.8A1.80 1.80 0 0 0 492.7 212.7L507.3 221.6L507.7 220.9zM466.4 222.7A1.80 1.80 0 0 0 464.6 225.8L480.3 232.9L480.7 232.1zM491.6 221.6A1.80 1.80 0 0 0 489.4 224.4L502.8 232.8L503.2 232.2zM496.1 228.6A1.80 1.80 0 0 0 493.9 231.4L509.8 242.3L510.2 241.7zM468.4 233.4A1.80 1.80 0 0 0 466.6 236.6L481.0 243.3L481.5 242.7zM471.1 241.1A1.80 1.80 0 0 0 468.9 243.9L486.0 255.8L486.5 255.2zM461.0 236.0A1.80 1.80 0 0 0 459.0 239.0L469.8 244.1L470.2 243.4zM552.6 181.3A1.80 1.80 0 0 0 549.9 183.7L562.2 195.3L562.8 194.7zM554.1 194.1A1.80 1.80 0 0 0 550.9 195.9L560.9 210.2L561.6 209.8zM539.6 206.6A1.80 1.80 0 0 0 536.4 208.4L547.7 224.7L548.3 224.3zM572.9 191.2A1.80 1.80 0 0 0 569.6 192.8L576.6 204.7L577.4 204.3zM576.4 183.4A1.80 1.80 0 0 0 573.6 185.6L582.2 194.7L582.8 194.3zM599.3 166.6A1.80 1.80 0 0 0 597.2 169.4L609.8 177.3L610.2 176.7zM645.7 116.3A1.80 1.80 0 0 0 644.3 119.7L661.8 125.4L662.2 124.6zM642.3 129.1A1.80 1.80 0 0 0 640.2 131.9L651.0 138.3L651.5 137.7zM642.6 138.8A1.80 1.80 0 0 0 639.9 141.2L649.7 149.8L650.3 149.2zM664.4 130.9A1.80 1.80 0 0 0 661.6 133.1L669.2 140.7L669.8 140.3zM681.0 112.3A1.80 1.80 0 0 0 679.0 115.2L687.3 119.1L687.7 118.4zM653.0 104.5A1.80 1.80 0 0 0 652.0 108.0L671.1 111.6L671.4 110.9zM707.6 108.3A1.80 1.80 0 0 0 704.9 110.7L711.7 116.5L712.3 116.0zM718.7 120.5A1.80 1.80 0 0 0 715.3 122.0L720.1 129.7L720.9 129.3zM736.8 128.4A1.80 1.80 0 0 0 733.2 129.1L737.1 140.1L737.9 139.9zM755.5 139.8A1.80 1.80 0 0 0 752.0 140.2L755.4 155.1L756.1 154.9zM631.5 153.5A1.80 1.80 0 0 0 628.5 155.5L637.7 166.5L638.3 166.0zM641.1 157.3A1.80 1.80 0 0 0 637.9 158.7L645.1 171.4L645.9 171.1zM617.0 177.8A1.80 1.80 0 0 0 614.0 179.7L623.4 192.7L624.1 192.3zM612.3 188.6A1.80 1.80 0 0 0 609.2 190.4L618.4 203.2L619.1 202.8zM633.0 177.8A1.80 1.80 0 0 0 629.5 178.2L633.4 196.3L634.1 196.2zM637.5 174.3A1.80 1.80 0 0 0 634.0 174.7L637.1 193.8L637.9 193.7zM648.0 185.7A1.80 1.80 0 0 0 644.5 185.3L644.1 205.0L644.9 205.0zM642.3 193.3A1.80 1.80 0 0 0 638.7 192.7L636.6 215.4L637.4 215.6zM661.7 190.7A1.80 1.80 0 0 0 658.3 189.3L652.1 207.3L652.9 207.7zM676.0 160.9A1.80 1.80 0 0 0 672.5 160.1L669.1 181.2L669.9 181.3zM688.5 183.4A1.80 1.80 0 0 0 685.5 181.6L680.9 191.8L681.6 192.2zM708.0 167.4A1.80 1.80 0 0 0 704.5 166.6L704.1 174.4L704.9 174.6zM718.8 160.9A1.80 1.80 0 0 0 715.2 160.6L715.9 169.5L716.6 169.5zM733.8 175.9A1.80 1.80 0 0 0 730.2 175.6L730.9 184.5L731.6 184.5zM753.0 166.8A1.80 1.80 0 0 0 749.5 167.2L752.1 180.5L752.9 180.5zM710.4 184.4A1.80 1.80 0 0 0 707.1 183.1L705.9 190.4L706.6 190.6zM712.9 187.7A1.80 1.80 0 0 0 709.6 186.3L708.4 192.8L709.1 193.2zM715.2 194.8A1.80 1.80 0 0 0 712.3 192.7L709.7 198.5L710.3 199.0zM671.0 216.1A1.80 1.80 0 0 0 668.0 213.9L659.7 227.8L660.3 228.2zM676.5 229.7A1.80 1.80 0 0 0 673.5 227.8L669.2 236.8L669.8 237.2zM687.2 237.8A1.65 1.65 0 0 0 684.3 236.2L682.9 241.0L683.6 241.5zM716.3 223.9A1.65 1.65 0 0 0 713.7 226.1L717.2 228.3L717.8 227.7zM618.0 217.9A1.80 1.80 0 0 0 614.5 217.1L612.6 233.7L613.4 233.8zM624.2 224.3A1.80 1.80 0 0 0 620.8 223.2L614.6 246.9L615.4 247.1zM605.5 243.2A1.80 1.80 0 0 0 602.0 242.8L601.6 263.0L602.4 263.0zM627.9 245.2A1.80 1.80 0 0 0 624.6 243.8L618.4 262.8L619.1 263.2zM589.5 233.6A1.80 1.80 0 0 0 586.5 235.4L594.2 245.2L594.8 244.8zM578.7 246.4A1.80 1.80 0 0 0 575.3 247.6L582.1 262.6L582.9 262.4zM548.6 231.8A1.80 1.80 0 0 0 545.4 233.2L554.6 250.2L555.4 249.8zM549.2 241.3A1.80 1.80 0 0 0 545.8 242.7L554.1 260.1L554.9 259.9zM557.9 243.1A1.80 1.80 0 0 0 554.6 244.4L562.6 261.4L563.4 261.1zM528.6 253.7A1.80 1.80 0 0 0 525.4 255.3L530.9 263.2L531.6 262.8zM534.1 255.4A1.80 1.80 0 0 0 530.9 257.1L535.9 263.2L536.6 262.8zM668.8 244.7A1.80 1.80 0 0 0 665.2 245.3L667.6 251.3L668.4 251.2zM674.6 250.2A1.65 1.65 0 0 0 671.4 251.3L674.6 256.4L675.4 256.1zM683.6 253.6A1.80 1.80 0 0 0 680.4 255.4L684.6 260.2L685.4 259.8zM702.3 256.7A1.65 1.65 0 0 0 700.2 254.3L697.2 258.4L697.8 259.1zM654.0 259.5A1.65 1.65 0 0 0 651.0 258.0L650.1 262.8L650.9 263.2zM797.3 110.0A1.80 1.80 0 0 0 793.7 110.0L794.6 131.2L795.4 131.3zM825.5 114.7A1.80 1.80 0 0 0 822.0 114.3L820.1 138.7L820.9 138.8zM774.3 141.1A1.80 1.80 0 0 0 770.7 141.4L773.4 160.0L774.1 160.0zM768.8 162.8A1.80 1.80 0 0 0 765.2 163.2L768.4 181.3L769.1 181.2zM778.0 171.8A1.80 1.80 0 0 0 774.5 172.2L777.6 192.5L778.4 192.5zM792.3 192.0A1.80 1.80 0 0 0 788.7 192.0L790.1 217.5L790.9 217.5zM823.8 213.2A1.80 1.80 0 0 0 820.2 212.8L817.6 242.4L818.4 242.6zM771.8 228.6A1.80 1.80 0 0 0 768.2 228.9L771.6 248.8L772.4 248.7zM779.3 232.3A1.80 1.80 0 0 0 775.7 232.7L779.6 255.0L780.4 255.0zM783.8 239.4A1.80 1.80 0 0 0 780.2 239.6L782.6 262.5L783.4 262.5zM765.5 239.7A1.80 1.80 0 0 0 762.0 240.3L765.9 256.3L766.6 256.2zM858.0 126.7A1.80 1.80 0 0 0 854.5 125.8L849.6 149.9L850.4 150.1zM849.7 139.9A1.80 1.80 0 0 0 846.3 139.1L840.9 167.4L841.6 167.6zM855.5 146.7A1.80 1.80 0 0 0 852.0 145.8L848.4 166.2L849.1 166.3zM861.7 144.2A1.80 1.80 0 0 0 858.3 143.3L853.4 167.4L854.1 167.6zM841.3 164.1A1.80 1.80 0 0 0 837.7 163.4L833.4 189.9L834.1 190.1zM844.3 162.8A1.80 1.80 0 0 0 840.7 162.2L837.6 187.4L838.4 187.6zM854.2 168.0A1.80 1.80 0 0 0 850.8 167.0L844.6 193.6L845.4 193.9zM848.8 195.9A1.80 1.80 0 0 0 845.2 195.1L840.9 219.9L841.6 220.1zM855.5 200.5A1.80 1.80 0 0 0 852.0 199.5L845.9 226.1L846.6 226.4zM845.5 214.2A1.80 1.80 0 0 0 842.0 213.3L836.6 241.9L837.4 242.1zM867.9 195.6A1.80 1.80 0 0 0 864.6 194.4L856.6 219.9L857.4 220.1zM877.2 116.0A1.80 1.80 0 0 0 873.8 115.0L868.4 137.4L869.1 137.6zM909.2 108.2A1.80 1.80 0 0 0 905.8 106.8L898.4 128.6L899.1 128.9zM919.1 114.5A1.80 1.80 0 0 0 915.9 113.0L908.4 132.3L909.1 132.7zM903.6 132.7A1.80 1.80 0 0 0 900.4 131.3L892.6 152.3L893.4 152.7zM891.7 140.1A1.80 1.80 0 0 0 888.3 138.9L882.1 161.1L882.9 161.4zM884.2 145.7A1.80 1.80 0 0 0 880.8 144.3L873.4 166.1L874.1 166.4zM879.7 150.1A1.80 1.80 0 0 0 876.3 148.9L869.6 172.4L870.4 172.6zM939.5 132.3A1.80 1.80 0 0 0 936.5 130.2L926.7 146.8L927.3 147.2zM964.0 114.7A1.80 1.80 0 0 0 961.0 112.8L952.2 128.5L952.8 129.0zM953.8 147.5A1.80 1.80 0 0 0 951.2 145.0L934.7 163.5L935.3 164.0zM955.7 155.1A1.80 1.80 0 0 0 953.3 152.4L937.7 167.2L938.3 167.8zM939.3 166.8A1.80 1.80 0 0 0 936.7 164.2L924.2 178.5L924.8 179.0zM914.0 168.5A1.80 1.80 0 0 0 911.0 166.5L899.7 186.0L900.3 186.5zM902.1 177.1A1.80 1.80 0 0 0 898.9 175.4L888.4 197.3L889.1 197.7zM890.3 197.1A1.80 1.80 0 0 0 887.2 195.4L873.4 223.6L874.1 223.9zM894.1 208.9A1.80 1.80 0 0 0 890.9 207.1L880.2 228.5L880.8 229.0zM900.3 204.7A1.80 1.80 0 0 0 897.2 202.8L884.7 224.8L885.3 225.2zM875.4 228.2A1.80 1.80 0 0 0 872.1 226.8L862.1 252.8L862.9 253.2zM894.1 242.1A1.80 1.80 0 0 0 890.9 240.4L879.7 262.8L880.3 263.2zM921.4 189.8A1.80 1.80 0 0 0 918.6 187.7L907.7 204.8L908.3 205.2zM929.3 188.2A1.80 1.80 0 0 0 926.7 185.8L912.7 202.7L913.3 203.3zM948.6 186.4A1.80 1.80 0 0 0 946.4 183.6L929.8 198.4L930.2 199.1zM969.6 192.1A1.80 1.80 0 0 0 967.9 188.9L951.1 199.6L951.4 200.4zM968.8 213.6A1.80 1.80 0 0 0 967.2 210.4L949.3 220.9L949.7 221.6zM948.0 226.0A1.80 1.80 0 0 0 946.0 223.0L929.3 236.7L929.7 237.3zM929.3 229.3A1.80 1.80 0 0 0 926.7 226.7L914.7 241.0L915.3 241.5zM917.6 242.4A1.80 1.80 0 0 0 914.9 240.1L902.2 257.2L902.8 257.8zM954.7 244.0A1.80 1.80 0 0 0 952.8 241.0L937.3 252.2L937.7 252.8zM953.4 249.1A1.80 1.80 0 0 0 951.6 245.9L936.1 255.9L936.4 256.6zM1003.4 124.1A1.80 1.80 0 0 0 1000.6 121.9L989.7 137.2L990.3 137.8zM1003.6 139.4A1.80 1.80 0 0 0 1001.4 136.6L982.3 153.4L982.7 154.1zM1018.8 147.8A1.80 1.80 0 0 0 1017.2 144.7L1006.1 152.1L1006.4 152.9zM1020.6 154.7A1.80 1.80 0 0 0 1019.4 151.3L1006.1 157.6L1006.4 158.4zM1034.2 164.7A1.80 1.80 0 0 0 1033.3 161.3L1015.4 167.1L1015.6 167.9zM1014.2 184.2A1.80 1.80 0 0 0 1013.3 180.8L992.4 187.6L992.6 188.4zM994.3 203.7A1.80 1.80 0 0 0 993.2 200.3L973.6 208.4L973.9 209.1zM1010.4 206.8A1.80 1.80 0 0 0 1009.6 203.2L991.2 208.4L991.3 209.1zM1001.7 211.8A1.80 1.80 0 0 0 1000.8 208.2L981.9 214.1L982.1 214.9zM1049.0 195.5A1.80 1.80 0 0 0 1048.5 192.0L1013.7 197.6L1013.8 198.4zM1060.2 179.3A1.80 1.80 0 0 0 1059.8 175.7L1039.5 179.1L1039.5 179.9zM995.9 232.3A1.80 1.80 0 0 0 995.1 228.7L979.4 233.4L979.6 234.1zM1015.5 234.3A1.80 1.80 0 0 0 1015.5 230.7L1000.0 232.1L1000.0 232.9zM1026.7 248.6A1.80 1.80 0 0 0 1028.3 245.4L1018.2 241.6L1017.8 242.4zM1060.9 136.5A1.80 1.80 0 0 0 1059.1 133.5L1052.3 139.2L1052.7 139.8zM1060.5 156.2A1.80 1.80 0 0 0 1059.5 152.8L1051.1 156.6L1051.4 157.4zM1051.3 245.3A1.80 1.80 0 0 0 1047.7 244.7L1047.1 256.2L1047.9 256.3zM1054.2 254.2A1.80 1.80 0 0 0 1050.8 253.3L1049.6 262.9L1050.4 263.1zM1059.5 221.2A1.80 1.80 0 0 0 1060.5 217.8L1051.4 216.6L1051.1 217.4zM1077.1 115.1A1.80 1.80 0 0 0 1076.1 111.7L1066.8 116.0L1067.0 116.8zM1089.8 116.0A1.80 1.80 0 0 0 1089.1 112.5L1079.3 116.0L1079.5 116.8zM1107.3 115.1A1.80 1.80 0 0 0 1106.7 111.6L1090.2 116.0L1090.4 116.8zM1104.0 123.2A1.80 1.80 0 0 0 1103.4 119.6L1093.9 122.7L1094.0 123.5zM1073.7 145.0A1.80 1.80 0 0 0 1071.8 141.9L1062.0 149.5L1062.4 150.2zM1064.9 154.9A1.80 1.80 0 0 0 1063.9 151.4L1050.1 156.8L1050.3 157.6zM1073.5 163.3A1.80 1.80 0 0 0 1072.9 159.8L1056.5 164.0L1056.6 164.8zM1071.1 180.1A1.80 1.80 0 0 0 1071.1 176.5L1039.3 178.2L1039.3 179.0zM1070.3 181.2A1.80 1.80 0 0 0 1070.1 177.6L1048.5 180.2L1048.5 181.0zM1088.3 195.1A1.80 1.80 0 0 0 1088.3 191.5L1066.1 192.9L1066.1 193.7zM1106.6 189.6A1.80 1.80 0 0 0 1106.8 186.0L1083.6 186.6L1083.6 187.4zM1098.8 207.0A1.80 1.80 0 0 0 1100.2 203.7L1084.6 198.6L1084.3 199.4zM1145.1 122.2A1.80 1.80 0 0 0 1145.8 118.6L1133.9 117.7L1133.7 118.5zM1129.6 143.3A1.80 1.80 0 0 0 1129.6 139.7L1117.0 141.4L1117.1 142.2zM1132.1 148.6A1.80 1.80 0 0 0 1132.1 145.0L1119.6 146.4L1119.6 147.2zM1135.8 169.5A1.80 1.80 0 0 0 1135.8 165.9L1122.1 167.3L1122.1 168.1zM1160.2 153.9A1.80 1.80 0 0 0 1160.9 150.4L1150.2 149.8L1150.1 150.6zM1165.5 175.7A1.80 1.80 0 0 0 1166.3 172.2L1157.6 171.5L1157.4 172.3zM1166.6 129.9A1.80 1.80 0 0 0 1166.2 126.3L1157.5 128.9L1157.6 129.7zM1177.0 114.2A1.80 1.80 0 0 0 1175.8 110.8L1169.1 114.7L1169.4 115.4zM1182.4 126.6A1.80 1.80 0 0 0 1180.4 123.6L1175.7 128.4L1176.1 129.1zM1182.9 133.0A1.80 1.80 0 0 0 1181.0 129.9L1176.2 134.4L1176.6 135.1zM1176.5 146.9A1.80 1.80 0 0 0 1176.3 143.4L1169.2 145.1L1169.2 145.9zM1186.1 154.1A1.65 1.65 0 0 0 1184.4 151.3L1180.4 155.2L1180.8 155.9zM1195.1 179.0A1.65 1.65 0 0 0 1192.2 177.6L1191.9 180.9L1192.7 181.3zM1191.4 189.3A1.65 1.65 0 0 0 1189.9 186.3L1185.4 189.9L1185.8 190.7zM1094.5 224.3A1.80 1.80 0 0 0 1098.0 223.2L1097.5 221.8L1096.8 219.8L1095.9 217.5L1094.8 215.7L1093.6 214.3L1092.2 213.3L1091.1 212.7L1090.3 212.2L1089.7 212.8L1090.3 213.5L1091.2 214.5L1092.1 215.6L1092.7 216.8L1093.2 218.5L1093.7 220.7L1094.1 222.8zM1065.2 245.2A1.80 1.80 0 0 0 1068.8 244.8L1068.5 242.4L1068.0 239.0L1067.4 235.3L1066.5 232.0L1065.4 229.6L1064.1 227.7L1062.6 226.0L1060.8 224.2L1058.4 222.1L1055.4 219.9L1052.7 218.0L1050.7 216.7L1050.3 217.3L1052.0 218.9L1054.5 221.1L1057.1 223.6L1059.2 225.8L1060.7 227.6L1061.8 229.2L1062.8 230.9L1063.5 233.0L1064.1 235.9L1064.6 239.5L1064.9 242.8zM1159.8 218.0A1.80 1.80 0 0 0 1160.2 214.5L1153.8 215.1L1153.7 215.9zM1161.8 222.2A1.80 1.80 0 0 0 1160.7 218.8L1153.6 222.6L1153.9 223.4zM1158.2 231.2A1.80 1.80 0 0 0 1156.8 227.8L1151.1 231.6L1151.4 232.4zM1197.9 211.7A1.80 1.80 0 0 0 1197.1 208.3L1179.4 214.1L1179.6 214.9zM1094.2 250.2A1.80 1.80 0 0 0 1090.8 248.8L1088.4 258.6L1089.1 258.9zM1100.2 269.8A1.80 1.80 0 0 0 1097.3 267.7L1094.2 274.3L1094.8 274.7zM1076.5 259.8A1.80 1.80 0 0 0 1073.5 257.7L1064.7 272.3L1065.3 272.7zM1073.7 280.1A1.80 1.80 0 0 0 1071.3 277.4L1064.7 284.7L1065.3 285.3zM1064.6 287.8A1.80 1.80 0 0 0 1062.9 284.7L1054.8 290.9L1055.2 291.6zM198.6 278.4A1.80 1.80 0 0 0 200.4 281.6L222.7 267.1L222.3 266.4zM233.5 279.0A1.80 1.80 0 0 0 235.5 282.0L257.7 265.8L257.3 265.2zM267.0 266.8A1.80 1.80 0 0 0 268.0 270.2L285.1 263.4L284.9 262.6zM281.9 268.3A1.80 1.80 0 0 0 283.1 271.7L297.6 264.6L297.4 263.9zM263.5 301.5A1.80 1.80 0 0 0 265.5 304.5L272.7 297.8L272.3 297.2zM277.8 300.2A1.80 1.80 0 0 0 279.7 303.3L285.2 298.3L284.8 297.7zM293.0 293.9A1.80 1.80 0 0 0 294.5 297.1L300.7 292.9L300.3 292.1zM310.8 292.5A1.80 1.80 0 0 0 311.7 296.0L317.6 292.9L317.4 292.1zM295.4 310.3A1.65 1.65 0 0 0 297.1 313.2L300.7 309.6L300.3 308.9zM336.6 276.2A1.80 1.80 0 0 0 335.9 279.8L342.4 279.6L342.6 278.9zM345.9 280.1A1.65 1.65 0 0 0 345.1 283.4L350.4 283.4L350.6 282.6zM358.0 279.4A1.65 1.65 0 0 0 357.0 282.6L362.4 282.9L362.6 282.1zM373.5 265.8A1.80 1.80 0 0 0 372.5 269.2L381.1 270.4L381.4 269.6zM405.8 268.4A1.80 1.80 0 0 0 404.2 271.6L412.3 273.9L412.7 273.1zM431.0 262.8A1.80 1.80 0 0 0 429.0 265.7L437.3 269.6L437.7 268.9zM442.3 267.8A1.80 1.80 0 0 0 440.2 270.7L448.5 275.3L449.0 274.7zM455.2 278.2A1.80 1.80 0 0 0 452.3 280.3L458.4 286.2L459.1 285.8zM408.4 282.6A1.65 1.65 0 0 0 405.6 284.4L409.2 287.7L409.8 287.3zM412.5 283.2A1.65 1.65 0 0 0 410.0 285.3L414.2 288.3L414.8 287.7zM441.0 282.0A1.80 1.80 0 0 0 438.0 284.0L442.7 288.7L443.3 288.3zM379.6 296.0A1.65 1.65 0 0 0 382.9 296.0L381.6 293.0L380.9 293.0zM387.1 292.6A1.65 1.65 0 0 0 390.4 293.4L389.9 290.1L389.1 289.9zM407.8 309.1A1.65 1.65 0 0 0 409.7 311.9L412.7 308.3L412.3 307.7zM426.3 310.6A1.65 1.65 0 0 0 428.7 312.9L430.8 308.8L430.2 308.2zM437.5 315.7A1.65 1.65 0 0 0 440.0 317.8L442.3 313.3L441.7 312.7zM449.9 320.7A1.65 1.65 0 0 0 452.6 322.8L454.8 317.7L454.2 317.3zM342.9 327.0A1.65 1.65 0 0 0 346.1 326.5L344.1 322.4L343.4 322.6zM280.4 330.5A1.65 1.65 0 0 0 283.6 331.5L283.4 327.6L282.6 327.4zM302.4 338.3A1.65 1.65 0 0 0 305.1 340.2L305.3 337.7L304.7 337.3zM322.2 353.7A1.65 1.65 0 0 0 325.3 354.8L325.4 351.1L324.6 350.9zM316.2 357.5A1.65 1.65 0 0 0 318.8 359.5L319.1 357.0L318.4 356.5zM309.1 370.4A1.65 1.65 0 0 0 310.9 373.1L312.7 370.3L312.3 369.7zM163.6 330.9A1.65 1.65 0 0 0 166.4 332.6L167.3 328.7L166.7 328.3zM173.7 345.1A1.80 1.80 0 0 0 177.3 345.9L178.4 334.3L177.6 334.2zM203.3 336.3A1.80 1.80 0 0 0 206.7 337.2L207.4 328.6L206.6 328.4zM202.2 346.0A1.65 1.65 0 0 0 205.3 345.0L202.4 340.4L201.6 340.6zM231.5 341.6A1.65 1.65 0 0 0 234.5 340.4L231.6 336.6L230.9 336.9zM193.6 360.3A1.80 1.80 0 0 0 196.4 358.2L191.6 354.0L190.9 354.5zM261.0 346.3A1.65 1.65 0 0 0 264.0 344.7L260.9 341.6L260.1 341.9zM243.7 358.6A1.65 1.65 0 0 0 246.3 356.4L241.6 352.7L240.9 353.3zM253.3 355.4A1.65 1.65 0 0 0 255.7 353.1L250.8 349.7L250.2 350.3zM236.3 367.4A1.80 1.80 0 0 0 238.7 364.6L232.8 361.4L232.2 362.1zM261.7 368.0A1.80 1.80 0 0 0 264.3 365.5L258.3 361.5L257.7 362.0zM284.0 353.2A1.65 1.65 0 0 0 287.0 351.8L284.1 348.3L283.4 348.7zM290.7 366.0A1.65 1.65 0 0 0 293.3 364.0L289.1 360.7L288.4 361.3zM215.3 374.3A1.65 1.65 0 0 0 217.2 371.7L212.2 369.7L211.8 370.3zM256.6 381.2A1.80 1.80 0 0 0 259.4 378.8L254.1 374.7L253.4 375.3zM278.1 383.6A1.80 1.80 0 0 0 280.9 381.4L275.8 377.3L275.2 377.7zM292.4 380.2A1.65 1.65 0 0 0 295.1 378.3L291.6 375.3L290.9 375.7zM171.3 377.4A1.80 1.80 0 0 0 174.7 376.1L170.9 370.4L170.1 370.6zM182.8 391.0A1.65 1.65 0 0 0 179.7 390.0L179.6 394.1L180.4 394.4zM254.7 394.7A1.65 1.65 0 0 0 257.8 393.8L255.4 389.9L254.6 390.1zM186.4 406.6A1.80 1.80 0 0 0 188.6 409.4L194.0 403.3L193.5 402.7zM198.1 406.3A1.80 1.80 0 0 0 199.4 409.7L206.4 405.4L206.1 404.6zM216.2 401.1A1.65 1.65 0 0 0 217.8 403.9L221.5 400.3L221.0 399.7zM167.7 419.5A1.80 1.80 0 0 0 169.8 422.5L178.2 414.6L177.8 413.9zM286.6 398.9A1.80 1.80 0 0 0 289.4 401.1L294.1 393.3L293.4 392.7zM281.1 419.3A1.80 1.80 0 0 0 283.9 421.7L296.6 404.5L295.9 404.0zM301.5 406.5A1.80 1.80 0 0 0 303.5 409.5L306.7 407.4L311.4 404.3L316.3 401.0L320.5 398.5L323.8 397.2L326.8 396.3L329.4 395.8L331.3 395.4L331.2 394.6L329.3 394.7L326.6 394.9L323.3 395.4L319.5 396.5L315.0 398.6L309.7 401.5L304.8 404.4zM307.0 403.8A1.80 1.80 0 0 0 308.0 407.2L330.1 399.6L329.9 398.9zM343.2 417.2A1.80 1.80 0 0 0 345.8 419.8L350.8 412.8L350.2 412.2zM353.2 381.0A1.65 1.65 0 0 0 355.8 379.0L352.3 376.5L351.7 377.0zM352.1 393.3A1.80 1.80 0 0 0 353.9 390.2L347.7 388.2L347.3 388.8zM371.3 388.8A1.80 1.80 0 0 0 373.7 386.2L367.8 382.7L367.2 383.3zM372.7 395.7A1.80 1.80 0 0 0 374.8 392.8L368.2 389.7L367.8 390.3zM383.8 390.6A1.80 1.80 0 0 0 386.2 387.9L380.3 384.7L379.7 385.3zM385.8 398.1A1.80 1.80 0 0 0 388.2 395.4L381.5 391.4L381.0 392.1zM385.4 341.2A1.80 1.80 0 0 0 388.6 339.8L384.9 334.8L384.1 335.2zM391.4 330.8A1.65 1.65 0 0 0 394.6 330.2L392.4 325.4L391.6 325.6zM397.9 336.1A1.65 1.65 0 0 0 401.1 334.9L397.9 329.9L397.1 330.1zM398.0 347.5A1.80 1.80 0 0 0 397.0 351.0L409.9 353.4L410.1 352.6zM400.6 345.1A1.80 1.80 0 0 0 399.4 348.4L411.1 351.4L411.4 350.6zM431.4 360.0A1.80 1.80 0 0 0 431.1 363.5L445.0 363.4L445.0 362.6zM429.4 370.0A1.80 1.80 0 0 0 429.6 373.5L442.5 371.4L442.5 370.6zM447.0 407.7A1.80 1.80 0 0 0 450.5 408.3L450.4 401.1L449.6 400.9zM433.0 403.5A1.65 1.65 0 0 0 434.5 406.5L437.7 403.4L437.3 402.6zM409.1 403.7A1.80 1.80 0 0 0 408.4 407.3L418.7 407.9L418.8 407.1zM394.2 405.0A1.80 1.80 0 0 0 393.3 408.5L407.4 410.9L407.6 410.1zM383.0 406.8A1.80 1.80 0 0 0 382.0 410.2L394.9 412.1L395.1 411.4zM472.1 273.4A1.80 1.80 0 0 0 468.9 275.1L475.1 283.7L475.9 283.3zM476.6 273.4A1.80 1.80 0 0 0 473.4 275.1L479.6 284.4L480.4 284.1zM480.3 267.6A1.80 1.80 0 0 0 477.2 269.4L484.2 278.7L484.8 278.3zM483.6 265.1A1.80 1.80 0 0 0 480.4 266.9L487.7 276.9L488.3 276.6zM498.7 271.3A1.80 1.80 0 0 0 495.3 272.2L502.1 291.9L502.9 291.6zM533.7 262.4A1.80 1.80 0 0 0 530.3 263.6L539.6 285.1L540.4 284.9zM549.2 262.5A1.80 1.80 0 0 0 545.8 263.5L552.1 280.6L552.9 280.4zM578.8 269.2A1.80 1.80 0 0 0 575.2 269.3L577.1 289.3L577.9 289.2zM583.8 276.1A1.80 1.80 0 0 0 580.2 275.9L580.9 298.0L581.6 298.0zM621.3 264.6A1.80 1.80 0 0 0 617.7 263.9L615.1 286.7L615.9 286.8zM624.3 265.8A1.80 1.80 0 0 0 620.7 265.2L617.6 294.2L618.4 294.3zM531.3 293.7A1.80 1.80 0 0 0 527.7 293.3L527.6 306.7L528.4 306.8zM496.8 302.0A1.80 1.80 0 0 0 493.2 301.5L493.4 312.5L494.1 312.5zM520.5 303.4A1.80 1.80 0 0 0 517.0 302.6L515.9 314.2L516.6 314.3zM501.7 313.1A1.80 1.80 0 0 0 498.3 311.9L495.9 322.9L496.6 323.1zM536.2 309.8A1.80 1.80 0 0 0 532.8 308.7L530.1 322.4L530.9 322.6zM570.5 305.9A1.80 1.80 0 0 0 567.0 305.1L564.1 322.9L564.9 323.1zM584.2 310.4A1.80 1.80 0 0 0 580.8 309.6L577.1 329.9L577.9 330.1zM588.0 318.4A1.80 1.80 0 0 0 584.5 317.6L580.9 337.9L581.6 338.1zM628.7 296.3A1.80 1.80 0 0 0 625.3 297.2L632.1 318.1L632.9 317.9zM621.8 317.0A1.80 1.80 0 0 0 618.2 316.5L617.1 337.5L617.9 337.5zM563.0 325.5A1.80 1.80 0 0 0 559.5 324.5L555.9 340.9L556.6 341.1zM548.6 331.3A1.80 1.80 0 0 0 545.4 329.7L540.1 343.3L540.9 343.7zM499.2 351.6A1.80 1.80 0 0 0 495.8 350.4L492.1 364.1L492.9 364.4zM527.7 349.1A1.80 1.80 0 0 0 524.8 346.9L517.2 359.0L517.8 359.5zM485.5 364.2A1.80 1.80 0 0 0 482.0 364.3L484.1 388.0L484.9 388.0zM551.6 361.8A1.80 1.80 0 0 0 548.4 360.2L543.4 372.8L544.1 373.2zM543.7 371.0A1.80 1.80 0 0 0 540.3 370.0L539.1 379.9L539.9 380.1zM527.6 379.1A1.80 1.80 0 0 0 524.9 376.9L520.2 384.7L520.8 385.3zM541.3 385.3A1.80 1.80 0 0 0 537.7 385.7L540.1 394.3L540.9 394.2zM595.3 341.8A1.80 1.80 0 0 0 592.2 340.2L579.6 366.6L580.4 366.9zM590.4 351.3A1.80 1.80 0 0 0 587.1 349.7L580.1 366.6L580.9 366.9zM611.7 340.0A1.80 1.80 0 0 0 608.3 338.5L601.6 357.8L602.4 358.2zM631.2 340.6A1.80 1.80 0 0 0 627.8 339.4L623.4 355.4L624.1 355.6zM629.5 352.7A1.80 1.80 0 0 0 626.5 350.8L618.4 366.5L619.1 367.0zM647.9 341.3A1.80 1.80 0 0 0 644.6 339.7L639.6 352.8L640.4 353.2zM649.3 323.3A1.80 1.80 0 0 0 645.7 322.7L644.6 336.7L645.4 336.8zM656.3 317.7A1.80 1.80 0 0 0 652.7 317.3L652.6 332.5L653.4 332.5zM662.3 322.6A1.80 1.80 0 0 0 658.7 322.4L659.1 335.5L659.9 335.5zM660.5 303.2A1.80 1.80 0 0 0 657.0 302.8L657.1 313.0L657.9 313.0zM641.0 377.5A1.80 1.80 0 0 0 639.0 374.5L624.8 386.4L625.2 387.1zM641.0 395.8A1.80 1.80 0 0 0 639.0 392.7L621.8 405.2L622.2 405.8zM650.2 403.4A1.80 1.80 0 0 0 648.8 400.1L627.3 411.4L627.7 412.1zM631.0 408.3A1.80 1.80 0 0 0 629.0 405.2L611.8 418.2L612.2 418.8zM662.0 414.1A1.80 1.80 0 0 0 660.5 410.9L637.3 423.9L637.7 424.6zM584.2 392.3A1.80 1.80 0 0 0 580.8 391.2L575.9 411.6L576.6 411.9zM597.1 401.8A1.80 1.80 0 0 0 593.9 400.2L584.6 420.8L585.4 421.2zM577.7 421.7A1.65 1.65 0 0 0 574.8 420.3L573.4 425.8L574.1 426.2zM508.6 406.4A1.65 1.65 0 0 0 505.4 407.1L507.6 411.8L508.4 411.7zM496.2 415.0A1.80 1.80 0 0 0 492.8 416.0L497.1 426.1L497.9 425.9zM711.8 389.7A1.80 1.80 0 0 0 710.7 386.3L673.6 400.1L673.9 400.9zM730.9 389.1A1.80 1.80 0 0 0 729.1 385.9L698.6 404.7L698.9 405.3zM701.0 390.8A1.80 1.80 0 0 0 699.0 387.7L679.8 401.4L680.2 402.1zM760.9 349.6A1.80 1.80 0 0 0 759.1 346.4L703.5 380.2L704.0 380.8zM760.9 354.6A1.80 1.80 0 0 0 759.1 351.4L732.3 367.6L732.7 368.4zM760.8 364.6A1.80 1.80 0 0 0 759.2 361.4L717.3 385.1L717.7 385.9zM760.8 374.6A1.80 1.80 0 0 0 759.2 371.4L737.3 383.9L737.7 384.6zM723.1 422.7A1.80 1.80 0 0 0 721.9 419.3L707.4 425.6L707.6 426.4zM760.7 422.2A1.80 1.80 0 0 0 759.3 418.8L747.4 425.1L747.6 425.9zM686.8 295.2A1.80 1.80 0 0 0 685.7 291.8L675.4 296.4L675.6 297.1zM695.6 294.9A1.80 1.80 0 0 0 693.4 292.1L686.0 299.7L686.5 300.3zM684.4 303.4A1.80 1.80 0 0 0 683.1 300.1L672.9 305.6L673.1 306.4zM697.9 278.5A1.80 1.80 0 0 0 694.6 280.0L700.1 288.2L700.9 287.8zM750.5 277.2A1.80 1.80 0 0 0 747.0 277.8L749.6 285.1L750.4 284.9zM749.1 308.0A1.65 1.65 0 0 0 745.9 307.0L745.9 311.6L746.6 311.9zM669.5 353.1A1.65 1.65 0 0 0 666.5 351.9L666.6 354.9L667.4 355.1zM701.1 339.4A1.80 1.80 0 0 0 698.9 336.6L693.5 342.7L694.0 343.3zM461.6 296.3A1.65 1.65 0 0 0 458.4 297.2L460.9 301.8L461.6 301.7zM461.7 327.5A1.80 1.80 0 0 0 458.3 328.5L461.6 334.4L462.4 334.1zM461.7 344.9A1.80 1.80 0 0 0 458.3 346.1L462.1 353.1L462.9 352.9zM461.8 375.3A1.80 1.80 0 0 0 458.2 375.7L460.9 388.0L461.6 388.0zM650.2 268.7A1.65 1.65 0 0 0 647.3 267.3L646.6 271.6L647.4 271.9zM621.1 422.0A1.80 1.80 0 0 0 618.9 419.0L612.3 425.7L612.7 426.3zM770.5 266.9A1.80 1.80 0 0 0 767.0 266.6L766.6 283.0L767.4 283.0zM784.8 268.2A1.80 1.80 0 0 0 781.2 267.8L780.9 288.0L781.6 288.0zM789.8 263.1A1.80 1.80 0 0 0 786.2 262.9L785.9 284.2L786.6 284.3zM802.3 273.3A1.80 1.80 0 0 0 798.7 272.7L793.4 309.2L794.1 309.3zM816.3 264.6A1.80 1.80 0 0 0 812.7 263.9L809.6 287.9L810.4 288.1zM820.5 269.7A1.80 1.80 0 0 0 817.0 268.8L809.6 300.4L810.4 300.6zM780.5 283.3A1.80 1.80 0 0 0 777.0 282.7L770.9 327.9L771.6 328.1zM793.0 289.7A1.80 1.80 0 0 0 789.5 288.8L782.6 322.9L783.4 323.1zM849.2 273.6A1.80 1.80 0 0 0 845.8 272.4L837.1 300.4L837.9 300.6zM860.4 268.1A1.80 1.80 0 0 0 857.1 266.9L847.1 297.9L847.9 298.1zM859.2 273.7A1.80 1.80 0 0 0 855.8 272.3L848.4 294.1L849.1 294.4zM836.7 287.4A1.80 1.80 0 0 0 833.3 286.1L820.9 322.9L821.6 323.1zM832.9 310.0A1.80 1.80 0 0 0 829.6 308.5L818.4 335.3L819.1 335.7zM827.1 315.1A1.80 1.80 0 0 0 823.9 313.4L807.2 345.3L807.8 345.7zM820.3 323.9A1.80 1.80 0 0 0 817.2 322.1L804.7 345.3L805.3 345.7zM805.3 329.0A1.80 1.80 0 0 0 802.2 327.0L787.2 352.8L787.8 353.2zM791.4 341.7A1.80 1.80 0 0 0 788.6 339.3L770.9 362.7L771.6 363.3zM781.5 331.6A1.80 1.80 0 0 0 778.5 329.4L763.4 352.8L764.1 353.2zM765.3 343.9A1.80 1.80 0 0 0 762.2 342.1L759.7 349.0L760.3 349.5zM802.6 339.1A1.80 1.80 0 0 0 799.9 336.9L783.4 359.0L784.1 359.5zM773.7 359.3A1.80 1.80 0 0 0 771.3 356.7L759.7 369.0L760.3 369.5zM824.0 344.1A1.80 1.80 0 0 0 821.0 341.9L805.9 365.3L806.6 365.7zM808.9 356.6A1.80 1.80 0 0 0 806.1 354.4L789.7 376.5L790.3 377.0zM787.5 374.3A1.80 1.80 0 0 0 785.0 371.7L764.7 392.7L765.3 393.3zM785.0 381.8A1.80 1.80 0 0 0 782.5 379.2L767.2 395.2L767.8 395.8zM784.8 394.5A1.80 1.80 0 0 0 782.7 391.5L762.3 407.7L762.7 408.3zM780.9 407.5A1.80 1.80 0 0 0 779.1 404.5L759.8 417.7L760.2 418.3zM811.3 386.8A1.80 1.80 0 0 0 808.7 384.2L791.7 403.2L792.3 403.8zM829.0 370.3A1.80 1.80 0 0 0 826.0 368.2L815.9 385.3L816.6 385.7zM832.7 355.2A1.80 1.80 0 0 0 829.8 353.3L818.4 372.8L819.1 373.2zM846.6 343.9A1.80 1.80 0 0 0 843.4 342.1L832.2 364.0L832.8 364.5zM851.6 335.1A1.80 1.80 0 0 0 848.4 333.4L839.2 352.3L839.8 352.7zM845.3 329.4A1.80 1.80 0 0 0 842.2 327.6L830.9 349.0L831.6 349.5zM862.8 307.7A1.80 1.80 0 0 0 859.7 305.8L848.4 327.3L849.1 327.7zM880.3 291.4A1.80 1.80 0 0 0 877.2 289.6L867.7 309.1L868.3 309.4zM878.4 316.1A1.80 1.80 0 0 0 875.6 313.9L857.2 340.3L857.8 340.7zM899.0 296.0A1.80 1.80 0 0 0 896.0 294.0L887.2 310.3L887.8 310.7zM912.6 305.4A1.80 1.80 0 0 0 909.9 303.1L901.7 315.2L902.3 315.8zM877.6 351.2A1.80 1.80 0 0 0 874.9 348.8L865.9 361.5L866.6 362.0zM897.9 350.0A1.80 1.80 0 0 0 896.1 347.0L889.3 352.7L889.7 353.3zM847.6 379.7A1.80 1.80 0 0 0 844.9 377.3L829.7 397.7L830.3 398.3zM826.8 388.7A1.80 1.80 0 0 0 824.2 386.3L809.7 404.7L810.3 405.3zM858.4 387.2A1.80 1.80 0 0 0 855.6 384.8L845.2 399.0L845.8 399.5zM829.9 406.4A1.80 1.80 0 0 0 827.6 403.6L812.7 417.7L813.3 418.3zM843.6 413.9A1.80 1.80 0 0 0 841.4 411.1L832.3 419.7L832.7 420.3zM834.1 415.0A1.80 1.80 0 0 0 831.9 412.0L819.8 422.7L820.2 423.3zM861.0 408.2A1.80 1.80 0 0 0 859.0 405.3L852.8 411.4L853.2 412.1zM809.1 422.4A1.80 1.80 0 0 0 806.9 419.6L801.0 425.7L801.5 426.3zM886.0 399.9A1.65 1.65 0 0 0 883.0 401.1L885.9 405.1L886.6 404.9zM914.5 417.7A1.80 1.80 0 0 0 911.5 415.8L907.2 425.8L907.8 426.2zM927.8 420.2A1.80 1.80 0 0 0 924.7 418.3L922.2 425.3L922.8 425.7zM940.1 419.7A1.80 1.80 0 0 0 937.4 417.3L932.2 425.7L932.8 426.3zM948.8 268.0A1.80 1.80 0 0 0 946.2 265.5L934.7 280.2L935.3 280.8zM945.6 300.5A1.65 1.65 0 0 0 943.4 298.0L942.7 300.2L943.3 300.8zM984.6 275.6A1.65 1.65 0 0 0 981.4 275.4L982.1 281.0L982.9 281.0zM990.3 273.5A1.80 1.80 0 0 0 987.2 271.5L984.7 278.3L985.3 278.7zM1009.9 293.8A1.80 1.80 0 0 0 1007.6 291.2L995.2 304.0L995.8 304.5zM990.9 300.4A1.80 1.80 0 0 0 988.1 298.1L981.7 308.2L982.3 308.8zM975.2 314.5A1.80 1.80 0 0 0 972.3 312.5L965.9 324.0L966.6 324.5zM1001.7 314.4A1.80 1.80 0 0 0 999.3 311.6L988.5 322.7L989.0 323.3zM954.7 325.0A1.80 1.80 0 0 0 951.3 323.5L948.4 334.1L949.1 334.4zM993.2 330.6A1.80 1.80 0 0 0 990.8 327.9L984.7 335.2L985.3 335.8zM976.1 332.7A1.80 1.80 0 0 0 972.9 330.8L960.2 355.3L960.8 355.7zM947.2 349.7A1.80 1.80 0 0 0 943.8 348.8L942.1 360.4L942.9 360.6zM950.5 348.3A1.80 1.80 0 0 0 947.0 347.7L945.9 361.7L946.6 361.8zM915.8 354.0A1.65 1.65 0 0 0 913.2 356.0L917.2 359.5L917.8 359.0zM918.8 364.1A1.80 1.80 0 0 0 915.2 364.4L917.1 370.5L917.9 370.5zM933.0 360.2A1.80 1.80 0 0 0 929.5 359.8L929.6 370.5L930.4 370.5zM919.3 382.5A1.80 1.80 0 0 0 915.7 382.5L917.1 391.8L917.9 391.8zM954.3 390.1A1.80 1.80 0 0 0 950.7 389.9L951.6 403.0L952.4 403.0zM960.5 406.3A1.80 1.80 0 0 0 957.0 405.7L957.1 413.4L957.9 413.6zM1046.5 267.8A1.80 1.80 0 0 0 1043.5 265.7L1037.7 276.5L1038.3 277.0zM1051.2 265.4A1.65 1.65 0 0 0 1048.8 263.1L1047.2 266.5L1047.8 267.0zM1049.5 272.8A1.80 1.80 0 0 0 1046.5 270.7L1040.9 280.8L1041.6 281.2zM1040.0 283.0A1.80 1.80 0 0 0 1037.5 280.5L1022.7 297.7L1023.3 298.3zM1041.6 294.0A1.80 1.80 0 0 0 1039.4 291.0L1029.3 300.2L1029.7 300.8zM1032.3 304.5A1.80 1.80 0 0 0 1030.2 301.5L1021.0 309.7L1021.5 310.3zM1061.0 289.0A1.80 1.80 0 0 0 1059.0 286.0L1054.8 290.7L1055.2 291.3zM167.8 444.8A1.80 1.80 0 0 0 169.7 447.7L191.5 431.6L191.0 430.9zM167.6 453.6A1.80 1.80 0 0 0 169.9 456.4L185.3 441.6L184.7 440.9zM203.7 450.7A1.80 1.80 0 0 0 206.3 453.3L214.0 443.3L213.5 442.7zM205.0 453.7A1.80 1.80 0 0 0 207.5 456.3L215.8 446.5L215.2 446.0zM232.8 443.0A1.80 1.80 0 0 0 234.7 446.0L245.2 437.8L244.8 437.2zM240.1 431.2A1.80 1.80 0 0 0 240.9 434.8L263.8 428.4L263.7 427.6zM200.2 480.5A1.65 1.65 0 0 0 197.3 482.0L200.9 486.4L201.6 486.1zM207.2 475.7A1.80 1.80 0 0 0 203.8 476.8L207.1 482.1L207.9 481.9zM172.3 492.8A1.80 1.80 0 0 0 173.7 496.2L178.9 492.4L178.6 491.6zM180.6 495.1A1.80 1.80 0 0 0 183.4 497.4L189.8 487.8L189.2 487.2zM190.9 491.6A1.65 1.65 0 0 0 194.1 492.4L194.1 487.1L193.4 486.9zM196.0 501.0A1.80 1.80 0 0 0 199.0 503.0L205.3 491.5L204.7 491.0zM180.9 508.7A1.80 1.80 0 0 0 181.6 512.3L201.3 506.6L201.2 505.9zM179.7 513.2A1.80 1.80 0 0 0 180.3 516.8L192.6 513.4L192.4 512.6zM432.1 462.1A1.80 1.80 0 0 0 428.9 460.4L420.9 478.6L421.6 478.9zM432.9 478.0A1.80 1.80 0 0 0 429.6 479.5L430.5 481.4L431.8 484.1L433.4 487.1L435.3 489.6L437.5 491.3L439.9 492.6L442.1 493.5L443.6 494.1L443.9 493.4L442.6 492.5L440.7 491.2L438.8 489.6L437.2 487.9L436.0 485.6L434.8 482.7L433.7 480.0zM460.5 424.7A1.80 1.80 0 0 0 457.0 425.3L459.6 432.6L460.4 432.4zM344.1 518.9A1.80 1.80 0 0 0 345.9 522.1L372.7 505.3L372.3 504.7zM339.2 533.8A1.80 1.80 0 0 0 341.8 536.2L350.3 525.3L349.7 524.7zM320.5 553.9A1.80 1.80 0 0 0 323.5 556.1L332.3 541.5L331.7 541.0zM377.8 512.0A1.80 1.80 0 0 0 374.7 514.0L379.7 519.0L380.3 518.5zM383.8 511.0A1.80 1.80 0 0 0 380.2 511.5L382.6 517.6L383.4 517.4zM411.8 511.6A1.80 1.80 0 0 0 408.2 512.4L412.6 526.3L413.4 526.2zM414.7 510.6A1.80 1.80 0 0 0 411.3 511.9L416.6 522.6L417.4 522.4zM453.0 506.0A1.80 1.80 0 0 0 449.5 506.5L453.4 521.3L454.1 521.2zM407.9 528.0A1.80 1.80 0 0 0 404.6 529.5L409.6 537.7L410.4 537.3zM417.5 531.2A1.80 1.80 0 0 0 415.0 533.8L423.5 539.8L424.0 539.2zM444.7 539.1A1.80 1.80 0 0 0 441.3 539.9L445.9 552.6L446.6 552.4zM451.8 536.1A1.80 1.80 0 0 0 448.2 536.4L450.9 551.3L451.6 551.2zM389.3 548.4A1.80 1.80 0 0 0 385.7 549.1L388.4 555.1L389.1 554.9zM406.3 549.3A1.80 1.80 0 0 0 403.7 551.7L410.2 556.5L410.8 556.0zM417.6 548.3A1.80 1.80 0 0 0 414.9 550.7L421.7 556.5L422.3 556.0zM358.8 541.9A1.65 1.65 0 0 0 356.2 544.1L358.4 544.8L359.1 544.2zM360.1 552.8A1.65 1.65 0 0 0 357.4 554.7L359.7 555.7L360.3 555.3zM347.8 565.6A1.65 1.65 0 0 0 346.2 568.4L348.6 568.3L348.9 567.7zM356.0 571.6A1.80 1.80 0 0 0 359.0 573.4L361.6 566.5L360.9 566.0zM346.9 585.0A1.65 1.65 0 0 0 349.1 587.5L350.3 584.8L349.7 584.2zM399.8 588.1A1.65 1.65 0 0 0 402.7 589.4L403.4 585.2L402.6 584.8zM420.7 584.7A1.80 1.80 0 0 0 424.3 585.3L424.1 577.6L423.4 577.4zM427.0 582.1A1.80 1.80 0 0 0 430.5 582.9L430.9 573.8L430.1 573.7zM442.7 582.1A1.80 1.80 0 0 0 446.3 582.9L447.4 570.1L446.6 569.9zM434.6 596.4A1.80 1.80 0 0 0 437.9 597.6L440.9 585.1L440.1 584.9zM388.7 601.6A1.65 1.65 0 0 0 390.3 604.4L394.7 600.3L394.3 599.7zM380.6 617.3A1.65 1.65 0 0 0 381.9 620.2L385.2 617.4L384.8 616.6zM299.1 584.2A1.80 1.80 0 0 0 295.9 585.8L300.9 592.2L301.6 591.8zM306.2 580.6A1.80 1.80 0 0 0 302.8 581.9L306.6 587.6L307.4 587.4zM306.6 589.6A1.65 1.65 0 0 0 303.4 590.4L305.9 595.1L306.6 594.9zM318.6 591.8A1.80 1.80 0 0 0 315.4 593.2L319.1 598.2L319.9 597.8zM328.1 594.3A1.65 1.65 0 0 0 325.9 596.7L330.2 599.0L330.8 598.5zM336.9 605.5A1.65 1.65 0 0 0 335.6 608.5L338.6 608.4L338.9 607.6zM314.2 607.4A1.80 1.80 0 0 0 310.8 608.6L314.1 613.9L314.9 613.6zM308.7 621.9A1.80 1.80 0 0 0 305.3 623.1L309.1 629.6L309.9 629.4zM467.2 425.3A1.80 1.80 0 0 0 463.8 426.7L469.1 436.1L469.9 435.9zM499.0 425.2A1.65 1.65 0 0 0 496.0 426.8L499.1 429.9L499.9 429.6zM519.8 425.7A1.80 1.80 0 0 0 516.2 426.3L519.1 436.1L519.9 435.9zM475.4 444.0A1.80 1.80 0 0 0 472.1 445.5L480.9 461.2L481.6 460.8zM499.8 439.5A1.80 1.80 0 0 0 496.2 440.0L500.1 458.6L500.9 458.4zM533.0 440.1A1.80 1.80 0 0 0 529.5 439.4L525.9 462.2L526.6 462.3zM560.4 435.4A1.80 1.80 0 0 0 557.1 434.1L550.1 454.6L550.9 454.9zM577.2 426.5A1.80 1.80 0 0 0 573.8 425.5L569.6 445.9L570.4 446.1zM582.2 426.6A1.80 1.80 0 0 0 578.8 425.4L572.6 447.1L573.4 447.4zM589.7 428.0A1.80 1.80 0 0 0 586.3 426.5L579.1 447.1L579.9 447.4zM587.9 444.3A1.80 1.80 0 0 0 584.6 442.7L575.1 464.6L575.9 464.9zM616.7 427.3A1.80 1.80 0 0 0 614.3 424.7L601.7 438.2L602.3 438.8zM641.1 427.4A1.80 1.80 0 0 0 638.9 424.6L624.8 436.9L625.2 437.6zM649.8 428.7A1.80 1.80 0 0 0 647.7 425.8L632.3 438.2L632.7 438.8zM660.5 430.0A1.80 1.80 0 0 0 658.5 427.0L636.0 444.4L636.5 445.1zM633.8 442.3A1.80 1.80 0 0 0 631.2 439.7L612.7 460.7L613.3 461.3zM670.5 440.5A1.80 1.80 0 0 0 668.5 437.5L645.3 455.7L645.7 456.3zM643.7 454.3A1.80 1.80 0 0 0 641.3 451.7L621.7 472.0L622.3 472.5zM637.5 466.0A1.80 1.80 0 0 0 635.0 463.5L616.0 484.5L616.5 485.0zM608.4 459.6A1.80 1.80 0 0 0 605.6 457.4L590.9 479.5L591.6 480.0zM570.3 466.8A1.80 1.80 0 0 0 567.2 465.2L556.6 488.3L557.4 488.7zM577.9 473.1A1.80 1.80 0 0 0 574.6 471.4L564.6 494.6L565.4 494.9zM496.8 472.3A1.80 1.80 0 0 0 493.2 472.2L494.1 492.2L494.9 492.3zM529.8 472.6A1.80 1.80 0 0 0 526.2 471.9L523.4 492.2L524.1 492.3zM514.3 480.6A1.80 1.80 0 0 0 510.7 480.4L510.9 502.2L511.6 502.3zM530.5 482.7A1.80 1.80 0 0 0 527.0 481.8L523.4 503.4L524.1 503.6zM469.3 483.9A1.80 1.80 0 0 0 465.7 484.1L467.6 496.0L468.4 496.0zM474.8 494.7A1.80 1.80 0 0 0 471.2 494.8L473.4 512.3L474.1 512.2zM479.8 490.6A1.80 1.80 0 0 0 476.2 490.4L476.6 509.7L477.4 509.8zM503.0 498.1A1.80 1.80 0 0 0 499.5 497.9L499.1 521.0L499.9 521.0zM542.1 495.5A1.80 1.80 0 0 0 538.9 494.0L526.6 524.6L527.4 524.9zM488.0 513.2A1.80 1.80 0 0 0 484.5 512.8L483.4 537.2L484.1 537.3zM516.2 522.7A1.80 1.80 0 0 0 512.8 521.8L504.6 555.9L505.4 556.1zM497.3 534.3A1.80 1.80 0 0 0 493.7 533.7L490.9 559.7L491.6 559.8zM538.0 522.7A1.80 1.80 0 0 0 534.5 521.8L528.4 550.9L529.1 551.1zM541.7 533.6A1.80 1.80 0 0 0 538.3 532.4L522.1 582.1L522.9 582.4zM466.3 552.4A1.80 1.80 0 0 0 462.7 552.1L462.1 573.5L462.9 573.5zM567.9 517.8A1.80 1.80 0 0 0 564.6 516.7L557.1 542.1L557.9 542.4zM577.2 527.8A1.80 1.80 0 0 0 573.8 526.7L559.6 574.6L560.4 574.9zM586.7 526.7A1.80 1.80 0 0 0 583.3 525.3L574.6 550.9L575.4 551.1zM502.2 569.0A1.80 1.80 0 0 0 498.8 568.0L494.6 588.9L495.4 589.1zM469.6 584.0A1.65 1.65 0 0 0 466.4 583.0L465.9 588.9L466.6 589.1zM568.0 579.4A1.80 1.80 0 0 0 564.5 578.6L563.4 588.9L564.1 589.1zM563.0 582.7A1.80 1.80 0 0 0 559.5 581.8L559.1 588.9L559.9 589.1zM546.1 586.4A1.65 1.65 0 0 0 542.9 585.6L543.4 588.9L544.1 589.1zM672.1 474.6A1.80 1.80 0 0 0 670.4 471.4L646.1 486.9L646.4 487.6zM656.6 479.5A1.80 1.80 0 0 0 654.4 476.5L634.8 492.7L635.2 493.3zM678.3 483.8A1.80 1.80 0 0 0 676.7 480.7L658.6 491.9L658.9 492.6zM630.9 497.1A1.80 1.80 0 0 0 628.1 494.9L610.9 518.2L611.6 518.8zM627.8 512.0A1.80 1.80 0 0 0 624.7 510.0L614.7 528.3L615.3 528.7zM671.0 505.0A1.80 1.80 0 0 0 668.0 503.0L660.9 515.3L661.6 515.7zM666.6 525.6A1.80 1.80 0 0 0 663.4 523.9L652.2 547.1L652.8 547.4zM621.1 530.5A1.80 1.80 0 0 0 617.9 529.0L607.1 555.8L607.9 556.2zM609.2 541.7A1.80 1.80 0 0 0 605.8 540.3L594.6 569.6L595.4 569.9zM642.1 556.4A1.80 1.80 0 0 0 640.4 553.1L621.1 564.4L621.4 565.1zM702.2 436.3A1.80 1.80 0 0 0 700.3 433.2L676.0 450.7L676.5 451.3zM730.6 435.2A1.80 1.80 0 0 0 729.4 431.8L699.9 444.4L700.1 445.1zM710.9 441.3A1.80 1.80 0 0 0 709.1 438.2L684.8 453.1L685.2 453.9zM744.7 437.0A1.80 1.80 0 0 0 742.8 434.0L712.3 453.7L712.7 454.3zM752.0 429.6A1.80 1.80 0 0 0 750.5 426.4L722.3 440.6L722.7 441.4zM729.9 466.2A1.80 1.80 0 0 0 727.6 463.3L699.8 486.9L700.2 487.6zM735.9 472.6A1.80 1.80 0 0 0 734.1 469.4L702.3 489.4L702.7 490.1zM731.0 471.2A1.80 1.80 0 0 0 729.0 468.3L709.8 483.2L710.2 483.8zM747.6 485.7A1.65 1.65 0 0 0 744.9 483.8L744.2 487.0L744.8 487.5zM752.8 496.4A1.65 1.65 0 0 0 749.7 495.6L749.6 500.4L750.4 500.6zM740.0 505.1A1.65 1.65 0 0 0 737.5 502.9L736.7 505.7L737.3 506.3zM729.8 509.8A1.65 1.65 0 0 0 727.7 507.2L726.0 510.2L726.5 510.8zM689.0 521.2A1.65 1.65 0 0 0 686.0 519.8L685.9 522.8L686.6 523.2zM715.3 515.6A1.80 1.80 0 0 0 712.2 517.4L717.2 523.2L717.8 522.8zM711.6 524.2A1.65 1.65 0 0 0 708.4 525.3L710.9 528.6L711.6 528.4zM750.1 524.7A1.80 1.80 0 0 0 747.4 522.3L742.2 530.2L742.8 530.8zM743.1 537.4A1.80 1.80 0 0 0 740.9 534.6L736.8 539.4L737.2 540.1zM721.1 544.0A1.65 1.65 0 0 0 717.9 543.0L718.4 545.9L719.1 546.1zM730.1 550.7A1.65 1.65 0 0 0 727.4 548.8L727.2 551.3L727.8 551.7zM725.1 554.0A1.65 1.65 0 0 0 722.4 552.0L722.2 554.5L722.8 555.0zM684.1 556.8A1.65 1.65 0 0 0 680.9 556.2L681.6 559.7L682.4 559.8zM679.1 566.0A1.65 1.65 0 0 0 675.9 566.0L677.1 571.0L677.9 571.0zM718.1 569.5A1.65 1.65 0 0 0 716.9 566.5L714.9 568.6L715.1 569.4zM747.9 565.5A1.80 1.80 0 0 0 744.6 564.0L740.9 575.8L741.6 576.2zM761.5 561.9A1.80 1.80 0 0 0 758.5 560.1L752.2 573.3L752.8 573.7zM738.6 576.4A1.80 1.80 0 0 0 735.4 574.6L729.6 588.3L730.4 588.7zM752.8 578.9A1.80 1.80 0 0 0 749.7 577.1L745.9 587.1L746.6 587.4zM761.4 577.1A1.80 1.80 0 0 0 758.6 574.9L755.9 580.8L756.6 581.2zM712.9 582.6A1.65 1.65 0 0 0 709.6 583.4L712.1 588.6L712.9 588.4zM634.0 521.1A1.65 1.65 0 0 0 631.0 519.9L630.9 523.3L631.6 523.7zM800.7 427.7A1.80 1.80 0 0 0 799.3 424.3L759.8 441.9L760.2 442.6zM810.8 430.1A1.80 1.80 0 0 0 809.2 426.9L792.3 436.9L792.7 437.6zM803.0 454.0A1.80 1.80 0 0 0 802.0 450.5L778.6 458.1L778.9 458.9zM827.5 450.8A1.80 1.80 0 0 0 827.5 447.2L818.8 448.6L818.8 449.4zM841.1 439.3A1.65 1.65 0 0 0 838.9 441.7L843.5 444.3L844.0 443.7zM848.8 447.4A1.80 1.80 0 0 0 845.2 447.1L845.9 454.7L846.6 454.8zM818.8 462.8A1.80 1.80 0 0 0 818.8 459.2L811.2 460.6L811.2 461.4zM822.6 457.3A1.80 1.80 0 0 0 819.9 459.7L825.2 463.3L825.8 462.7zM830.5 466.8A1.80 1.80 0 0 0 827.0 467.7L830.1 474.8L830.9 474.7zM785.2 468.9A1.80 1.80 0 0 0 783.8 465.6L778.6 469.4L778.9 470.1zM790.1 489.9A1.65 1.65 0 0 0 787.4 488.1L785.2 493.8L785.8 494.2zM779.6 493.7A1.65 1.65 0 0 0 777.9 490.8L774.3 494.4L774.7 495.1zM772.5 505.2A1.80 1.80 0 0 0 770.0 502.8L764.7 510.2L765.3 510.8zM771.3 515.2A1.80 1.80 0 0 0 768.7 512.8L763.5 520.7L764.0 521.3zM802.7 512.4A1.80 1.80 0 0 0 799.8 514.6L805.2 519.2L805.8 518.8zM776.3 540.3A1.80 1.80 0 0 0 773.7 537.7L767.2 546.2L767.8 546.8zM788.9 542.9A1.80 1.80 0 0 0 786.1 545.1L792.2 550.7L792.8 550.3zM765.2 557.1A1.80 1.80 0 0 0 762.3 554.9L759.7 560.8L760.3 561.2zM833.0 505.9A1.80 1.80 0 0 0 829.5 506.1L831.6 523.5L832.4 523.5zM838.8 512.1A1.80 1.80 0 0 0 835.2 512.4L837.6 527.3L838.4 527.2zM819.8 518.8A1.80 1.80 0 0 0 816.2 519.2L819.6 534.8L820.4 534.7zM842.3 520.9A1.80 1.80 0 0 0 838.7 521.1L841.6 542.3L842.4 542.2zM831.3 525.3A1.80 1.80 0 0 0 827.7 525.7L830.9 543.5L831.6 543.5zM827.3 531.0A1.80 1.80 0 0 0 823.7 531.0L825.1 549.8L825.9 549.8zM806.3 530.1A1.80 1.80 0 0 0 802.7 530.9L806.6 541.6L807.4 541.4zM804.8 542.1A1.80 1.80 0 0 0 801.2 542.4L804.1 556.0L804.9 556.0zM835.5 535.7A1.80 1.80 0 0 0 832.0 536.3L836.6 556.1L837.4 555.9zM838.0 543.1A1.80 1.80 0 0 0 834.5 543.9L840.1 564.8L840.9 564.7zM823.0 562.9A1.80 1.80 0 0 0 819.5 563.1L822.6 586.0L823.4 586.0zM841.3 565.6A1.80 1.80 0 0 0 837.7 566.4L842.6 583.6L843.4 583.4zM793.0 567.2A1.80 1.80 0 0 0 789.5 567.3L791.6 581.0L792.4 581.0zM778.0 574.6A1.80 1.80 0 0 0 774.5 574.9L776.6 583.0L777.4 583.0zM813.0 573.0A1.80 1.80 0 0 0 809.5 573.0L810.9 587.2L811.6 587.2zM769.1 582.1A1.65 1.65 0 0 0 765.9 582.4L767.6 587.3L768.4 587.2zM871.7 462.9A1.80 1.80 0 0 0 868.3 461.6L867.0 465.2L865.0 470.4L863.0 476.6L861.6 483.3L860.9 491.0L860.7 499.8L860.8 507.9L860.9 513.5L861.6 513.5L862.1 507.9L862.6 499.9L863.4 491.2L864.4 483.7L866.1 477.5L868.2 471.6L870.3 466.5zM890.9 449.6A1.80 1.80 0 0 0 888.1 447.4L875.2 467.0L875.8 467.5zM898.9 453.3A1.80 1.80 0 0 0 896.1 451.2L885.2 468.3L885.8 468.7zM902.5 429.8A1.80 1.80 0 0 0 900.0 427.2L890.2 438.2L890.8 438.8zM921.1 429.9A1.80 1.80 0 0 0 918.9 427.1L907.3 437.7L907.7 438.3zM936.0 427.5A1.80 1.80 0 0 0 934.0 424.5L926.0 431.9L926.5 432.6zM859.8 525.2A1.80 1.80 0 0 0 856.2 525.8L862.1 549.8L862.9 549.7zM877.9 529.1A1.80 1.80 0 0 0 874.6 530.4L884.6 552.4L885.4 552.1zM858.0 550.0A1.80 1.80 0 0 0 854.5 551.0L861.6 569.9L862.4 569.6zM864.2 570.4A1.80 1.80 0 0 0 860.8 571.6L868.4 587.4L869.1 587.1zM891.3 543.5A1.80 1.80 0 0 0 888.7 546.0L901.7 558.3L902.3 557.7zM893.2 559.7A1.80 1.80 0 0 0 890.8 562.3L903.5 572.5L904.0 572.0zM913.8 558.2A1.80 1.80 0 0 0 912.2 561.3L922.3 565.1L922.7 564.4zM914.0 567.0A1.80 1.80 0 0 0 912.0 570.0L924.8 576.3L925.2 575.7zM921.0 552.7A1.65 1.65 0 0 0 919.0 555.3L922.3 556.3L922.7 555.7zM936.2 581.5A1.80 1.80 0 0 0 932.8 580.5L932.1 588.4L932.9 588.6zM928.6 583.0A1.65 1.65 0 0 0 925.4 584.0L928.4 589.1L929.1 588.9zM761.6 574.2A1.65 1.65 0 0 0 758.4 575.3L760.9 578.6L761.6 578.4zM469.8 584.1A1.80 1.80 0 0 0 466.2 583.4L463.4 604.9L464.1 605.1zM473.0 591.7A1.80 1.80 0 0 0 469.5 590.8L463.4 617.4L464.1 617.6zM491.2 587.4A1.80 1.80 0 0 0 487.8 586.6L482.1 614.9L482.9 615.1zM494.7 592.5A1.80 1.80 0 0 0 491.3 591.5L484.6 619.9L485.4 620.1zM505.5 593.0A1.80 1.80 0 0 0 502.0 592.0L494.1 622.4L494.9 622.6zM546.2 586.8A1.80 1.80 0 0 0 542.8 585.7L535.9 613.6L536.6 613.9zM554.7 585.0A1.80 1.80 0 0 0 551.3 584.0L545.9 609.9L546.6 610.1zM556.7 594.2A1.80 1.80 0 0 0 553.3 593.3L547.1 619.9L547.9 620.1zM563.0 581.8A1.80 1.80 0 0 0 559.5 580.7L554.6 602.4L555.4 602.6zM568.0 579.2A1.80 1.80 0 0 0 564.5 578.3L559.6 604.9L560.4 605.1zM575.5 593.4A1.80 1.80 0 0 0 572.0 592.6L567.1 617.4L567.9 617.6zM621.8 605.6A1.80 1.80 0 0 0 618.2 605.4L619.1 617.5L619.9 617.5zM644.6 612.5A1.65 1.65 0 0 0 641.4 611.5L641.6 614.9L642.4 615.1zM661.1 602.6A1.65 1.65 0 0 0 657.9 603.4L660.1 607.6L660.9 607.4zM675.6 612.3A1.80 1.80 0 0 0 675.4 608.7L663.7 610.9L663.8 611.6zM639.8 619.9A1.65 1.65 0 0 0 637.7 622.6L641.8 624.1L642.2 623.4zM709.3 589.7A1.80 1.80 0 0 0 705.7 589.3L705.9 600.0L706.6 600.0zM706.1 603.8A1.80 1.80 0 0 0 702.9 602.2L699.1 612.3L699.9 612.7zM727.9 589.6A1.80 1.80 0 0 0 724.6 587.9L717.1 606.1L717.9 606.4zM740.3 588.4A1.80 1.80 0 0 0 737.2 586.6L730.9 599.8L731.6 600.2zM736.5 601.0A1.80 1.80 0 0 0 733.5 599.0L726.7 612.3L727.3 612.7zM732.9 608.1A1.80 1.80 0 0 0 729.6 606.9L727.1 617.4L727.9 617.6zM728.5 623.1A1.65 1.65 0 0 0 725.5 624.4L728.4 628.2L729.1 627.8zM738.0 629.7A1.80 1.80 0 0 0 737.0 626.3L731.1 629.6L731.4 630.4zM745.6 609.0A1.65 1.65 0 0 0 744.4 612.0L749.9 612.9L750.1 612.1zM752.4 615.2A1.80 1.80 0 0 0 750.1 612.3L744.8 618.4L745.2 619.1zM761.0 622.7A1.80 1.80 0 0 0 759.0 619.8L752.3 625.9L752.7 626.6zM761.2 576.3A1.80 1.80 0 0 0 758.8 573.7L747.2 586.0L747.8 586.5zM761.4 566.1A1.80 1.80 0 0 0 758.6 563.9L752.7 573.8L753.3 574.2zM822.8 562.9A1.80 1.80 0 0 0 819.2 563.1L822.0 595.0L822.8 595.0zM827.8 593.3A1.80 1.80 0 0 0 824.2 592.7L823.2 607.9L824.0 608.1zM840.8 559.7A1.80 1.80 0 0 0 837.2 560.3L842.0 584.1L842.8 583.9zM859.7 559.4A1.80 1.80 0 0 0 856.3 560.6L867.6 587.1L868.4 586.9zM862.7 585.0A1.80 1.80 0 0 0 859.3 586.2L866.0 601.7L866.8 601.5zM890.8 593.2A1.80 1.80 0 0 0 887.2 594.0L891.6 608.1L892.4 607.9zM896.7 590.4A1.80 1.80 0 0 0 893.3 591.6L899.2 604.1L900.0 603.9zM926.8 602.8A1.80 1.80 0 0 0 923.2 602.0L922.6 612.3L923.4 612.5zM845.8 603.2A1.80 1.80 0 0 0 842.2 602.8L842.0 617.0L842.8 617.0zM932.7 579.5A1.80 1.80 0 0 0 929.3 580.5L933.2 589.7L934.0 589.5zM786.7 595.6A1.80 1.80 0 0 0 783.3 594.4L780.6 605.9L781.4 606.1zM774.4 604.1A1.80 1.80 0 0 0 771.6 601.9L766.7 610.8L767.3 611.2zM749.2 610.1A1.65 1.65 0 0 0 746.8 607.9L744.7 612.1L745.3 612.7zM776.3 612.8A1.80 1.80 0 0 0 773.7 610.4L767.7 618.7L768.3 619.3zM766.1 619.5A1.80 1.80 0 0 0 763.9 616.5L753.8 625.7L754.2 626.3zM790.3 618.3A1.80 1.80 0 0 0 787.7 615.7L777.7 627.7L778.3 628.3zM798.2 614.4A1.80 1.80 0 0 0 795.8 611.6L783.7 623.7L784.3 624.3zM815.3 601.7A1.80 1.80 0 0 0 811.9 600.3L807.6 613.8L808.4 614.2zM821.6 610.9A1.80 1.80 0 0 0 818.4 609.1L812.1 622.8L812.7 623.2zM826.4 612.1A1.80 1.80 0 0 0 823.6 609.9L816.7 620.8L817.3 621.2zM833.2 619.3A1.80 1.80 0 0 0 830.8 616.7L817.7 630.1L818.3 630.7z"/></svg></div>
<div id="status" class="abs"></div>
<div class="inp abs" style="left:2px;width:150px;color:#9a9c9e;padding-left:18px">Type to locate (Ctrl+K)</div>
<div class="lbl abs" style="left:658px">Coordinate</div>
<div class="inp abs" style="left:696px;width:75px;padding-left:8px">-43.1333,-22.7438</div>
<div class="lbl abs" style="left:791.5px;letter-spacing:-.2px">Scale</div>
<div class="inp abs" style="left:810px;width:55px;padding-left:3px">3:1</div>
<div class="lbl abs" style="left:886px">Magnifier</div>
<div class="inp abs" style="left:919px;width:56px;padding-left:3px">100%</div>
<div class="lbl abs" style="left:983px">Rotation</div>
<div class="inp abs" style="left:1016px;width:56px;padding-left:3px">0.0 °</div>
<div class="lbl abs" style="left:1088px">Re<u>n</u>der</div>
<div class="lbl abs" style="left:1135px;letter-spacing:-.33px">EPSG:<u>3</u>2620</div>
<svg class="abs" style="left:0;top:632px;pointer-events:none" width="1200" height="20" viewBox="0 632 1200 20"><circle cx="10.6" cy="641" r="2.7" fill="none" stroke="#6d7278" stroke-width=".9"/><path d="M12.6 643l2.4 2.4" stroke="#6d7278" stroke-width="1"/><path d="M774 638.600c1.6-1.6 4-1.6 5.4 0s1.4 4.2 0 5.800M775 646.400l3-3M773.6 642l2 2M778.4 637.200l-5.4 8.2" fill="none" stroke="#3a3f44" stroke-width=".9"/><circle cx="780.6" cy="639" r="1.3" fill="#3a3f44"/><path d="M851.6 635.600v12.8" stroke="#cfd1d3" stroke-width=".7"/><path d="M855 640.800h4.400l-2.2 2.600z" fill="#5f6468"/><rect x="870.6" y="641" width="7.6" height="5.6" rx=".8" fill="#6d7278"/><path d="M872.2 641v-1.800a2.2 2.2 0 0 1 4.4 0v1.8" fill="none" stroke="#6d7278" stroke-width="1"/><path d="M968.8 640.400l2-2.2 2 2.200zM968.8 643.600l2 2.2 2-2.200z" fill="#5f6468"/><path d="M1066.0 640.400l2-2.2 2 2.200zM1066.0 643.600l2 2.2 2-2.200z" fill="#5f6468"/><rect x="1076.4" y="637.6" width="8.4" height="8.4" rx="1" fill="#fdfdfd" stroke="#8b8e91" stroke-width=".8"/><path d="M1078.2 641.800l1.8 2 3.2-4.4" fill="none" stroke="#1d2023" stroke-width="1.2"/><ellipse cx="1127.4" cy="641.8" rx="4.4" ry="3.8" fill="#8b9095" stroke="#5a5f64" stroke-width=".6"/><path d="M1123 641.800h8.800M1127.4 638v7.600M1124 639.800h6.800M1124 643.800h6.8" stroke="#e6e7e8" stroke-width=".5"/><path d="M1125 646.400h5" stroke="#5a5f64" stroke-width="1"/><path d="M1186.2 640.400a3 3 0 0 1 3-2.400h3a3 3 0 0 1 0 6.800h-3.400l-2.6 2 .6-2.600a3 3 0 0 1-.6-3.800z" fill="#3a3f44"/><g fill="#eff0f1"><circle cx="1188.8" cy="641.5" r=".6"/><circle cx="1190.8" cy="641.5" r=".6"/><circle cx="1192.8" cy="641.5" r=".6"/></g></svg><svg class="abs" style="left:160px;top:350px;pointer-events:none" width="24" height="24" viewBox="160 350 24 24"><g fill="none" stroke="#ecd9ea" stroke-width="1.5" stroke-linejoin="round"><rect x="168.4" y="356.2" width="2" height="9" rx="1"/><rect x="170.6" y="355.4" width="2" height="9" rx="1"/><rect x="172.8" y="355.8" width="2" height="9" rx="1"/><rect x="175" y="357.4" width="2" height="8" rx="1"/><path d="M168.3 362h8.800l-.2 4-1.6 2.600h-4.800l-2.4-3z"/><path d="M164.7 362.300l1.5-1.1 2.4 2.6 1 3.2-2-.6z"/></g><g fill="#4b4f52"><rect x="168.4" y="356.2" width="2" height="9" rx="1"/><rect x="170.6" y="355.4" width="2" height="9" rx="1"/><rect x="172.8" y="355.8" width="2" height="9" rx="1"/><rect x="175" y="357.4" width="2" height="8" rx="1"/><path d="M168.3 362h8.800l-.2 4-1.6 2.600h-4.800l-2.4-3z"/><path d="M164.7 362.300l1.5-1.1 2.4 2.6 1 3.2-2-.6z"/></g><path d="M170.5 358v5M172.7 357.400v5.600M174.9 358v5" stroke="#6a6e71" stroke-width=".4"/></svg>
</body></html>
